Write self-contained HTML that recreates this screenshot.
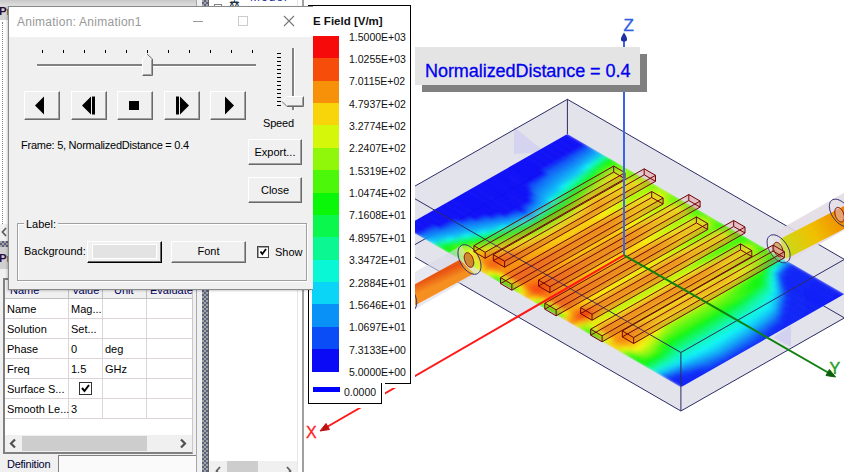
<!DOCTYPE html>
<html><head><meta charset="utf-8">
<style>
*{box-sizing:border-box;margin:0;padding:0}
html,body{width:844px;height:472px;overflow:hidden;background:#fff}
body{position:relative;font-family:"Liberation Sans",sans-serif;font-size:11px;color:#000}
.a{position:absolute}
.btn{position:absolute;background:#f0f0f0;border-top:1px solid #fff;border-left:1px solid #fff;border-right:1px solid #696969;border-bottom:1px solid #696969;box-shadow:inset -1px -1px 0 #a0a0a0}
.btn span{position:absolute;left:0;right:0;text-align:center}
.grid{position:absolute;border-bottom:1px solid #dcd4d8}
</style></head><body>

<!-- ===== background left panel ===== -->
<div class="a" style="left:0;top:0;width:202px;height:6px;background:linear-gradient(#c8c8c8,#e0e0e0)"></div>
<div class="a" style="left:0;top:6px;width:202px;height:14px;background:#d4d4d4"></div>
<div class="a" style="left:-1px;top:3px;font-size:11.5px;font-weight:bold;color:#280c30;line-height:13px;padding-top:2px">Project M</div>
<div class="a" style="left:0;top:20px;width:197px;height:204px;background:#fff"></div>
<div class="a" style="left:2px;top:22px;width:1px;height:202px;border-left:1px dotted #808080"></div>
<div class="a" style="left:0;top:224px;width:197px;height:17px;background:#f0f0f0"></div>


<div class="a" style="left:0;top:241px;width:202px;height:6px;background:repeating-conic-gradient(#5a6280 0 25%,#a4a4a4 0 50%) 0 0/4px 4px"></div>
<div class="a" style="left:0;top:247px;width:197px;height:22px;background:#d0d0d0"></div>
<div class="a" style="left:-1px;top:252px;font-size:11.5px;font-weight:bold;color:#280c40;line-height:13px">Properties</div>
<div class="a" style="left:0;top:269px;width:197px;height:203px;background:#f0f0f0"></div>
<!-- table -->
<div class="a" style="left:3px;top:278px;width:190px;height:176px;border:2px solid #808080;border-right:1px solid #c8c8c8;background:#fff"></div>
<div class="a" style="left:5px;top:280px;width:187px;height:19px;background:#f0f0f0;border-bottom:1px solid #c0c0c0"></div>
<div class="a" style="left:10px;top:284px;color:#000060">Name</div>
<div class="a" style="left:72px;top:284px;color:#000060">Value</div>
<div class="a" style="left:114px;top:284px;color:#000060">Unit</div>
<div class="a" style="left:150px;top:284px;color:#000060">Evaluate</div>
<div class="a" style="left:68px;top:280px;width:1px;height:19px;background:#c0c0c0"></div>
<div class="a" style="left:102px;top:280px;width:1px;height:19px;background:#c0c0c0"></div>
<div class="a" style="left:146px;top:280px;width:1px;height:19px;background:#c0c0c0"></div>
<div class="a" style="left:68px;top:299px;width:1px;height:120px;border-left:1px solid #dcd4d8"></div>
<div class="a" style="left:102px;top:299px;width:1px;height:120px;border-left:1px solid #dcd4d8"></div>
<div class="a" style="left:146px;top:299px;width:1px;height:120px;border-left:1px solid #dcd4d8"></div>
<div class="grid" style="left:5px;top:299px;width:187px;height:20px"></div>
<div class="grid" style="left:5px;top:319px;width:187px;height:20px"></div>
<div class="grid" style="left:5px;top:339px;width:187px;height:20px"></div>
<div class="grid" style="left:5px;top:359px;width:187px;height:20px"></div>
<div class="grid" style="left:5px;top:379px;width:187px;height:20px"></div>
<div class="grid" style="left:5px;top:399px;width:187px;height:20px"></div>
<div class="a" style="left:7px;top:303px">Name</div><div class="a" style="left:71px;top:303px">Mag...</div>
<div class="a" style="left:7px;top:323px">Solution</div><div class="a" style="left:71px;top:323px">Set...</div>
<div class="a" style="left:7px;top:343px">Phase</div><div class="a" style="left:71px;top:343px">0</div><div class="a" style="left:105px;top:343px">deg</div>
<div class="a" style="left:7px;top:363px">Freq</div><div class="a" style="left:71px;top:363px">1.5</div><div class="a" style="left:105px;top:363px">GHz</div>
<div class="a" style="left:7px;top:383px">Surface S...</div>
<div class="a" style="left:79px;top:382px;width:13px;height:13px;border:1px solid #333;background:#fff"><svg width="11" height="11" style="position:absolute;left:0;top:0"><path d="M2 5 L4.5 8 L9 2" stroke="#000" stroke-width="2" fill="none"/></svg></div>
<div class="a" style="left:7px;top:403px">Smooth Le...</div><div class="a" style="left:71px;top:403px">3</div>
<!-- table scrollbar -->
<div class="a" style="left:5px;top:435px;width:187px;height:17px;background:#f0f0f0"></div>
<div class="a" style="left:22px;top:436px;width:125px;height:15px;background:#cdcdcd"></div>
<svg class="a" style="left:0;top:0" width="200" height="472"><path d="M15 439.5 L11 443.5 L15 447.5" stroke="#505050" stroke-width="2.2" fill="none"/><path d="M181 439.5 L185 443.5 L181 447.5" stroke="#505050" stroke-width="2.2" fill="none"/><path d="M6 228 L2.5 232 L6 236" stroke="#606060" stroke-width="1.8" fill="none"/></svg>
<!-- definition tab -->
<div class="a" style="left:58px;top:455px;width:139px;height:17px;background:#fafafa;border-top:1px solid #808080;border-left:1px solid #808080"></div>
<div class="a" style="left:7px;top:458px;font-size:11px;color:#000030;letter-spacing:-0.25px">Definition</div>

<!-- vertical splitter -->
<div class="a" style="left:197px;top:0;width:5px;height:472px;background:#f0f0f0"></div>
<div class="a" style="left:196px;top:0;width:1px;height:472px;background:#a8a8a8"></div>
<div class="a" style="left:202px;top:0;width:7px;height:472px;background:repeating-conic-gradient(#5a6280 0 25%,#a4a4a4 0 50%) 0 0/4px 4px"></div>
<div class="a" style="left:208px;top:0;width:1px;height:472px;background:#606060"></div>
<!-- middle panel -->
<div class="a" style="left:209px;top:0;width:94px;height:472px;background:#fff"></div>
<div class="a" style="left:297px;top:0;width:1px;height:472px;background:#e8e8e8"></div>
<div class="a" style="left:302px;top:0;width:2px;height:472px;background:#a0a0a0"></div>
<div class="a" style="left:209px;top:461px;width:88px;height:11px;background:#f0f0f0"></div>
<div class="a" style="left:227px;top:461px;width:31px;height:11px;background:#cdcdcd"></div>
<svg class="a" style="left:200px;top:440px" width="100" height="32"><path d="M20 27 L16.5 31 L20 35" stroke="#606060" stroke-width="1.8" fill="none"/><path d="M87 27 L90.5 31 L87 35" stroke="#606060" stroke-width="1.8" fill="none"/></svg>

<div class="a" style="left:214px;top:4px;width:8px;height:8px;border:1px solid #808080"></div>
<div class="a" style="left:229px;top:-2px;font-size:12px;font-weight:bold;color:#203040">&#x2696;</div>
<div class="a" style="left:250px;top:-10px;font-size:12px;color:#2030a0;letter-spacing:1px">Model</div>
<!-- 3D view -->
<div class="a" style="left:304px;top:0;width:540px;height:472px;background:#fff"></div>


<svg class="a" style="left:0;top:0" width="844" height="472">
<defs><linearGradient id="g0" gradientUnits="userSpaceOnUse" x1="0" y1="0" x2="1000" y2="0"><stop offset="0.000" stop-color="#0a0af7"/><stop offset="0.020" stop-color="#0a0af7"/><stop offset="0.040" stop-color="#0a0af7"/><stop offset="0.060" stop-color="#0a0af7"/><stop offset="0.080" stop-color="#0a61f7"/><stop offset="0.100" stop-color="#0a90f7"/><stop offset="0.120" stop-color="#0abff7"/><stop offset="0.140" stop-color="#0af7a0"/><stop offset="0.160" stop-color="#10f70a"/><stop offset="0.180" stop-color="#39f70a"/><stop offset="0.200" stop-color="#71f70a"/><stop offset="0.220" stop-color="#87f70a"/><stop offset="0.240" stop-color="#6ef70a"/><stop offset="0.260" stop-color="#99f70a"/><stop offset="0.280" stop-color="#b7f70a"/><stop offset="0.300" stop-color="#a2f70a"/><stop offset="0.320" stop-color="#83f70a"/><stop offset="0.340" stop-color="#a2f70a"/><stop offset="0.360" stop-color="#adf70a"/><stop offset="0.380" stop-color="#83f70a"/><stop offset="0.400" stop-color="#65f70a"/><stop offset="0.420" stop-color="#85f70a"/><stop offset="0.440" stop-color="#88f70a"/><stop offset="0.460" stop-color="#5df70a"/><stop offset="0.480" stop-color="#43f70a"/><stop offset="0.500" stop-color="#65f70a"/><stop offset="0.520" stop-color="#7df70a"/><stop offset="0.540" stop-color="#5ff70a"/><stop offset="0.560" stop-color="#3af70a"/><stop offset="0.580" stop-color="#5ef70a"/><stop offset="0.600" stop-color="#72f70a"/><stop offset="0.620" stop-color="#50f70a"/><stop offset="0.640" stop-color="#2af70a"/><stop offset="0.660" stop-color="#46f70a"/><stop offset="0.680" stop-color="#67f70a"/><stop offset="0.700" stop-color="#52f70a"/><stop offset="0.720" stop-color="#3ef70a"/><stop offset="0.740" stop-color="#5cf70a"/><stop offset="0.760" stop-color="#0af73f"/><stop offset="0.780" stop-color="#0af7de"/><stop offset="0.800" stop-color="#0a76f7"/><stop offset="0.820" stop-color="#0a25f7"/><stop offset="0.840" stop-color="#0a24f7"/><stop offset="0.860" stop-color="#0a22f7"/><stop offset="0.880" stop-color="#0a21f7"/><stop offset="0.900" stop-color="#0a1ff7"/><stop offset="0.920" stop-color="#0a1ef7"/><stop offset="0.940" stop-color="#0a1df7"/><stop offset="0.960" stop-color="#0a1bf7"/><stop offset="0.980" stop-color="#0a1af7"/><stop offset="1.000" stop-color="#0a18f7"/></linearGradient><linearGradient id="g1" gradientUnits="userSpaceOnUse" x1="0" y1="0" x2="1000" y2="0"><stop offset="0.000" stop-color="#0a0af7"/><stop offset="0.020" stop-color="#0a0af7"/><stop offset="0.040" stop-color="#0a0af7"/><stop offset="0.060" stop-color="#0a0af7"/><stop offset="0.080" stop-color="#0a5ef7"/><stop offset="0.100" stop-color="#0a8df7"/><stop offset="0.120" stop-color="#0abcf7"/><stop offset="0.140" stop-color="#0af7aa"/><stop offset="0.160" stop-color="#0bf70a"/><stop offset="0.180" stop-color="#3ef70a"/><stop offset="0.200" stop-color="#7af70a"/><stop offset="0.220" stop-color="#95f70a"/><stop offset="0.240" stop-color="#75f70a"/><stop offset="0.260" stop-color="#a2f70a"/><stop offset="0.280" stop-color="#c1f70a"/><stop offset="0.300" stop-color="#a6f70a"/><stop offset="0.320" stop-color="#86f70a"/><stop offset="0.340" stop-color="#aaf70a"/><stop offset="0.360" stop-color="#b8f70a"/><stop offset="0.380" stop-color="#8cf70a"/><stop offset="0.400" stop-color="#6cf70a"/><stop offset="0.420" stop-color="#91f70a"/><stop offset="0.440" stop-color="#96f70a"/><stop offset="0.460" stop-color="#68f70a"/><stop offset="0.480" stop-color="#4bf70a"/><stop offset="0.500" stop-color="#71f70a"/><stop offset="0.520" stop-color="#8df70a"/><stop offset="0.540" stop-color="#6bf70a"/><stop offset="0.560" stop-color="#3ff70a"/><stop offset="0.580" stop-color="#6af70a"/><stop offset="0.600" stop-color="#83f70a"/><stop offset="0.620" stop-color="#59f70a"/><stop offset="0.640" stop-color="#2bf70a"/><stop offset="0.660" stop-color="#4ef70a"/><stop offset="0.680" stop-color="#78f70a"/><stop offset="0.700" stop-color="#5ff70a"/><stop offset="0.720" stop-color="#46f70a"/><stop offset="0.740" stop-color="#5ff70a"/><stop offset="0.760" stop-color="#0af72b"/><stop offset="0.780" stop-color="#0af7ca"/><stop offset="0.800" stop-color="#0a88f7"/><stop offset="0.820" stop-color="#0a25f7"/><stop offset="0.840" stop-color="#0a24f7"/><stop offset="0.860" stop-color="#0a23f7"/><stop offset="0.880" stop-color="#0a21f7"/><stop offset="0.900" stop-color="#0a20f7"/><stop offset="0.920" stop-color="#0a1ef7"/><stop offset="0.940" stop-color="#0a1df7"/><stop offset="0.960" stop-color="#0a1bf7"/><stop offset="0.980" stop-color="#0a1af7"/><stop offset="1.000" stop-color="#0a18f7"/></linearGradient><linearGradient id="g2" gradientUnits="userSpaceOnUse" x1="0" y1="0" x2="1000" y2="0"><stop offset="0.000" stop-color="#0a0af7"/><stop offset="0.020" stop-color="#0a0af7"/><stop offset="0.040" stop-color="#0a0af7"/><stop offset="0.060" stop-color="#0a0af7"/><stop offset="0.080" stop-color="#0a5af7"/><stop offset="0.100" stop-color="#0a89f7"/><stop offset="0.120" stop-color="#0ab9f7"/><stop offset="0.140" stop-color="#0af7b5"/><stop offset="0.160" stop-color="#0af711"/><stop offset="0.180" stop-color="#45f70a"/><stop offset="0.200" stop-color="#87f70a"/><stop offset="0.220" stop-color="#abf70a"/><stop offset="0.240" stop-color="#7ff70a"/><stop offset="0.260" stop-color="#b2f70a"/><stop offset="0.280" stop-color="#d1f70a"/><stop offset="0.300" stop-color="#acf70a"/><stop offset="0.320" stop-color="#8bf70a"/><stop offset="0.340" stop-color="#b7f70a"/><stop offset="0.360" stop-color="#cbf70a"/><stop offset="0.380" stop-color="#9af70a"/><stop offset="0.400" stop-color="#78f70a"/><stop offset="0.420" stop-color="#a5f70a"/><stop offset="0.440" stop-color="#aef70a"/><stop offset="0.460" stop-color="#7af70a"/><stop offset="0.480" stop-color="#5af70a"/><stop offset="0.500" stop-color="#86f70a"/><stop offset="0.520" stop-color="#a8f70a"/><stop offset="0.540" stop-color="#7ff70a"/><stop offset="0.560" stop-color="#48f70a"/><stop offset="0.580" stop-color="#7ef70a"/><stop offset="0.600" stop-color="#a0f70a"/><stop offset="0.620" stop-color="#69f70a"/><stop offset="0.640" stop-color="#2df70a"/><stop offset="0.660" stop-color="#5df70a"/><stop offset="0.680" stop-color="#96f70a"/><stop offset="0.700" stop-color="#75f70a"/><stop offset="0.720" stop-color="#54f70a"/><stop offset="0.740" stop-color="#67f70a"/><stop offset="0.760" stop-color="#0af717"/><stop offset="0.780" stop-color="#0af7b6"/><stop offset="0.800" stop-color="#0a99f7"/><stop offset="0.820" stop-color="#0a26f7"/><stop offset="0.840" stop-color="#0a24f7"/><stop offset="0.860" stop-color="#0a23f7"/><stop offset="0.880" stop-color="#0a21f7"/><stop offset="0.900" stop-color="#0a20f7"/><stop offset="0.920" stop-color="#0a1ef7"/><stop offset="0.940" stop-color="#0a1df7"/><stop offset="0.960" stop-color="#0a1bf7"/><stop offset="0.980" stop-color="#0a1af7"/><stop offset="1.000" stop-color="#0a18f7"/></linearGradient><linearGradient id="g3" gradientUnits="userSpaceOnUse" x1="0" y1="0" x2="1000" y2="0"><stop offset="0.000" stop-color="#0a0af7"/><stop offset="0.020" stop-color="#0a0af7"/><stop offset="0.040" stop-color="#0a0af7"/><stop offset="0.060" stop-color="#0a0af7"/><stop offset="0.080" stop-color="#0a57f7"/><stop offset="0.100" stop-color="#0a87f7"/><stop offset="0.120" stop-color="#0ab6f7"/><stop offset="0.140" stop-color="#0af7be"/><stop offset="0.160" stop-color="#0af71b"/><stop offset="0.180" stop-color="#4bf70a"/><stop offset="0.200" stop-color="#95f70a"/><stop offset="0.220" stop-color="#c7f70a"/><stop offset="0.240" stop-color="#8cf70a"/><stop offset="0.260" stop-color="#c4f70a"/><stop offset="0.280" stop-color="#e5f70a"/><stop offset="0.300" stop-color="#b4f70a"/><stop offset="0.320" stop-color="#90f70a"/><stop offset="0.340" stop-color="#c8f70a"/><stop offset="0.360" stop-color="#e1f70a"/><stop offset="0.380" stop-color="#abf70a"/><stop offset="0.400" stop-color="#87f70a"/><stop offset="0.420" stop-color="#bef70a"/><stop offset="0.440" stop-color="#cbf70a"/><stop offset="0.460" stop-color="#90f70a"/><stop offset="0.480" stop-color="#6bf70a"/><stop offset="0.500" stop-color="#a0f70a"/><stop offset="0.520" stop-color="#c8f70a"/><stop offset="0.540" stop-color="#97f70a"/><stop offset="0.560" stop-color="#53f70a"/><stop offset="0.580" stop-color="#96f70a"/><stop offset="0.600" stop-color="#c2f70a"/><stop offset="0.620" stop-color="#7df70a"/><stop offset="0.640" stop-color="#30f70a"/><stop offset="0.660" stop-color="#6ef70a"/><stop offset="0.680" stop-color="#baf70a"/><stop offset="0.700" stop-color="#90f70a"/><stop offset="0.720" stop-color="#66f70a"/><stop offset="0.740" stop-color="#73f70a"/><stop offset="0.760" stop-color="#0ff70a"/><stop offset="0.780" stop-color="#0af7a2"/><stop offset="0.800" stop-color="#0aabf7"/><stop offset="0.820" stop-color="#0a26f7"/><stop offset="0.840" stop-color="#0a24f7"/><stop offset="0.860" stop-color="#0a23f7"/><stop offset="0.880" stop-color="#0a21f7"/><stop offset="0.900" stop-color="#0a20f7"/><stop offset="0.920" stop-color="#0a1ef7"/><stop offset="0.940" stop-color="#0a1df7"/><stop offset="0.960" stop-color="#0a1bf7"/><stop offset="0.980" stop-color="#0a1af7"/><stop offset="1.000" stop-color="#0a18f7"/></linearGradient><linearGradient id="g4" gradientUnits="userSpaceOnUse" x1="0" y1="0" x2="1000" y2="0"><stop offset="0.000" stop-color="#0a0af7"/><stop offset="0.020" stop-color="#0a0af7"/><stop offset="0.040" stop-color="#0a0af7"/><stop offset="0.060" stop-color="#0a0af7"/><stop offset="0.080" stop-color="#0a56f7"/><stop offset="0.100" stop-color="#0a85f7"/><stop offset="0.120" stop-color="#0ab4f7"/><stop offset="0.140" stop-color="#0af7c7"/><stop offset="0.160" stop-color="#0af725"/><stop offset="0.180" stop-color="#4ef70a"/><stop offset="0.200" stop-color="#a1f70a"/><stop offset="0.220" stop-color="#e1f70a"/><stop offset="0.240" stop-color="#98f70a"/><stop offset="0.260" stop-color="#d7f70a"/><stop offset="0.280" stop-color="#f7f40a"/><stop offset="0.300" stop-color="#bcf70a"/><stop offset="0.320" stop-color="#96f70a"/><stop offset="0.340" stop-color="#d8f70a"/><stop offset="0.360" stop-color="#f7f50a"/><stop offset="0.380" stop-color="#bdf70a"/><stop offset="0.400" stop-color="#96f70a"/><stop offset="0.420" stop-color="#d7f70a"/><stop offset="0.440" stop-color="#e9f70a"/><stop offset="0.460" stop-color="#a6f70a"/><stop offset="0.480" stop-color="#7cf70a"/><stop offset="0.500" stop-color="#baf70a"/><stop offset="0.520" stop-color="#e9f70a"/><stop offset="0.540" stop-color="#aff70a"/><stop offset="0.560" stop-color="#5df70a"/><stop offset="0.580" stop-color="#aff70a"/><stop offset="0.600" stop-color="#e5f70a"/><stop offset="0.620" stop-color="#91f70a"/><stop offset="0.640" stop-color="#33f70a"/><stop offset="0.660" stop-color="#80f70a"/><stop offset="0.680" stop-color="#dff70a"/><stop offset="0.700" stop-color="#acf70a"/><stop offset="0.720" stop-color="#78f70a"/><stop offset="0.740" stop-color="#83f70a"/><stop offset="0.760" stop-color="#23f70a"/><stop offset="0.780" stop-color="#0af78e"/><stop offset="0.800" stop-color="#0abef7"/><stop offset="0.820" stop-color="#0a2ff7"/><stop offset="0.840" stop-color="#0a25f7"/><stop offset="0.860" stop-color="#0a23f7"/><stop offset="0.880" stop-color="#0a22f7"/><stop offset="0.900" stop-color="#0a20f7"/><stop offset="0.920" stop-color="#0a1ff7"/><stop offset="0.940" stop-color="#0a1df7"/><stop offset="0.960" stop-color="#0a1cf7"/><stop offset="0.980" stop-color="#0a1af7"/><stop offset="1.000" stop-color="#0a19f7"/></linearGradient><linearGradient id="g5" gradientUnits="userSpaceOnUse" x1="0" y1="0" x2="1000" y2="0"><stop offset="0.000" stop-color="#0a0af7"/><stop offset="0.020" stop-color="#0a0af7"/><stop offset="0.040" stop-color="#0a0af7"/><stop offset="0.060" stop-color="#0a0af7"/><stop offset="0.080" stop-color="#0a55f7"/><stop offset="0.100" stop-color="#0a83f7"/><stop offset="0.120" stop-color="#0ab2f7"/><stop offset="0.140" stop-color="#0af7cf"/><stop offset="0.160" stop-color="#0af72e"/><stop offset="0.180" stop-color="#4ff70a"/><stop offset="0.200" stop-color="#a8f70a"/><stop offset="0.220" stop-color="#f5f70a"/><stop offset="0.240" stop-color="#a3f70a"/><stop offset="0.260" stop-color="#e8f70a"/><stop offset="0.280" stop-color="#f7e30a"/><stop offset="0.300" stop-color="#c3f70a"/><stop offset="0.320" stop-color="#9bf70a"/><stop offset="0.340" stop-color="#e6f70a"/><stop offset="0.360" stop-color="#f7e20a"/><stop offset="0.380" stop-color="#ccf70a"/><stop offset="0.400" stop-color="#a2f70a"/><stop offset="0.420" stop-color="#edf70a"/><stop offset="0.440" stop-color="#f7eb0a"/><stop offset="0.460" stop-color="#b9f70a"/><stop offset="0.480" stop-color="#8bf70a"/><stop offset="0.500" stop-color="#d1f70a"/><stop offset="0.520" stop-color="#f7e70a"/><stop offset="0.540" stop-color="#c4f70a"/><stop offset="0.560" stop-color="#67f70a"/><stop offset="0.580" stop-color="#c4f70a"/><stop offset="0.600" stop-color="#f7ea0a"/><stop offset="0.620" stop-color="#a2f70a"/><stop offset="0.640" stop-color="#35f70a"/><stop offset="0.660" stop-color="#8ff70a"/><stop offset="0.680" stop-color="#f7ef0a"/><stop offset="0.700" stop-color="#c3f70a"/><stop offset="0.720" stop-color="#87f70a"/><stop offset="0.740" stop-color="#94f70a"/><stop offset="0.760" stop-color="#37f70a"/><stop offset="0.780" stop-color="#0af77a"/><stop offset="0.800" stop-color="#0ad2f7"/><stop offset="0.820" stop-color="#0a41f7"/><stop offset="0.840" stop-color="#0a25f7"/><stop offset="0.860" stop-color="#0a23f7"/><stop offset="0.880" stop-color="#0a22f7"/><stop offset="0.900" stop-color="#0a20f7"/><stop offset="0.920" stop-color="#0a1ff7"/><stop offset="0.940" stop-color="#0a1df7"/><stop offset="0.960" stop-color="#0a1cf7"/><stop offset="0.980" stop-color="#0a1af7"/><stop offset="1.000" stop-color="#0a19f7"/></linearGradient><linearGradient id="g6" gradientUnits="userSpaceOnUse" x1="0" y1="0" x2="1000" y2="0"><stop offset="0.000" stop-color="#0a0af7"/><stop offset="0.020" stop-color="#0a0af7"/><stop offset="0.040" stop-color="#0a0af7"/><stop offset="0.060" stop-color="#0a0af7"/><stop offset="0.080" stop-color="#0a53f7"/><stop offset="0.100" stop-color="#0a82f7"/><stop offset="0.120" stop-color="#0ab0f7"/><stop offset="0.140" stop-color="#0af7d7"/><stop offset="0.160" stop-color="#0af737"/><stop offset="0.180" stop-color="#4df70a"/><stop offset="0.200" stop-color="#abf70a"/><stop offset="0.220" stop-color="#f7ec0a"/><stop offset="0.240" stop-color="#abf70a"/><stop offset="0.260" stop-color="#f2f70a"/><stop offset="0.280" stop-color="#f7d80a"/><stop offset="0.300" stop-color="#c8f70a"/><stop offset="0.320" stop-color="#9ef70a"/><stop offset="0.340" stop-color="#f0f70a"/><stop offset="0.360" stop-color="#f7d50a"/><stop offset="0.380" stop-color="#d6f70a"/><stop offset="0.400" stop-color="#abf70a"/><stop offset="0.420" stop-color="#f7f20a"/><stop offset="0.440" stop-color="#f7db0a"/><stop offset="0.460" stop-color="#c6f70a"/><stop offset="0.480" stop-color="#95f70a"/><stop offset="0.500" stop-color="#dff70a"/><stop offset="0.520" stop-color="#f7d50a"/><stop offset="0.540" stop-color="#d2f70a"/><stop offset="0.560" stop-color="#6df70a"/><stop offset="0.580" stop-color="#d2f70a"/><stop offset="0.600" stop-color="#f7d60a"/><stop offset="0.620" stop-color="#adf70a"/><stop offset="0.640" stop-color="#36f70a"/><stop offset="0.660" stop-color="#99f70a"/><stop offset="0.680" stop-color="#f7da0a"/><stop offset="0.700" stop-color="#d2f70a"/><stop offset="0.720" stop-color="#91f70a"/><stop offset="0.740" stop-color="#a3f70a"/><stop offset="0.760" stop-color="#4bf70a"/><stop offset="0.780" stop-color="#0af766"/><stop offset="0.800" stop-color="#0ae7f7"/><stop offset="0.820" stop-color="#0a52f7"/><stop offset="0.840" stop-color="#0a25f7"/><stop offset="0.860" stop-color="#0a23f7"/><stop offset="0.880" stop-color="#0a22f7"/><stop offset="0.900" stop-color="#0a20f7"/><stop offset="0.920" stop-color="#0a1ff7"/><stop offset="0.940" stop-color="#0a1df7"/><stop offset="0.960" stop-color="#0a1cf7"/><stop offset="0.980" stop-color="#0a1af7"/><stop offset="1.000" stop-color="#0a19f7"/></linearGradient><linearGradient id="g7" gradientUnits="userSpaceOnUse" x1="0" y1="0" x2="1000" y2="0"><stop offset="0.000" stop-color="#0a0af7"/><stop offset="0.020" stop-color="#0a0af7"/><stop offset="0.040" stop-color="#0a0af7"/><stop offset="0.060" stop-color="#0a0af7"/><stop offset="0.080" stop-color="#0a52f7"/><stop offset="0.100" stop-color="#0a80f7"/><stop offset="0.120" stop-color="#0aaef7"/><stop offset="0.140" stop-color="#0af7df"/><stop offset="0.160" stop-color="#0af740"/><stop offset="0.180" stop-color="#48f70a"/><stop offset="0.200" stop-color="#a6f70a"/><stop offset="0.220" stop-color="#f7ed0a"/><stop offset="0.240" stop-color="#acf70a"/><stop offset="0.260" stop-color="#f5f70a"/><stop offset="0.280" stop-color="#f7d50a"/><stop offset="0.300" stop-color="#c9f70a"/><stop offset="0.320" stop-color="#9ff70a"/><stop offset="0.340" stop-color="#f2f70a"/><stop offset="0.360" stop-color="#f7d20a"/><stop offset="0.380" stop-color="#d8f70a"/><stop offset="0.400" stop-color="#adf70a"/><stop offset="0.420" stop-color="#f7ef0a"/><stop offset="0.440" stop-color="#f7d60a"/><stop offset="0.460" stop-color="#c9f70a"/><stop offset="0.480" stop-color="#98f70a"/><stop offset="0.500" stop-color="#e3f70a"/><stop offset="0.520" stop-color="#f7d00a"/><stop offset="0.540" stop-color="#d5f70a"/><stop offset="0.560" stop-color="#6ef70a"/><stop offset="0.580" stop-color="#d5f70a"/><stop offset="0.600" stop-color="#f7d10a"/><stop offset="0.620" stop-color="#b0f70a"/><stop offset="0.640" stop-color="#37f70a"/><stop offset="0.660" stop-color="#9cf70a"/><stop offset="0.680" stop-color="#f7d50a"/><stop offset="0.700" stop-color="#d6f70a"/><stop offset="0.720" stop-color="#94f70a"/><stop offset="0.740" stop-color="#acf70a"/><stop offset="0.760" stop-color="#5ef70a"/><stop offset="0.780" stop-color="#0af753"/><stop offset="0.800" stop-color="#0af7f2"/><stop offset="0.820" stop-color="#0a64f7"/><stop offset="0.840" stop-color="#0a25f7"/><stop offset="0.860" stop-color="#0a24f7"/><stop offset="0.880" stop-color="#0a22f7"/><stop offset="0.900" stop-color="#0a20f7"/><stop offset="0.920" stop-color="#0a1ff7"/><stop offset="0.940" stop-color="#0a1df7"/><stop offset="0.960" stop-color="#0a1cf7"/><stop offset="0.980" stop-color="#0a1af7"/><stop offset="1.000" stop-color="#0a19f7"/></linearGradient><linearGradient id="g8" gradientUnits="userSpaceOnUse" x1="0" y1="0" x2="1000" y2="0"><stop offset="0.000" stop-color="#0a0af7"/><stop offset="0.020" stop-color="#0a0af7"/><stop offset="0.040" stop-color="#0a0af7"/><stop offset="0.060" stop-color="#0a0af7"/><stop offset="0.080" stop-color="#0a51f7"/><stop offset="0.100" stop-color="#0a7ef7"/><stop offset="0.120" stop-color="#0aabf7"/><stop offset="0.140" stop-color="#0af7eb"/><stop offset="0.160" stop-color="#0af74e"/><stop offset="0.180" stop-color="#3ef70a"/><stop offset="0.200" stop-color="#9df70a"/><stop offset="0.220" stop-color="#f7f30a"/><stop offset="0.240" stop-color="#adf70a"/><stop offset="0.260" stop-color="#f6f70a"/><stop offset="0.280" stop-color="#f7d40a"/><stop offset="0.300" stop-color="#c9f70a"/><stop offset="0.320" stop-color="#9ff70a"/><stop offset="0.340" stop-color="#f3f70a"/><stop offset="0.360" stop-color="#f7d10a"/><stop offset="0.380" stop-color="#d9f70a"/><stop offset="0.400" stop-color="#adf70a"/><stop offset="0.420" stop-color="#f7ee0a"/><stop offset="0.440" stop-color="#f7d50a"/><stop offset="0.460" stop-color="#c9f70a"/><stop offset="0.480" stop-color="#98f70a"/><stop offset="0.500" stop-color="#e4f70a"/><stop offset="0.520" stop-color="#f7cf0a"/><stop offset="0.540" stop-color="#d6f70a"/><stop offset="0.560" stop-color="#6ff70a"/><stop offset="0.580" stop-color="#d6f70a"/><stop offset="0.600" stop-color="#f7d00a"/><stop offset="0.620" stop-color="#b0f70a"/><stop offset="0.640" stop-color="#37f70a"/><stop offset="0.660" stop-color="#9cf70a"/><stop offset="0.680" stop-color="#f7d40a"/><stop offset="0.700" stop-color="#d7f70a"/><stop offset="0.720" stop-color="#94f70a"/><stop offset="0.740" stop-color="#b6f70a"/><stop offset="0.760" stop-color="#71f70a"/><stop offset="0.780" stop-color="#0af732"/><stop offset="0.800" stop-color="#0af7cc"/><stop offset="0.820" stop-color="#0a8df7"/><stop offset="0.840" stop-color="#0a26f7"/><stop offset="0.860" stop-color="#0a24f7"/><stop offset="0.880" stop-color="#0a22f7"/><stop offset="0.900" stop-color="#0a21f7"/><stop offset="0.920" stop-color="#0a1ff7"/><stop offset="0.940" stop-color="#0a1ef7"/><stop offset="0.960" stop-color="#0a1cf7"/><stop offset="0.980" stop-color="#0a1bf7"/><stop offset="1.000" stop-color="#0a19f7"/></linearGradient><linearGradient id="g9" gradientUnits="userSpaceOnUse" x1="0" y1="0" x2="1000" y2="0"><stop offset="0.000" stop-color="#0a0af7"/><stop offset="0.020" stop-color="#0a0af7"/><stop offset="0.040" stop-color="#0a0af7"/><stop offset="0.060" stop-color="#0a0af7"/><stop offset="0.080" stop-color="#0a50f7"/><stop offset="0.100" stop-color="#0a7cf7"/><stop offset="0.120" stop-color="#0aa8f7"/><stop offset="0.140" stop-color="#0af7f7"/><stop offset="0.160" stop-color="#0af75d"/><stop offset="0.180" stop-color="#35f70a"/><stop offset="0.200" stop-color="#94f70a"/><stop offset="0.220" stop-color="#f2f70a"/><stop offset="0.240" stop-color="#aef70a"/><stop offset="0.260" stop-color="#f7f60a"/><stop offset="0.280" stop-color="#f7d20a"/><stop offset="0.300" stop-color="#cbf70a"/><stop offset="0.320" stop-color="#a0f70a"/><stop offset="0.340" stop-color="#f4f70a"/><stop offset="0.360" stop-color="#f7cf0a"/><stop offset="0.380" stop-color="#daf70a"/><stop offset="0.400" stop-color="#aef70a"/><stop offset="0.420" stop-color="#f7ec0a"/><stop offset="0.440" stop-color="#f7d40a"/><stop offset="0.460" stop-color="#cbf70a"/><stop offset="0.480" stop-color="#99f70a"/><stop offset="0.500" stop-color="#e5f70a"/><stop offset="0.520" stop-color="#f7ce0a"/><stop offset="0.540" stop-color="#d7f70a"/><stop offset="0.560" stop-color="#70f70a"/><stop offset="0.580" stop-color="#d7f70a"/><stop offset="0.600" stop-color="#f7cf0a"/><stop offset="0.620" stop-color="#b2f70a"/><stop offset="0.640" stop-color="#38f70a"/><stop offset="0.660" stop-color="#9df70a"/><stop offset="0.680" stop-color="#f7d20a"/><stop offset="0.700" stop-color="#d9f70a"/><stop offset="0.720" stop-color="#95f70a"/><stop offset="0.740" stop-color="#c3f70a"/><stop offset="0.760" stop-color="#81f70a"/><stop offset="0.780" stop-color="#0bf70a"/><stop offset="0.800" stop-color="#0af79c"/><stop offset="0.820" stop-color="#0ac9f7"/><stop offset="0.840" stop-color="#0a46f7"/><stop offset="0.860" stop-color="#0a25f7"/><stop offset="0.880" stop-color="#0a23f7"/><stop offset="0.900" stop-color="#0a22f7"/><stop offset="0.920" stop-color="#0a20f7"/><stop offset="0.940" stop-color="#0a1ef7"/><stop offset="0.960" stop-color="#0a1df7"/><stop offset="0.980" stop-color="#0a1bf7"/><stop offset="1.000" stop-color="#0a1af7"/></linearGradient><linearGradient id="g10" gradientUnits="userSpaceOnUse" x1="0" y1="0" x2="1000" y2="0"><stop offset="0.000" stop-color="#0a0af7"/><stop offset="0.020" stop-color="#0a0af7"/><stop offset="0.040" stop-color="#0a0af7"/><stop offset="0.060" stop-color="#0a0af7"/><stop offset="0.080" stop-color="#0a4ef7"/><stop offset="0.100" stop-color="#0a7af7"/><stop offset="0.120" stop-color="#0aa6f7"/><stop offset="0.140" stop-color="#0aebf7"/><stop offset="0.160" stop-color="#0af76b"/><stop offset="0.180" stop-color="#2bf70a"/><stop offset="0.200" stop-color="#8af70a"/><stop offset="0.220" stop-color="#e9f70a"/><stop offset="0.240" stop-color="#b0f70a"/><stop offset="0.260" stop-color="#f7f40a"/><stop offset="0.280" stop-color="#f7d00a"/><stop offset="0.300" stop-color="#cdf70a"/><stop offset="0.320" stop-color="#a2f70a"/><stop offset="0.340" stop-color="#f6f70a"/><stop offset="0.360" stop-color="#f7cd0a"/><stop offset="0.380" stop-color="#dcf70a"/><stop offset="0.400" stop-color="#b0f70a"/><stop offset="0.420" stop-color="#f7ea0a"/><stop offset="0.440" stop-color="#f7d20a"/><stop offset="0.460" stop-color="#cdf70a"/><stop offset="0.480" stop-color="#9bf70a"/><stop offset="0.500" stop-color="#e7f70a"/><stop offset="0.520" stop-color="#f7cb0a"/><stop offset="0.540" stop-color="#d9f70a"/><stop offset="0.560" stop-color="#72f70a"/><stop offset="0.580" stop-color="#d9f70a"/><stop offset="0.600" stop-color="#f7cd0a"/><stop offset="0.620" stop-color="#b4f70a"/><stop offset="0.640" stop-color="#3af70a"/><stop offset="0.660" stop-color="#a0f70a"/><stop offset="0.680" stop-color="#f7d00a"/><stop offset="0.700" stop-color="#dbf70a"/><stop offset="0.720" stop-color="#97f70a"/><stop offset="0.740" stop-color="#cef70a"/><stop offset="0.760" stop-color="#8ff70a"/><stop offset="0.780" stop-color="#33f70a"/><stop offset="0.800" stop-color="#0af76f"/><stop offset="0.820" stop-color="#0af7f0"/><stop offset="0.840" stop-color="#0a82f7"/><stop offset="0.860" stop-color="#0a26f7"/><stop offset="0.880" stop-color="#0a24f7"/><stop offset="0.900" stop-color="#0a22f7"/><stop offset="0.920" stop-color="#0a21f7"/><stop offset="0.940" stop-color="#0a1ff7"/><stop offset="0.960" stop-color="#0a1df7"/><stop offset="0.980" stop-color="#0a1cf7"/><stop offset="1.000" stop-color="#0a1af7"/></linearGradient><linearGradient id="g11" gradientUnits="userSpaceOnUse" x1="0" y1="0" x2="1000" y2="0"><stop offset="0.000" stop-color="#0a0af7"/><stop offset="0.020" stop-color="#0a0af7"/><stop offset="0.040" stop-color="#0a0af7"/><stop offset="0.060" stop-color="#0a0af7"/><stop offset="0.080" stop-color="#0a4df7"/><stop offset="0.100" stop-color="#0a78f7"/><stop offset="0.120" stop-color="#0aa3f7"/><stop offset="0.140" stop-color="#0ae0f7"/><stop offset="0.160" stop-color="#0af778"/><stop offset="0.180" stop-color="#22f70a"/><stop offset="0.200" stop-color="#80f70a"/><stop offset="0.220" stop-color="#dff70a"/><stop offset="0.240" stop-color="#b3f70a"/><stop offset="0.260" stop-color="#f7f10a"/><stop offset="0.280" stop-color="#f7ce0a"/><stop offset="0.300" stop-color="#cff70a"/><stop offset="0.320" stop-color="#a5f70a"/><stop offset="0.340" stop-color="#f7f40a"/><stop offset="0.360" stop-color="#f7ca0a"/><stop offset="0.380" stop-color="#dff70a"/><stop offset="0.400" stop-color="#b3f70a"/><stop offset="0.420" stop-color="#f7e80a"/><stop offset="0.440" stop-color="#f7cf0a"/><stop offset="0.460" stop-color="#cff70a"/><stop offset="0.480" stop-color="#9ef70a"/><stop offset="0.500" stop-color="#eaf70a"/><stop offset="0.520" stop-color="#f7c90a"/><stop offset="0.540" stop-color="#dcf70a"/><stop offset="0.560" stop-color="#74f70a"/><stop offset="0.580" stop-color="#dcf70a"/><stop offset="0.600" stop-color="#f7ca0a"/><stop offset="0.620" stop-color="#b7f70a"/><stop offset="0.640" stop-color="#3df70a"/><stop offset="0.660" stop-color="#a2f70a"/><stop offset="0.680" stop-color="#f7ce0a"/><stop offset="0.700" stop-color="#ddf70a"/><stop offset="0.720" stop-color="#9af70a"/><stop offset="0.740" stop-color="#d8f70a"/><stop offset="0.760" stop-color="#9df70a"/><stop offset="0.780" stop-color="#38f70a"/><stop offset="0.800" stop-color="#0af746"/><stop offset="0.820" stop-color="#0af7c5"/><stop offset="0.840" stop-color="#0ab8f7"/><stop offset="0.860" stop-color="#0a43f7"/><stop offset="0.880" stop-color="#0a25f7"/><stop offset="0.900" stop-color="#0a23f7"/><stop offset="0.920" stop-color="#0a21f7"/><stop offset="0.940" stop-color="#0a20f7"/><stop offset="0.960" stop-color="#0a1ef7"/><stop offset="0.980" stop-color="#0a1cf7"/><stop offset="1.000" stop-color="#0a1af7"/></linearGradient><linearGradient id="g12" gradientUnits="userSpaceOnUse" x1="0" y1="0" x2="1000" y2="0"><stop offset="0.000" stop-color="#0a0af7"/><stop offset="0.020" stop-color="#0a0af7"/><stop offset="0.040" stop-color="#0a0af7"/><stop offset="0.060" stop-color="#0a0af7"/><stop offset="0.080" stop-color="#0a4cf7"/><stop offset="0.100" stop-color="#0a76f7"/><stop offset="0.120" stop-color="#0aa1f7"/><stop offset="0.140" stop-color="#0ad5f7"/><stop offset="0.160" stop-color="#0af786"/><stop offset="0.180" stop-color="#18f70a"/><stop offset="0.200" stop-color="#77f70a"/><stop offset="0.220" stop-color="#d6f70a"/><stop offset="0.240" stop-color="#b6f70a"/><stop offset="0.260" stop-color="#f7ee0a"/><stop offset="0.280" stop-color="#f7cb0a"/><stop offset="0.300" stop-color="#d3f70a"/><stop offset="0.320" stop-color="#a8f70a"/><stop offset="0.340" stop-color="#f7f10a"/><stop offset="0.360" stop-color="#f7c70a"/><stop offset="0.380" stop-color="#e2f70a"/><stop offset="0.400" stop-color="#b6f70a"/><stop offset="0.420" stop-color="#f7e50a"/><stop offset="0.440" stop-color="#f7cc0a"/><stop offset="0.460" stop-color="#d3f70a"/><stop offset="0.480" stop-color="#a1f70a"/><stop offset="0.500" stop-color="#edf70a"/><stop offset="0.520" stop-color="#f7c60a"/><stop offset="0.540" stop-color="#dff70a"/><stop offset="0.560" stop-color="#78f70a"/><stop offset="0.580" stop-color="#dff70a"/><stop offset="0.600" stop-color="#f7c70a"/><stop offset="0.620" stop-color="#baf70a"/><stop offset="0.640" stop-color="#40f70a"/><stop offset="0.660" stop-color="#a5f70a"/><stop offset="0.680" stop-color="#f7cb0a"/><stop offset="0.700" stop-color="#e0f70a"/><stop offset="0.720" stop-color="#9df70a"/><stop offset="0.740" stop-color="#e2f70a"/><stop offset="0.760" stop-color="#a8f70a"/><stop offset="0.780" stop-color="#3cf70a"/><stop offset="0.800" stop-color="#0af71f"/><stop offset="0.820" stop-color="#0af7a1"/><stop offset="0.840" stop-color="#0ae4f7"/><stop offset="0.860" stop-color="#0a79f7"/><stop offset="0.880" stop-color="#0a26f7"/><stop offset="0.900" stop-color="#0a24f7"/><stop offset="0.920" stop-color="#0a22f7"/><stop offset="0.940" stop-color="#0a20f7"/><stop offset="0.960" stop-color="#0a1ff7"/><stop offset="0.980" stop-color="#0a1df7"/><stop offset="1.000" stop-color="#0a1bf7"/></linearGradient><linearGradient id="g13" gradientUnits="userSpaceOnUse" x1="0" y1="0" x2="1000" y2="0"><stop offset="0.000" stop-color="#0a0af7"/><stop offset="0.020" stop-color="#0a0af7"/><stop offset="0.040" stop-color="#0a0af7"/><stop offset="0.060" stop-color="#0a0af7"/><stop offset="0.080" stop-color="#0a4cf7"/><stop offset="0.100" stop-color="#0a75f7"/><stop offset="0.120" stop-color="#0a9ff7"/><stop offset="0.140" stop-color="#0acbf7"/><stop offset="0.160" stop-color="#0af792"/><stop offset="0.180" stop-color="#0ef70a"/><stop offset="0.200" stop-color="#6df70a"/><stop offset="0.220" stop-color="#ccf70a"/><stop offset="0.240" stop-color="#baf70a"/><stop offset="0.260" stop-color="#f7ea0a"/><stop offset="0.280" stop-color="#f7c70a"/><stop offset="0.300" stop-color="#d6f70a"/><stop offset="0.320" stop-color="#acf70a"/><stop offset="0.340" stop-color="#f7ed0a"/><stop offset="0.360" stop-color="#f7c40a"/><stop offset="0.380" stop-color="#e6f70a"/><stop offset="0.400" stop-color="#baf70a"/><stop offset="0.420" stop-color="#f7e10a"/><stop offset="0.440" stop-color="#f7c90a"/><stop offset="0.460" stop-color="#d6f70a"/><stop offset="0.480" stop-color="#a5f70a"/><stop offset="0.500" stop-color="#f1f70a"/><stop offset="0.520" stop-color="#f7c20a"/><stop offset="0.540" stop-color="#e3f70a"/><stop offset="0.560" stop-color="#7cf70a"/><stop offset="0.580" stop-color="#e3f70a"/><stop offset="0.600" stop-color="#f7c30a"/><stop offset="0.620" stop-color="#bdf70a"/><stop offset="0.640" stop-color="#44f70a"/><stop offset="0.660" stop-color="#a9f70a"/><stop offset="0.680" stop-color="#f7c70a"/><stop offset="0.700" stop-color="#e4f70a"/><stop offset="0.720" stop-color="#a1f70a"/><stop offset="0.740" stop-color="#eaf70a"/><stop offset="0.760" stop-color="#b3f70a"/><stop offset="0.780" stop-color="#40f70a"/><stop offset="0.800" stop-color="#0af718"/><stop offset="0.820" stop-color="#0af77c"/><stop offset="0.840" stop-color="#0af7e2"/><stop offset="0.860" stop-color="#0aaaf7"/><stop offset="0.880" stop-color="#0a40f7"/><stop offset="0.900" stop-color="#0a25f7"/><stop offset="0.920" stop-color="#0a23f7"/><stop offset="0.940" stop-color="#0a21f7"/><stop offset="0.960" stop-color="#0a1ff7"/><stop offset="0.980" stop-color="#0a1df7"/><stop offset="1.000" stop-color="#0a1cf7"/></linearGradient><linearGradient id="g14" gradientUnits="userSpaceOnUse" x1="0" y1="0" x2="1000" y2="0"><stop offset="0.000" stop-color="#0a0af7"/><stop offset="0.020" stop-color="#0a0af7"/><stop offset="0.040" stop-color="#0a0af7"/><stop offset="0.060" stop-color="#0a0af7"/><stop offset="0.080" stop-color="#0a4cf7"/><stop offset="0.100" stop-color="#0a75f7"/><stop offset="0.120" stop-color="#0a9df7"/><stop offset="0.140" stop-color="#0ac6f7"/><stop offset="0.160" stop-color="#0af79d"/><stop offset="0.180" stop-color="#0af711"/><stop offset="0.200" stop-color="#63f70a"/><stop offset="0.220" stop-color="#c2f70a"/><stop offset="0.240" stop-color="#bef70a"/><stop offset="0.260" stop-color="#f7e60a"/><stop offset="0.280" stop-color="#f7c30a"/><stop offset="0.300" stop-color="#dbf70a"/><stop offset="0.320" stop-color="#b1f70a"/><stop offset="0.340" stop-color="#f7e90a"/><stop offset="0.360" stop-color="#f7c00a"/><stop offset="0.380" stop-color="#eaf70a"/><stop offset="0.400" stop-color="#bff70a"/><stop offset="0.420" stop-color="#f7dd0a"/><stop offset="0.440" stop-color="#f7c50a"/><stop offset="0.460" stop-color="#dbf70a"/><stop offset="0.480" stop-color="#aaf70a"/><stop offset="0.500" stop-color="#f5f70a"/><stop offset="0.520" stop-color="#f7bf0a"/><stop offset="0.540" stop-color="#e7f70a"/><stop offset="0.560" stop-color="#80f70a"/><stop offset="0.580" stop-color="#e7f70a"/><stop offset="0.600" stop-color="#f7c00a"/><stop offset="0.620" stop-color="#c2f70a"/><stop offset="0.640" stop-color="#49f70a"/><stop offset="0.660" stop-color="#adf70a"/><stop offset="0.680" stop-color="#f7c40a"/><stop offset="0.700" stop-color="#e8f70a"/><stop offset="0.720" stop-color="#a5f70a"/><stop offset="0.740" stop-color="#f2f70a"/><stop offset="0.760" stop-color="#bef70a"/><stop offset="0.780" stop-color="#44f70a"/><stop offset="0.800" stop-color="#0af714"/><stop offset="0.820" stop-color="#0af756"/><stop offset="0.840" stop-color="#0af7c1"/><stop offset="0.860" stop-color="#0ad3f7"/><stop offset="0.880" stop-color="#0a72f7"/><stop offset="0.900" stop-color="#0a25f7"/><stop offset="0.920" stop-color="#0a24f7"/><stop offset="0.940" stop-color="#0a22f7"/><stop offset="0.960" stop-color="#0a20f7"/><stop offset="0.980" stop-color="#0a1ef7"/><stop offset="1.000" stop-color="#0a1cf7"/></linearGradient><linearGradient id="g15" gradientUnits="userSpaceOnUse" x1="0" y1="0" x2="1000" y2="0"><stop offset="0.000" stop-color="#0a0af7"/><stop offset="0.020" stop-color="#0a0af7"/><stop offset="0.040" stop-color="#0a0af7"/><stop offset="0.060" stop-color="#0a0af7"/><stop offset="0.080" stop-color="#0a4cf7"/><stop offset="0.100" stop-color="#0a74f7"/><stop offset="0.120" stop-color="#0a9cf7"/><stop offset="0.140" stop-color="#0ac3f7"/><stop offset="0.160" stop-color="#0af7a9"/><stop offset="0.180" stop-color="#0af71f"/><stop offset="0.200" stop-color="#5af70a"/><stop offset="0.220" stop-color="#b9f70a"/><stop offset="0.240" stop-color="#c3f70a"/><stop offset="0.260" stop-color="#f7e20a"/><stop offset="0.280" stop-color="#f7bf0a"/><stop offset="0.300" stop-color="#dff70a"/><stop offset="0.320" stop-color="#b6f70a"/><stop offset="0.340" stop-color="#f7e50a"/><stop offset="0.360" stop-color="#f7bc0a"/><stop offset="0.380" stop-color="#eff70a"/><stop offset="0.400" stop-color="#c3f70a"/><stop offset="0.420" stop-color="#f7d90a"/><stop offset="0.440" stop-color="#f7c10a"/><stop offset="0.460" stop-color="#dff70a"/><stop offset="0.480" stop-color="#aff70a"/><stop offset="0.500" stop-color="#f7f40a"/><stop offset="0.520" stop-color="#f7bb0a"/><stop offset="0.540" stop-color="#ebf70a"/><stop offset="0.560" stop-color="#85f70a"/><stop offset="0.580" stop-color="#ebf70a"/><stop offset="0.600" stop-color="#f7bc0a"/><stop offset="0.620" stop-color="#c6f70a"/><stop offset="0.640" stop-color="#4ef70a"/><stop offset="0.660" stop-color="#b2f70a"/><stop offset="0.680" stop-color="#f7c00a"/><stop offset="0.700" stop-color="#ecf70a"/><stop offset="0.720" stop-color="#aaf70a"/><stop offset="0.740" stop-color="#f7f40a"/><stop offset="0.760" stop-color="#c7f70a"/><stop offset="0.780" stop-color="#49f70a"/><stop offset="0.800" stop-color="#0af70e"/><stop offset="0.820" stop-color="#0af732"/><stop offset="0.840" stop-color="#0af7a5"/><stop offset="0.860" stop-color="#0af5f7"/><stop offset="0.880" stop-color="#0a9ff7"/><stop offset="0.900" stop-color="#0a3ef7"/><stop offset="0.920" stop-color="#0a24f7"/><stop offset="0.940" stop-color="#0a23f7"/><stop offset="0.960" stop-color="#0a21f7"/><stop offset="0.980" stop-color="#0a1ff7"/><stop offset="1.000" stop-color="#0a1df7"/></linearGradient><linearGradient id="g16" gradientUnits="userSpaceOnUse" x1="0" y1="0" x2="1000" y2="0"><stop offset="0.000" stop-color="#0a0af7"/><stop offset="0.020" stop-color="#0a0af7"/><stop offset="0.040" stop-color="#0a0af7"/><stop offset="0.060" stop-color="#0a0af7"/><stop offset="0.080" stop-color="#0a4cf7"/><stop offset="0.100" stop-color="#0a73f7"/><stop offset="0.120" stop-color="#0a9af7"/><stop offset="0.140" stop-color="#0ac1f7"/><stop offset="0.160" stop-color="#0af7b3"/><stop offset="0.180" stop-color="#0af72c"/><stop offset="0.200" stop-color="#50f70a"/><stop offset="0.220" stop-color="#aff70a"/><stop offset="0.240" stop-color="#c8f70a"/><stop offset="0.260" stop-color="#f7de0a"/><stop offset="0.280" stop-color="#f7bb0a"/><stop offset="0.300" stop-color="#e4f70a"/><stop offset="0.320" stop-color="#bbf70a"/><stop offset="0.340" stop-color="#f7e00a"/><stop offset="0.360" stop-color="#f7b80a"/><stop offset="0.380" stop-color="#f4f70a"/><stop offset="0.400" stop-color="#c9f70a"/><stop offset="0.420" stop-color="#f7d40a"/><stop offset="0.440" stop-color="#f7bd0a"/><stop offset="0.460" stop-color="#e4f70a"/><stop offset="0.480" stop-color="#b4f70a"/><stop offset="0.500" stop-color="#f7ef0a"/><stop offset="0.520" stop-color="#f7b60a"/><stop offset="0.540" stop-color="#f0f70a"/><stop offset="0.560" stop-color="#8bf70a"/><stop offset="0.580" stop-color="#f0f70a"/><stop offset="0.600" stop-color="#f7b80a"/><stop offset="0.620" stop-color="#cbf70a"/><stop offset="0.640" stop-color="#54f70a"/><stop offset="0.660" stop-color="#b7f70a"/><stop offset="0.680" stop-color="#f7bb0a"/><stop offset="0.700" stop-color="#f1f70a"/><stop offset="0.720" stop-color="#aff70a"/><stop offset="0.740" stop-color="#f7ed0a"/><stop offset="0.760" stop-color="#cef70a"/><stop offset="0.780" stop-color="#4ff70a"/><stop offset="0.800" stop-color="#0af70a"/><stop offset="0.820" stop-color="#0af717"/><stop offset="0.840" stop-color="#0af786"/><stop offset="0.860" stop-color="#0af7dc"/><stop offset="0.880" stop-color="#0ac0f7"/><stop offset="0.900" stop-color="#0a62f7"/><stop offset="0.920" stop-color="#0a25f7"/><stop offset="0.940" stop-color="#0a23f7"/><stop offset="0.960" stop-color="#0a21f7"/><stop offset="0.980" stop-color="#0a1ff7"/><stop offset="1.000" stop-color="#0a1df7"/></linearGradient><linearGradient id="g17" gradientUnits="userSpaceOnUse" x1="0" y1="0" x2="1000" y2="0"><stop offset="0.000" stop-color="#0a0af7"/><stop offset="0.020" stop-color="#0a0af7"/><stop offset="0.040" stop-color="#0a0af7"/><stop offset="0.060" stop-color="#0a0af7"/><stop offset="0.080" stop-color="#0a4cf7"/><stop offset="0.100" stop-color="#0a72f7"/><stop offset="0.120" stop-color="#0a99f7"/><stop offset="0.140" stop-color="#0abff7"/><stop offset="0.160" stop-color="#0af7bd"/><stop offset="0.180" stop-color="#0af739"/><stop offset="0.200" stop-color="#47f70a"/><stop offset="0.220" stop-color="#a5f70a"/><stop offset="0.240" stop-color="#cef70a"/><stop offset="0.260" stop-color="#f7d90a"/><stop offset="0.280" stop-color="#f7b70a"/><stop offset="0.300" stop-color="#eaf70a"/><stop offset="0.320" stop-color="#c1f70a"/><stop offset="0.340" stop-color="#f7db0a"/><stop offset="0.360" stop-color="#f7b40a"/><stop offset="0.380" stop-color="#f7f40a"/><stop offset="0.400" stop-color="#cff70a"/><stop offset="0.420" stop-color="#f7d00a"/><stop offset="0.440" stop-color="#f7b80a"/><stop offset="0.460" stop-color="#eaf70a"/><stop offset="0.480" stop-color="#baf70a"/><stop offset="0.500" stop-color="#f7ea0a"/><stop offset="0.520" stop-color="#f7b20a"/><stop offset="0.540" stop-color="#f5f70a"/><stop offset="0.560" stop-color="#91f70a"/><stop offset="0.580" stop-color="#f5f70a"/><stop offset="0.600" stop-color="#f7b30a"/><stop offset="0.620" stop-color="#d0f70a"/><stop offset="0.640" stop-color="#59f70a"/><stop offset="0.660" stop-color="#bcf70a"/><stop offset="0.680" stop-color="#f7b70a"/><stop offset="0.700" stop-color="#f6f70a"/><stop offset="0.720" stop-color="#b4f70a"/><stop offset="0.740" stop-color="#f7e70a"/><stop offset="0.760" stop-color="#d4f70a"/><stop offset="0.780" stop-color="#54f70a"/><stop offset="0.800" stop-color="#10f70a"/><stop offset="0.820" stop-color="#0af70d"/><stop offset="0.840" stop-color="#0af777"/><stop offset="0.860" stop-color="#0af7cc"/><stop offset="0.880" stop-color="#0ad5f7"/><stop offset="0.900" stop-color="#0a7df7"/><stop offset="0.920" stop-color="#0a26f7"/><stop offset="0.940" stop-color="#0a24f7"/><stop offset="0.960" stop-color="#0a22f7"/><stop offset="0.980" stop-color="#0a20f7"/><stop offset="1.000" stop-color="#0a1ef7"/></linearGradient><linearGradient id="g18" gradientUnits="userSpaceOnUse" x1="0" y1="0" x2="1000" y2="0"><stop offset="0.000" stop-color="#0a0af7"/><stop offset="0.020" stop-color="#0a0af7"/><stop offset="0.040" stop-color="#0a0af7"/><stop offset="0.060" stop-color="#0a0af7"/><stop offset="0.080" stop-color="#0a4cf7"/><stop offset="0.100" stop-color="#0a71f7"/><stop offset="0.120" stop-color="#0a97f7"/><stop offset="0.140" stop-color="#0abdf7"/><stop offset="0.160" stop-color="#0af7c7"/><stop offset="0.180" stop-color="#0af745"/><stop offset="0.200" stop-color="#3df70a"/><stop offset="0.220" stop-color="#9cf70a"/><stop offset="0.240" stop-color="#d3f70a"/><stop offset="0.260" stop-color="#f7d40a"/><stop offset="0.280" stop-color="#f7b20a"/><stop offset="0.300" stop-color="#eff70a"/><stop offset="0.320" stop-color="#c7f70a"/><stop offset="0.340" stop-color="#f7d60a"/><stop offset="0.360" stop-color="#f7af0a"/><stop offset="0.380" stop-color="#f7ef0a"/><stop offset="0.400" stop-color="#d4f70a"/><stop offset="0.420" stop-color="#f7cb0a"/><stop offset="0.440" stop-color="#f7b40a"/><stop offset="0.460" stop-color="#eff70a"/><stop offset="0.480" stop-color="#c0f70a"/><stop offset="0.500" stop-color="#f7e50a"/><stop offset="0.520" stop-color="#f7ae0a"/><stop offset="0.540" stop-color="#f7f30a"/><stop offset="0.560" stop-color="#97f70a"/><stop offset="0.580" stop-color="#f7f30a"/><stop offset="0.600" stop-color="#f7af0a"/><stop offset="0.620" stop-color="#d5f70a"/><stop offset="0.640" stop-color="#60f70a"/><stop offset="0.660" stop-color="#c2f70a"/><stop offset="0.680" stop-color="#f7b30a"/><stop offset="0.700" stop-color="#f7f20a"/><stop offset="0.720" stop-color="#baf70a"/><stop offset="0.740" stop-color="#f7e00a"/><stop offset="0.760" stop-color="#daf70a"/><stop offset="0.780" stop-color="#5af70a"/><stop offset="0.800" stop-color="#17f70a"/><stop offset="0.820" stop-color="#0cf70a"/><stop offset="0.840" stop-color="#0af76f"/><stop offset="0.860" stop-color="#0af7c2"/><stop offset="0.880" stop-color="#0ae5f7"/><stop offset="0.900" stop-color="#0a98f7"/><stop offset="0.920" stop-color="#0a37f7"/><stop offset="0.940" stop-color="#0a24f7"/><stop offset="0.960" stop-color="#0a22f7"/><stop offset="0.980" stop-color="#0a20f7"/><stop offset="1.000" stop-color="#0a1ef7"/></linearGradient><linearGradient id="g19" gradientUnits="userSpaceOnUse" x1="0" y1="0" x2="1000" y2="0"><stop offset="0.000" stop-color="#0a0af7"/><stop offset="0.020" stop-color="#0a0af7"/><stop offset="0.040" stop-color="#0a0af7"/><stop offset="0.060" stop-color="#0a0af7"/><stop offset="0.080" stop-color="#0a4cf7"/><stop offset="0.100" stop-color="#0a71f7"/><stop offset="0.120" stop-color="#0a96f7"/><stop offset="0.140" stop-color="#0abbf7"/><stop offset="0.160" stop-color="#0af7d1"/><stop offset="0.180" stop-color="#0af751"/><stop offset="0.200" stop-color="#33f70a"/><stop offset="0.220" stop-color="#92f70a"/><stop offset="0.240" stop-color="#d9f70a"/><stop offset="0.260" stop-color="#f7cf0a"/><stop offset="0.280" stop-color="#f7ae0a"/><stop offset="0.300" stop-color="#f5f70a"/><stop offset="0.320" stop-color="#cdf70a"/><stop offset="0.340" stop-color="#f7d10a"/><stop offset="0.360" stop-color="#f7ab0a"/><stop offset="0.380" stop-color="#f7e90a"/><stop offset="0.400" stop-color="#dbf70a"/><stop offset="0.420" stop-color="#f7c60a"/><stop offset="0.440" stop-color="#f7af0a"/><stop offset="0.460" stop-color="#f5f70a"/><stop offset="0.480" stop-color="#c7f70a"/><stop offset="0.500" stop-color="#f7e00a"/><stop offset="0.520" stop-color="#f7a90a"/><stop offset="0.540" stop-color="#f7ed0a"/><stop offset="0.560" stop-color="#9df70a"/><stop offset="0.580" stop-color="#f7ee0a"/><stop offset="0.600" stop-color="#f7aa0a"/><stop offset="0.620" stop-color="#dbf70a"/><stop offset="0.640" stop-color="#66f70a"/><stop offset="0.660" stop-color="#c7f70a"/><stop offset="0.680" stop-color="#f7ae0a"/><stop offset="0.700" stop-color="#f7ed0a"/><stop offset="0.720" stop-color="#bff70a"/><stop offset="0.740" stop-color="#f7d90a"/><stop offset="0.760" stop-color="#e1f70a"/><stop offset="0.780" stop-color="#61f70a"/><stop offset="0.800" stop-color="#1ef70a"/><stop offset="0.820" stop-color="#12f70a"/><stop offset="0.840" stop-color="#0af768"/><stop offset="0.860" stop-color="#0af7ba"/><stop offset="0.880" stop-color="#0af4f7"/><stop offset="0.900" stop-color="#0ab4f7"/><stop offset="0.920" stop-color="#0a52f7"/><stop offset="0.940" stop-color="#0a25f7"/><stop offset="0.960" stop-color="#0a23f7"/><stop offset="0.980" stop-color="#0a21f7"/><stop offset="1.000" stop-color="#0a1ef7"/></linearGradient><linearGradient id="g20" gradientUnits="userSpaceOnUse" x1="0" y1="0" x2="1000" y2="0"><stop offset="0.000" stop-color="#0a0af7"/><stop offset="0.020" stop-color="#0a0af7"/><stop offset="0.040" stop-color="#0a0af7"/><stop offset="0.060" stop-color="#0a0af7"/><stop offset="0.080" stop-color="#0a4cf7"/><stop offset="0.100" stop-color="#0a70f7"/><stop offset="0.120" stop-color="#0a94f7"/><stop offset="0.140" stop-color="#0ab9f7"/><stop offset="0.160" stop-color="#0af7da"/><stop offset="0.180" stop-color="#0af75c"/><stop offset="0.200" stop-color="#2af70a"/><stop offset="0.220" stop-color="#89f70a"/><stop offset="0.240" stop-color="#dff70a"/><stop offset="0.260" stop-color="#f7ca0a"/><stop offset="0.280" stop-color="#f7a90a"/><stop offset="0.300" stop-color="#f7f30a"/><stop offset="0.320" stop-color="#d4f70a"/><stop offset="0.340" stop-color="#f7cc0a"/><stop offset="0.360" stop-color="#f7a60a"/><stop offset="0.380" stop-color="#f7e40a"/><stop offset="0.400" stop-color="#e1f70a"/><stop offset="0.420" stop-color="#f7c10a"/><stop offset="0.440" stop-color="#f7ab0a"/><stop offset="0.460" stop-color="#f7f20a"/><stop offset="0.480" stop-color="#cdf70a"/><stop offset="0.500" stop-color="#f7da0a"/><stop offset="0.520" stop-color="#f7a50a"/><stop offset="0.540" stop-color="#f7e80a"/><stop offset="0.560" stop-color="#a4f70a"/><stop offset="0.580" stop-color="#f7e90a"/><stop offset="0.600" stop-color="#f7a60a"/><stop offset="0.620" stop-color="#e0f70a"/><stop offset="0.640" stop-color="#6df70a"/><stop offset="0.660" stop-color="#cdf70a"/><stop offset="0.680" stop-color="#f7aa0a"/><stop offset="0.700" stop-color="#f7e80a"/><stop offset="0.720" stop-color="#c5f70a"/><stop offset="0.740" stop-color="#f7d30a"/><stop offset="0.760" stop-color="#e8f70a"/><stop offset="0.780" stop-color="#67f70a"/><stop offset="0.800" stop-color="#25f70a"/><stop offset="0.820" stop-color="#18f70a"/><stop offset="0.840" stop-color="#0af760"/><stop offset="0.860" stop-color="#0af7b2"/><stop offset="0.880" stop-color="#0af7ed"/><stop offset="0.900" stop-color="#0ac5f7"/><stop offset="0.920" stop-color="#0a6df7"/><stop offset="0.940" stop-color="#0a25f7"/><stop offset="0.960" stop-color="#0a23f7"/><stop offset="0.980" stop-color="#0a21f7"/><stop offset="1.000" stop-color="#0a1ff7"/></linearGradient><linearGradient id="g21" gradientUnits="userSpaceOnUse" x1="0" y1="0" x2="1000" y2="0"><stop offset="0.000" stop-color="#0a0af7"/><stop offset="0.020" stop-color="#0a0af7"/><stop offset="0.040" stop-color="#0a0af7"/><stop offset="0.060" stop-color="#0a0af7"/><stop offset="0.080" stop-color="#0a4cf7"/><stop offset="0.100" stop-color="#0a70f7"/><stop offset="0.120" stop-color="#0a93f7"/><stop offset="0.140" stop-color="#0ab7f7"/><stop offset="0.160" stop-color="#0af7e3"/><stop offset="0.180" stop-color="#0af767"/><stop offset="0.200" stop-color="#20f70a"/><stop offset="0.220" stop-color="#7ff70a"/><stop offset="0.240" stop-color="#def70a"/><stop offset="0.260" stop-color="#f7c80a"/><stop offset="0.280" stop-color="#f7a50a"/><stop offset="0.300" stop-color="#f7ed0a"/><stop offset="0.320" stop-color="#daf70a"/><stop offset="0.340" stop-color="#f7c70a"/><stop offset="0.360" stop-color="#f7a20a"/><stop offset="0.380" stop-color="#f7de0a"/><stop offset="0.400" stop-color="#e7f70a"/><stop offset="0.420" stop-color="#f7bc0a"/><stop offset="0.440" stop-color="#f7a60a"/><stop offset="0.460" stop-color="#f7ed0a"/><stop offset="0.480" stop-color="#d4f70a"/><stop offset="0.500" stop-color="#f7d50a"/><stop offset="0.520" stop-color="#f7a10a"/><stop offset="0.540" stop-color="#f7e30a"/><stop offset="0.560" stop-color="#aaf70a"/><stop offset="0.580" stop-color="#f7e40a"/><stop offset="0.600" stop-color="#f7a20a"/><stop offset="0.620" stop-color="#e6f70a"/><stop offset="0.640" stop-color="#73f70a"/><stop offset="0.660" stop-color="#d2f70a"/><stop offset="0.680" stop-color="#f7a50a"/><stop offset="0.700" stop-color="#f7e30a"/><stop offset="0.720" stop-color="#caf70a"/><stop offset="0.740" stop-color="#f7cc0a"/><stop offset="0.760" stop-color="#f0f70a"/><stop offset="0.780" stop-color="#6df70a"/><stop offset="0.800" stop-color="#2cf70a"/><stop offset="0.820" stop-color="#1df70a"/><stop offset="0.840" stop-color="#0af759"/><stop offset="0.860" stop-color="#0af7ac"/><stop offset="0.880" stop-color="#0af7e3"/><stop offset="0.900" stop-color="#0ad3f7"/><stop offset="0.920" stop-color="#0a88f7"/><stop offset="0.940" stop-color="#0a26f7"/><stop offset="0.960" stop-color="#0a24f7"/><stop offset="0.980" stop-color="#0a22f7"/><stop offset="1.000" stop-color="#0a1ff7"/></linearGradient><linearGradient id="g22" gradientUnits="userSpaceOnUse" x1="0" y1="0" x2="1000" y2="0"><stop offset="0.000" stop-color="#0a0af7"/><stop offset="0.020" stop-color="#0a0af7"/><stop offset="0.040" stop-color="#0a0af7"/><stop offset="0.060" stop-color="#0a0af7"/><stop offset="0.080" stop-color="#0a0af7"/><stop offset="0.100" stop-color="#0a6ff7"/><stop offset="0.120" stop-color="#0a92f7"/><stop offset="0.140" stop-color="#0ab5f7"/><stop offset="0.160" stop-color="#0af7ec"/><stop offset="0.180" stop-color="#0af772"/><stop offset="0.200" stop-color="#17f70a"/><stop offset="0.220" stop-color="#75f70a"/><stop offset="0.240" stop-color="#d4f70a"/><stop offset="0.260" stop-color="#f7ce0a"/><stop offset="0.280" stop-color="#f7a10a"/><stop offset="0.300" stop-color="#f7e70a"/><stop offset="0.320" stop-color="#e1f70a"/><stop offset="0.340" stop-color="#f7c20a"/><stop offset="0.360" stop-color="#f79e0a"/><stop offset="0.380" stop-color="#f7d90a"/><stop offset="0.400" stop-color="#edf70a"/><stop offset="0.420" stop-color="#f7b70a"/><stop offset="0.440" stop-color="#f7a20a"/><stop offset="0.460" stop-color="#f7e70a"/><stop offset="0.480" stop-color="#daf70a"/><stop offset="0.500" stop-color="#f7d00a"/><stop offset="0.520" stop-color="#f79c0a"/><stop offset="0.540" stop-color="#f7dd0a"/><stop offset="0.560" stop-color="#b1f70a"/><stop offset="0.580" stop-color="#f7df0a"/><stop offset="0.600" stop-color="#f79d0a"/><stop offset="0.620" stop-color="#ebf70a"/><stop offset="0.640" stop-color="#7af70a"/><stop offset="0.660" stop-color="#d8f70a"/><stop offset="0.680" stop-color="#f7a10a"/><stop offset="0.700" stop-color="#f7de0a"/><stop offset="0.720" stop-color="#d0f70a"/><stop offset="0.740" stop-color="#f7c50a"/><stop offset="0.760" stop-color="#f7f50a"/><stop offset="0.780" stop-color="#74f70a"/><stop offset="0.800" stop-color="#33f70a"/><stop offset="0.820" stop-color="#23f70a"/><stop offset="0.840" stop-color="#0af752"/><stop offset="0.860" stop-color="#0af7a7"/><stop offset="0.880" stop-color="#0af7da"/><stop offset="0.900" stop-color="#0ae0f7"/><stop offset="0.920" stop-color="#0aa5f7"/><stop offset="0.940" stop-color="#0a40f7"/><stop offset="0.960" stop-color="#0a24f7"/><stop offset="0.980" stop-color="#0a22f7"/><stop offset="1.000" stop-color="#0a20f7"/></linearGradient><linearGradient id="g23" gradientUnits="userSpaceOnUse" x1="0" y1="0" x2="1000" y2="0"><stop offset="0.000" stop-color="#0a0af7"/><stop offset="0.020" stop-color="#0a0af7"/><stop offset="0.040" stop-color="#0a0af7"/><stop offset="0.060" stop-color="#0a0af7"/><stop offset="0.080" stop-color="#0a0af7"/><stop offset="0.100" stop-color="#0a6bf7"/><stop offset="0.120" stop-color="#0a8ef7"/><stop offset="0.140" stop-color="#0ab1f7"/><stop offset="0.160" stop-color="#0af5f7"/><stop offset="0.180" stop-color="#0af77f"/><stop offset="0.200" stop-color="#0df70a"/><stop offset="0.220" stop-color="#6cf70a"/><stop offset="0.240" stop-color="#cbf70a"/><stop offset="0.260" stop-color="#f7d50a"/><stop offset="0.280" stop-color="#f79c0a"/><stop offset="0.300" stop-color="#f7e20a"/><stop offset="0.320" stop-color="#e7f70a"/><stop offset="0.340" stop-color="#f7bd0a"/><stop offset="0.360" stop-color="#f79a0a"/><stop offset="0.380" stop-color="#f7d30a"/><stop offset="0.400" stop-color="#f4f70a"/><stop offset="0.420" stop-color="#f7b30a"/><stop offset="0.440" stop-color="#f79e0a"/><stop offset="0.460" stop-color="#f7e10a"/><stop offset="0.480" stop-color="#e1f70a"/><stop offset="0.500" stop-color="#f7cb0a"/><stop offset="0.520" stop-color="#f7980a"/><stop offset="0.540" stop-color="#f7d80a"/><stop offset="0.560" stop-color="#b7f70a"/><stop offset="0.580" stop-color="#f7da0a"/><stop offset="0.600" stop-color="#f7990a"/><stop offset="0.620" stop-color="#f0f70a"/><stop offset="0.640" stop-color="#81f70a"/><stop offset="0.660" stop-color="#ddf70a"/><stop offset="0.680" stop-color="#f79d0a"/><stop offset="0.700" stop-color="#f7da0a"/><stop offset="0.720" stop-color="#d5f70a"/><stop offset="0.740" stop-color="#f7bf0a"/><stop offset="0.760" stop-color="#f7ee0a"/><stop offset="0.780" stop-color="#7af70a"/><stop offset="0.800" stop-color="#3af70a"/><stop offset="0.820" stop-color="#28f70a"/><stop offset="0.840" stop-color="#0af74b"/><stop offset="0.860" stop-color="#0af7a2"/><stop offset="0.880" stop-color="#0af7d2"/><stop offset="0.900" stop-color="#0aebf7"/><stop offset="0.920" stop-color="#0abaf7"/><stop offset="0.940" stop-color="#0a5cf7"/><stop offset="0.960" stop-color="#0a25f7"/><stop offset="0.980" stop-color="#0a23f7"/><stop offset="1.000" stop-color="#0a20f7"/></linearGradient><linearGradient id="g24" gradientUnits="userSpaceOnUse" x1="0" y1="0" x2="1000" y2="0"><stop offset="0.000" stop-color="#0a0af7"/><stop offset="0.020" stop-color="#0a0af7"/><stop offset="0.040" stop-color="#0a0af7"/><stop offset="0.060" stop-color="#0a0af7"/><stop offset="0.080" stop-color="#0a0af7"/><stop offset="0.100" stop-color="#0a67f7"/><stop offset="0.120" stop-color="#0a8af7"/><stop offset="0.140" stop-color="#0aaef7"/><stop offset="0.160" stop-color="#0ae8f7"/><stop offset="0.180" stop-color="#0af78b"/><stop offset="0.200" stop-color="#0af711"/><stop offset="0.220" stop-color="#62f70a"/><stop offset="0.240" stop-color="#c1f70a"/><stop offset="0.260" stop-color="#f7db0a"/><stop offset="0.280" stop-color="#f79c0a"/><stop offset="0.300" stop-color="#f7dc0a"/><stop offset="0.320" stop-color="#edf70a"/><stop offset="0.340" stop-color="#f7b80a"/><stop offset="0.360" stop-color="#f7960a"/><stop offset="0.380" stop-color="#f7ce0a"/><stop offset="0.400" stop-color="#f7f30a"/><stop offset="0.420" stop-color="#f7ae0a"/><stop offset="0.440" stop-color="#f79a0a"/><stop offset="0.460" stop-color="#f7dc0a"/><stop offset="0.480" stop-color="#e7f70a"/><stop offset="0.500" stop-color="#f7c60a"/><stop offset="0.520" stop-color="#f7940a"/><stop offset="0.540" stop-color="#f7d30a"/><stop offset="0.560" stop-color="#bdf70a"/><stop offset="0.580" stop-color="#f7d50a"/><stop offset="0.600" stop-color="#f7950a"/><stop offset="0.620" stop-color="#f6f70a"/><stop offset="0.640" stop-color="#87f70a"/><stop offset="0.660" stop-color="#e3f70a"/><stop offset="0.680" stop-color="#f7990a"/><stop offset="0.700" stop-color="#f7d50a"/><stop offset="0.720" stop-color="#dbf70a"/><stop offset="0.740" stop-color="#f7bb0a"/><stop offset="0.760" stop-color="#f7eb0a"/><stop offset="0.780" stop-color="#80f70a"/><stop offset="0.800" stop-color="#40f70a"/><stop offset="0.820" stop-color="#2df70a"/><stop offset="0.840" stop-color="#0af745"/><stop offset="0.860" stop-color="#0af79d"/><stop offset="0.880" stop-color="#0af7cb"/><stop offset="0.900" stop-color="#0af5f7"/><stop offset="0.920" stop-color="#0ac7f7"/><stop offset="0.940" stop-color="#0a78f7"/><stop offset="0.960" stop-color="#0a25f7"/><stop offset="0.980" stop-color="#0a23f7"/><stop offset="1.000" stop-color="#0a21f7"/></linearGradient><linearGradient id="g25" gradientUnits="userSpaceOnUse" x1="0" y1="0" x2="1000" y2="0"><stop offset="0.000" stop-color="#0a0af7"/><stop offset="0.020" stop-color="#0a0af7"/><stop offset="0.040" stop-color="#0a0af7"/><stop offset="0.060" stop-color="#0a0af7"/><stop offset="0.080" stop-color="#0a0af7"/><stop offset="0.100" stop-color="#0a64f7"/><stop offset="0.120" stop-color="#0a87f7"/><stop offset="0.140" stop-color="#0aaaf7"/><stop offset="0.160" stop-color="#0adcf7"/><stop offset="0.180" stop-color="#0af797"/><stop offset="0.200" stop-color="#0af71e"/><stop offset="0.220" stop-color="#59f70a"/><stop offset="0.240" stop-color="#b7f70a"/><stop offset="0.260" stop-color="#f7e10a"/><stop offset="0.280" stop-color="#f7a20a"/><stop offset="0.300" stop-color="#f7d70a"/><stop offset="0.320" stop-color="#f3f70a"/><stop offset="0.340" stop-color="#f7b40a"/><stop offset="0.360" stop-color="#f7920a"/><stop offset="0.380" stop-color="#f7c90a"/><stop offset="0.400" stop-color="#f7ed0a"/><stop offset="0.420" stop-color="#f7aa0a"/><stop offset="0.440" stop-color="#f7960a"/><stop offset="0.460" stop-color="#f7d60a"/><stop offset="0.480" stop-color="#eef70a"/><stop offset="0.500" stop-color="#f7c10a"/><stop offset="0.520" stop-color="#f7910a"/><stop offset="0.540" stop-color="#f7cf0a"/><stop offset="0.560" stop-color="#c3f70a"/><stop offset="0.580" stop-color="#f7d00a"/><stop offset="0.600" stop-color="#f7920a"/><stop offset="0.620" stop-color="#f7f20a"/><stop offset="0.640" stop-color="#8ef70a"/><stop offset="0.660" stop-color="#e8f70a"/><stop offset="0.680" stop-color="#f7950a"/><stop offset="0.700" stop-color="#f7d10a"/><stop offset="0.720" stop-color="#e0f70a"/><stop offset="0.740" stop-color="#f7bb0a"/><stop offset="0.760" stop-color="#f7eb0a"/><stop offset="0.780" stop-color="#86f70a"/><stop offset="0.800" stop-color="#47f70a"/><stop offset="0.820" stop-color="#32f70a"/><stop offset="0.840" stop-color="#0af73e"/><stop offset="0.860" stop-color="#0af79a"/><stop offset="0.880" stop-color="#0af7c7"/><stop offset="0.900" stop-color="#0af7f4"/><stop offset="0.920" stop-color="#0accf7"/><stop offset="0.940" stop-color="#0a89f7"/><stop offset="0.960" stop-color="#0a2cf7"/><stop offset="0.980" stop-color="#0a24f7"/><stop offset="1.000" stop-color="#0a21f7"/></linearGradient><linearGradient id="g26" gradientUnits="userSpaceOnUse" x1="0" y1="0" x2="1000" y2="0"><stop offset="0.000" stop-color="#0a0af7"/><stop offset="0.020" stop-color="#0a0af7"/><stop offset="0.040" stop-color="#0a0af7"/><stop offset="0.060" stop-color="#0a0af7"/><stop offset="0.080" stop-color="#0a0af7"/><stop offset="0.100" stop-color="#0a60f7"/><stop offset="0.120" stop-color="#0a83f7"/><stop offset="0.140" stop-color="#0aa6f7"/><stop offset="0.160" stop-color="#0ad0f7"/><stop offset="0.180" stop-color="#0af7a4"/><stop offset="0.200" stop-color="#0af72a"/><stop offset="0.220" stop-color="#4ff70a"/><stop offset="0.240" stop-color="#aef70a"/><stop offset="0.260" stop-color="#f7e80a"/><stop offset="0.280" stop-color="#f7a80a"/><stop offset="0.300" stop-color="#f7d20a"/><stop offset="0.320" stop-color="#f7f40a"/><stop offset="0.340" stop-color="#f7b00a"/><stop offset="0.360" stop-color="#f78f0a"/><stop offset="0.380" stop-color="#f7c40a"/><stop offset="0.400" stop-color="#f7e80a"/><stop offset="0.420" stop-color="#f7a60a"/><stop offset="0.440" stop-color="#f7930a"/><stop offset="0.460" stop-color="#f7d10a"/><stop offset="0.480" stop-color="#f4f70a"/><stop offset="0.500" stop-color="#f7bd0a"/><stop offset="0.520" stop-color="#f78e0a"/><stop offset="0.540" stop-color="#f7ca0a"/><stop offset="0.560" stop-color="#c9f70a"/><stop offset="0.580" stop-color="#f7cc0a"/><stop offset="0.600" stop-color="#f78f0a"/><stop offset="0.620" stop-color="#f7ee0a"/><stop offset="0.640" stop-color="#94f70a"/><stop offset="0.660" stop-color="#edf70a"/><stop offset="0.680" stop-color="#f7920a"/><stop offset="0.700" stop-color="#f7cd0a"/><stop offset="0.720" stop-color="#e5f70a"/><stop offset="0.740" stop-color="#f7bb0a"/><stop offset="0.760" stop-color="#f7eb0a"/><stop offset="0.780" stop-color="#8cf70a"/><stop offset="0.800" stop-color="#4df70a"/><stop offset="0.820" stop-color="#37f70a"/><stop offset="0.840" stop-color="#0af738"/><stop offset="0.860" stop-color="#0af795"/><stop offset="0.880" stop-color="#0af7c4"/><stop offset="0.900" stop-color="#0af7f1"/><stop offset="0.920" stop-color="#0acff7"/><stop offset="0.940" stop-color="#0a92f7"/><stop offset="0.960" stop-color="#0a41f7"/><stop offset="0.980" stop-color="#0a24f7"/><stop offset="1.000" stop-color="#0a22f7"/></linearGradient><linearGradient id="g27" gradientUnits="userSpaceOnUse" x1="0" y1="0" x2="1000" y2="0"><stop offset="0.000" stop-color="#0a0af7"/><stop offset="0.020" stop-color="#0a0af7"/><stop offset="0.040" stop-color="#0a0af7"/><stop offset="0.060" stop-color="#0a0af7"/><stop offset="0.080" stop-color="#0a0af7"/><stop offset="0.100" stop-color="#0a5cf7"/><stop offset="0.120" stop-color="#0a80f7"/><stop offset="0.140" stop-color="#0aa3f7"/><stop offset="0.160" stop-color="#0ac6f7"/><stop offset="0.180" stop-color="#0af7b0"/><stop offset="0.200" stop-color="#0af736"/><stop offset="0.220" stop-color="#46f70a"/><stop offset="0.240" stop-color="#a4f70a"/><stop offset="0.260" stop-color="#f7ee0a"/><stop offset="0.280" stop-color="#f7af0a"/><stop offset="0.300" stop-color="#f7ce0a"/><stop offset="0.320" stop-color="#f7ee0a"/><stop offset="0.340" stop-color="#f7ac0a"/><stop offset="0.360" stop-color="#f78c0a"/><stop offset="0.380" stop-color="#f7c00a"/><stop offset="0.400" stop-color="#f7e20a"/><stop offset="0.420" stop-color="#f7a30a"/><stop offset="0.440" stop-color="#f7900a"/><stop offset="0.460" stop-color="#f7cd0a"/><stop offset="0.480" stop-color="#f7f40a"/><stop offset="0.500" stop-color="#f7b90a"/><stop offset="0.520" stop-color="#f78b0a"/><stop offset="0.540" stop-color="#f7c60a"/><stop offset="0.560" stop-color="#cff70a"/><stop offset="0.580" stop-color="#f7c80a"/><stop offset="0.600" stop-color="#f78c0a"/><stop offset="0.620" stop-color="#f7ea0a"/><stop offset="0.640" stop-color="#99f70a"/><stop offset="0.660" stop-color="#f1f70a"/><stop offset="0.680" stop-color="#f78f0a"/><stop offset="0.700" stop-color="#f7c90a"/><stop offset="0.720" stop-color="#e9f70a"/><stop offset="0.740" stop-color="#f7bb0a"/><stop offset="0.760" stop-color="#f7eb0a"/><stop offset="0.780" stop-color="#91f70a"/><stop offset="0.800" stop-color="#54f70a"/><stop offset="0.820" stop-color="#3bf70a"/><stop offset="0.840" stop-color="#0af733"/><stop offset="0.860" stop-color="#0af78d"/><stop offset="0.880" stop-color="#0af7c0"/><stop offset="0.900" stop-color="#0af7ee"/><stop offset="0.920" stop-color="#0ad1f7"/><stop offset="0.940" stop-color="#0a9af7"/><stop offset="0.960" stop-color="#0a52f7"/><stop offset="0.980" stop-color="#0a25f7"/><stop offset="1.000" stop-color="#0a22f7"/></linearGradient><linearGradient id="g28" gradientUnits="userSpaceOnUse" x1="0" y1="0" x2="1000" y2="0"><stop offset="0.000" stop-color="#0a0af7"/><stop offset="0.020" stop-color="#0a0af7"/><stop offset="0.040" stop-color="#0a0af7"/><stop offset="0.060" stop-color="#0a0af7"/><stop offset="0.080" stop-color="#0a0af7"/><stop offset="0.100" stop-color="#0a59f7"/><stop offset="0.120" stop-color="#0a7cf7"/><stop offset="0.140" stop-color="#0a9ff7"/><stop offset="0.160" stop-color="#0ac2f7"/><stop offset="0.180" stop-color="#0af7bc"/><stop offset="0.200" stop-color="#0af742"/><stop offset="0.220" stop-color="#3cf70a"/><stop offset="0.240" stop-color="#9bf70a"/><stop offset="0.260" stop-color="#f7f40a"/><stop offset="0.280" stop-color="#f7b50a"/><stop offset="0.300" stop-color="#f7ca0a"/><stop offset="0.320" stop-color="#f7e90a"/><stop offset="0.340" stop-color="#f7a90a"/><stop offset="0.360" stop-color="#f78a0a"/><stop offset="0.380" stop-color="#f7bc0a"/><stop offset="0.400" stop-color="#f7de0a"/><stop offset="0.420" stop-color="#f7a00a"/><stop offset="0.440" stop-color="#f78d0a"/><stop offset="0.460" stop-color="#f7c90a"/><stop offset="0.480" stop-color="#f7ee0a"/><stop offset="0.500" stop-color="#f7b50a"/><stop offset="0.520" stop-color="#f7890a"/><stop offset="0.540" stop-color="#f7c30a"/><stop offset="0.560" stop-color="#d4f70a"/><stop offset="0.580" stop-color="#f7c50a"/><stop offset="0.600" stop-color="#f78a0a"/><stop offset="0.620" stop-color="#f7e60a"/><stop offset="0.640" stop-color="#9ff70a"/><stop offset="0.660" stop-color="#f5f70a"/><stop offset="0.680" stop-color="#f78d0a"/><stop offset="0.700" stop-color="#f7c60a"/><stop offset="0.720" stop-color="#edf70a"/><stop offset="0.740" stop-color="#f7bb0a"/><stop offset="0.760" stop-color="#f7eb0a"/><stop offset="0.780" stop-color="#96f70a"/><stop offset="0.800" stop-color="#59f70a"/><stop offset="0.820" stop-color="#3cf70a"/><stop offset="0.840" stop-color="#0af72f"/><stop offset="0.860" stop-color="#0af786"/><stop offset="0.880" stop-color="#0af7bd"/><stop offset="0.900" stop-color="#0af7eb"/><stop offset="0.920" stop-color="#0ad4f7"/><stop offset="0.940" stop-color="#0aa0f7"/><stop offset="0.960" stop-color="#0a5ef7"/><stop offset="0.980" stop-color="#0a26f7"/><stop offset="1.000" stop-color="#0a23f7"/></linearGradient><linearGradient id="g29" gradientUnits="userSpaceOnUse" x1="0" y1="0" x2="1000" y2="0"><stop offset="0.000" stop-color="#0a0af7"/><stop offset="0.020" stop-color="#0a0af7"/><stop offset="0.040" stop-color="#0a0af7"/><stop offset="0.060" stop-color="#0a0af7"/><stop offset="0.080" stop-color="#0a0af7"/><stop offset="0.100" stop-color="#0a55f7"/><stop offset="0.120" stop-color="#0a78f7"/><stop offset="0.140" stop-color="#0a9cf7"/><stop offset="0.160" stop-color="#0abff7"/><stop offset="0.180" stop-color="#0af7c9"/><stop offset="0.200" stop-color="#0af74f"/><stop offset="0.220" stop-color="#32f70a"/><stop offset="0.240" stop-color="#91f70a"/><stop offset="0.260" stop-color="#f0f70a"/><stop offset="0.280" stop-color="#f7bc0a"/><stop offset="0.300" stop-color="#f7c60a"/><stop offset="0.320" stop-color="#f7e50a"/><stop offset="0.340" stop-color="#f7a60a"/><stop offset="0.360" stop-color="#f7880a"/><stop offset="0.380" stop-color="#f7b90a"/><stop offset="0.400" stop-color="#f7d90a"/><stop offset="0.420" stop-color="#f79d0a"/><stop offset="0.440" stop-color="#f78b0a"/><stop offset="0.460" stop-color="#f7c50a"/><stop offset="0.480" stop-color="#f7ea0a"/><stop offset="0.500" stop-color="#f7b20a"/><stop offset="0.520" stop-color="#f7870a"/><stop offset="0.540" stop-color="#f7c00a"/><stop offset="0.560" stop-color="#d9f70a"/><stop offset="0.580" stop-color="#f7c20a"/><stop offset="0.600" stop-color="#f7880a"/><stop offset="0.620" stop-color="#f7e30a"/><stop offset="0.640" stop-color="#a4f70a"/><stop offset="0.660" stop-color="#f7f50a"/><stop offset="0.680" stop-color="#f78b0a"/><stop offset="0.700" stop-color="#f7c30a"/><stop offset="0.720" stop-color="#f0f70a"/><stop offset="0.740" stop-color="#f7bb0a"/><stop offset="0.760" stop-color="#f7eb0a"/><stop offset="0.780" stop-color="#9bf70a"/><stop offset="0.800" stop-color="#5ff70a"/><stop offset="0.820" stop-color="#3ef70a"/><stop offset="0.840" stop-color="#0af72b"/><stop offset="0.860" stop-color="#0af780"/><stop offset="0.880" stop-color="#0af7b9"/><stop offset="0.900" stop-color="#0af7e8"/><stop offset="0.920" stop-color="#0ad6f7"/><stop offset="0.940" stop-color="#0aa3f7"/><stop offset="0.960" stop-color="#0a62f7"/><stop offset="0.980" stop-color="#0a26f7"/><stop offset="1.000" stop-color="#0a23f7"/></linearGradient><linearGradient id="g30" gradientUnits="userSpaceOnUse" x1="0" y1="0" x2="1000" y2="0"><stop offset="0.000" stop-color="#0a0af7"/><stop offset="0.020" stop-color="#0a0af7"/><stop offset="0.040" stop-color="#0a0af7"/><stop offset="0.060" stop-color="#0a0af7"/><stop offset="0.080" stop-color="#0a0af7"/><stop offset="0.100" stop-color="#0a51f7"/><stop offset="0.120" stop-color="#0a75f7"/><stop offset="0.140" stop-color="#0a98f7"/><stop offset="0.160" stop-color="#0abbf7"/><stop offset="0.180" stop-color="#0af7d5"/><stop offset="0.200" stop-color="#0af75b"/><stop offset="0.220" stop-color="#29f70a"/><stop offset="0.240" stop-color="#88f70a"/><stop offset="0.260" stop-color="#e6f70a"/><stop offset="0.280" stop-color="#f7c20a"/><stop offset="0.300" stop-color="#f7c30a"/><stop offset="0.320" stop-color="#f7e10a"/><stop offset="0.340" stop-color="#f7a40a"/><stop offset="0.360" stop-color="#f7870a"/><stop offset="0.380" stop-color="#f7b60a"/><stop offset="0.400" stop-color="#f7d50a"/><stop offset="0.420" stop-color="#f79b0a"/><stop offset="0.440" stop-color="#f78a0a"/><stop offset="0.460" stop-color="#f7c20a"/><stop offset="0.480" stop-color="#f7e60a"/><stop offset="0.500" stop-color="#f7af0a"/><stop offset="0.520" stop-color="#f7850a"/><stop offset="0.540" stop-color="#f7bd0a"/><stop offset="0.560" stop-color="#ddf70a"/><stop offset="0.580" stop-color="#f7c00a"/><stop offset="0.600" stop-color="#f7860a"/><stop offset="0.620" stop-color="#f7e00a"/><stop offset="0.640" stop-color="#a8f70a"/><stop offset="0.660" stop-color="#f7f20a"/><stop offset="0.680" stop-color="#f78a0a"/><stop offset="0.700" stop-color="#f7c10a"/><stop offset="0.720" stop-color="#f3f70a"/><stop offset="0.740" stop-color="#f7bb0a"/><stop offset="0.760" stop-color="#f7eb0a"/><stop offset="0.780" stop-color="#9ff70a"/><stop offset="0.800" stop-color="#63f70a"/><stop offset="0.820" stop-color="#3ff70a"/><stop offset="0.840" stop-color="#0af727"/><stop offset="0.860" stop-color="#0af77a"/><stop offset="0.880" stop-color="#0af7b6"/><stop offset="0.900" stop-color="#0af7e5"/><stop offset="0.920" stop-color="#0ad9f7"/><stop offset="0.940" stop-color="#0aa6f7"/><stop offset="0.960" stop-color="#0a66f7"/><stop offset="0.980" stop-color="#0a26f7"/><stop offset="1.000" stop-color="#0a23f7"/></linearGradient><linearGradient id="g31" gradientUnits="userSpaceOnUse" x1="0" y1="0" x2="1000" y2="0"><stop offset="0.000" stop-color="#0a0af7"/><stop offset="0.020" stop-color="#0a0af7"/><stop offset="0.040" stop-color="#0a0af7"/><stop offset="0.060" stop-color="#0a0af7"/><stop offset="0.080" stop-color="#0a0af7"/><stop offset="0.100" stop-color="#0a4ef7"/><stop offset="0.120" stop-color="#0a71f7"/><stop offset="0.140" stop-color="#0a94f7"/><stop offset="0.160" stop-color="#0ab8f7"/><stop offset="0.180" stop-color="#0af7e2"/><stop offset="0.200" stop-color="#0af768"/><stop offset="0.220" stop-color="#1ff70a"/><stop offset="0.240" stop-color="#7ef70a"/><stop offset="0.260" stop-color="#ddf70a"/><stop offset="0.280" stop-color="#f7c80a"/><stop offset="0.300" stop-color="#f7c10a"/><stop offset="0.320" stop-color="#f7dd0a"/><stop offset="0.340" stop-color="#f7a20a"/><stop offset="0.360" stop-color="#f7860a"/><stop offset="0.380" stop-color="#f7b40a"/><stop offset="0.400" stop-color="#f7d20a"/><stop offset="0.420" stop-color="#f79a0a"/><stop offset="0.440" stop-color="#f7890a"/><stop offset="0.460" stop-color="#f7bf0a"/><stop offset="0.480" stop-color="#f7e20a"/><stop offset="0.500" stop-color="#f7ae0a"/><stop offset="0.520" stop-color="#f7850a"/><stop offset="0.540" stop-color="#f7bb0a"/><stop offset="0.560" stop-color="#e0f70a"/><stop offset="0.580" stop-color="#f7be0a"/><stop offset="0.600" stop-color="#f7860a"/><stop offset="0.620" stop-color="#f7de0a"/><stop offset="0.640" stop-color="#acf70a"/><stop offset="0.660" stop-color="#f7ef0a"/><stop offset="0.680" stop-color="#f7890a"/><stop offset="0.700" stop-color="#f7bf0a"/><stop offset="0.720" stop-color="#f6f70a"/><stop offset="0.740" stop-color="#f7bb0a"/><stop offset="0.760" stop-color="#f7eb0a"/><stop offset="0.780" stop-color="#a2f70a"/><stop offset="0.800" stop-color="#67f70a"/><stop offset="0.820" stop-color="#3ff70a"/><stop offset="0.840" stop-color="#0af726"/><stop offset="0.860" stop-color="#0af779"/><stop offset="0.880" stop-color="#0af7b5"/><stop offset="0.900" stop-color="#0af7e3"/><stop offset="0.920" stop-color="#0adbf7"/><stop offset="0.940" stop-color="#0aaaf7"/><stop offset="0.960" stop-color="#0a6af7"/><stop offset="0.980" stop-color="#0a2bf7"/><stop offset="1.000" stop-color="#0a24f7"/></linearGradient><linearGradient id="g32" gradientUnits="userSpaceOnUse" x1="0" y1="0" x2="1000" y2="0"><stop offset="0.000" stop-color="#0a0af7"/><stop offset="0.020" stop-color="#0a0af7"/><stop offset="0.040" stop-color="#0a0af7"/><stop offset="0.060" stop-color="#0a0af7"/><stop offset="0.080" stop-color="#0a0af7"/><stop offset="0.100" stop-color="#0a0af7"/><stop offset="0.120" stop-color="#0a69f7"/><stop offset="0.140" stop-color="#0a8df7"/><stop offset="0.160" stop-color="#0ab1f7"/><stop offset="0.180" stop-color="#0af7f4"/><stop offset="0.200" stop-color="#0af777"/><stop offset="0.220" stop-color="#16f70a"/><stop offset="0.240" stop-color="#75f70a"/><stop offset="0.260" stop-color="#d3f70a"/><stop offset="0.280" stop-color="#f7cf0a"/><stop offset="0.300" stop-color="#f7bf0a"/><stop offset="0.320" stop-color="#f7db0a"/><stop offset="0.340" stop-color="#f7a10a"/><stop offset="0.360" stop-color="#f7860a"/><stop offset="0.380" stop-color="#f7b20a"/><stop offset="0.400" stop-color="#f7d00a"/><stop offset="0.420" stop-color="#f7990a"/><stop offset="0.440" stop-color="#f7890a"/><stop offset="0.460" stop-color="#f7bd0a"/><stop offset="0.480" stop-color="#f7df0a"/><stop offset="0.500" stop-color="#f7ac0a"/><stop offset="0.520" stop-color="#f7850a"/><stop offset="0.540" stop-color="#f7ba0a"/><stop offset="0.560" stop-color="#e3f70a"/><stop offset="0.580" stop-color="#f7bd0a"/><stop offset="0.600" stop-color="#f7860a"/><stop offset="0.620" stop-color="#f7dc0a"/><stop offset="0.640" stop-color="#aff70a"/><stop offset="0.660" stop-color="#f7ee0a"/><stop offset="0.680" stop-color="#f7890a"/><stop offset="0.700" stop-color="#f7be0a"/><stop offset="0.720" stop-color="#f7f60a"/><stop offset="0.740" stop-color="#f7bb0a"/><stop offset="0.760" stop-color="#f7eb0a"/><stop offset="0.780" stop-color="#a5f70a"/><stop offset="0.800" stop-color="#6bf70a"/><stop offset="0.820" stop-color="#40f70a"/><stop offset="0.840" stop-color="#0af725"/><stop offset="0.860" stop-color="#0af777"/><stop offset="0.880" stop-color="#0af7b3"/><stop offset="0.900" stop-color="#0af7e2"/><stop offset="0.920" stop-color="#0addf7"/><stop offset="0.940" stop-color="#0aadf7"/><stop offset="0.960" stop-color="#0a6ef7"/><stop offset="0.980" stop-color="#0a2ff7"/><stop offset="1.000" stop-color="#0a24f7"/></linearGradient><linearGradient id="g33" gradientUnits="userSpaceOnUse" x1="0" y1="0" x2="1000" y2="0"><stop offset="0.000" stop-color="#0a0af7"/><stop offset="0.020" stop-color="#0a0af7"/><stop offset="0.040" stop-color="#0a0af7"/><stop offset="0.060" stop-color="#0a0af7"/><stop offset="0.080" stop-color="#0a0af7"/><stop offset="0.100" stop-color="#0a0af7"/><stop offset="0.120" stop-color="#0a5af7"/><stop offset="0.140" stop-color="#0a81f7"/><stop offset="0.160" stop-color="#0aa7f7"/><stop offset="0.180" stop-color="#0adff7"/><stop offset="0.200" stop-color="#0af789"/><stop offset="0.220" stop-color="#0ef70a"/><stop offset="0.240" stop-color="#6df70a"/><stop offset="0.260" stop-color="#cbf70a"/><stop offset="0.280" stop-color="#f7d40a"/><stop offset="0.300" stop-color="#f7be0a"/><stop offset="0.320" stop-color="#f7d90a"/><stop offset="0.340" stop-color="#f7a00a"/><stop offset="0.360" stop-color="#f7860a"/><stop offset="0.380" stop-color="#f7b10a"/><stop offset="0.400" stop-color="#f7ce0a"/><stop offset="0.420" stop-color="#f7990a"/><stop offset="0.440" stop-color="#f7890a"/><stop offset="0.460" stop-color="#f7bc0a"/><stop offset="0.480" stop-color="#f7dd0a"/><stop offset="0.500" stop-color="#f7ab0a"/><stop offset="0.520" stop-color="#f7850a"/><stop offset="0.540" stop-color="#f7b90a"/><stop offset="0.560" stop-color="#e5f70a"/><stop offset="0.580" stop-color="#f7bc0a"/><stop offset="0.600" stop-color="#f7860a"/><stop offset="0.620" stop-color="#f7db0a"/><stop offset="0.640" stop-color="#b1f70a"/><stop offset="0.660" stop-color="#f7ec0a"/><stop offset="0.680" stop-color="#f7890a"/><stop offset="0.700" stop-color="#f7be0a"/><stop offset="0.720" stop-color="#f7f40a"/><stop offset="0.740" stop-color="#f7bb0a"/><stop offset="0.760" stop-color="#f7eb0a"/><stop offset="0.780" stop-color="#a7f70a"/><stop offset="0.800" stop-color="#6df70a"/><stop offset="0.820" stop-color="#40f70a"/><stop offset="0.840" stop-color="#0af724"/><stop offset="0.860" stop-color="#0af775"/><stop offset="0.880" stop-color="#0af7b2"/><stop offset="0.900" stop-color="#0af7e0"/><stop offset="0.920" stop-color="#0adff7"/><stop offset="0.940" stop-color="#0ab0f7"/><stop offset="0.960" stop-color="#0a72f7"/><stop offset="0.980" stop-color="#0a34f7"/><stop offset="1.000" stop-color="#0a24f7"/></linearGradient><linearGradient id="g34" gradientUnits="userSpaceOnUse" x1="0" y1="0" x2="1000" y2="0"><stop offset="0.000" stop-color="#0a0af7"/><stop offset="0.020" stop-color="#0a0af7"/><stop offset="0.040" stop-color="#0a0af7"/><stop offset="0.060" stop-color="#0a0af7"/><stop offset="0.080" stop-color="#0a0af7"/><stop offset="0.100" stop-color="#0a0af7"/><stop offset="0.120" stop-color="#0a0af7"/><stop offset="0.140" stop-color="#0a74f7"/><stop offset="0.160" stop-color="#0a9df7"/><stop offset="0.180" stop-color="#0ac7f7"/><stop offset="0.200" stop-color="#0af796"/><stop offset="0.220" stop-color="#0cf70a"/><stop offset="0.240" stop-color="#6bf70a"/><stop offset="0.260" stop-color="#c9f70a"/><stop offset="0.280" stop-color="#f7d50a"/><stop offset="0.300" stop-color="#f7bd0a"/><stop offset="0.320" stop-color="#f7d70a"/><stop offset="0.340" stop-color="#f7a00a"/><stop offset="0.360" stop-color="#f7860a"/><stop offset="0.380" stop-color="#f7b00a"/><stop offset="0.400" stop-color="#f7cc0a"/><stop offset="0.420" stop-color="#f7980a"/><stop offset="0.440" stop-color="#f7890a"/><stop offset="0.460" stop-color="#f7bb0a"/><stop offset="0.480" stop-color="#f7db0a"/><stop offset="0.500" stop-color="#f7ab0a"/><stop offset="0.520" stop-color="#f7850a"/><stop offset="0.540" stop-color="#f7b80a"/><stop offset="0.560" stop-color="#e7f70a"/><stop offset="0.580" stop-color="#f7bc0a"/><stop offset="0.600" stop-color="#f7860a"/><stop offset="0.620" stop-color="#f7da0a"/><stop offset="0.640" stop-color="#b3f70a"/><stop offset="0.660" stop-color="#f7eb0a"/><stop offset="0.680" stop-color="#f7890a"/><stop offset="0.700" stop-color="#f7bd0a"/><stop offset="0.720" stop-color="#f7f40a"/><stop offset="0.740" stop-color="#f7bb0a"/><stop offset="0.760" stop-color="#f7eb0a"/><stop offset="0.780" stop-color="#a8f70a"/><stop offset="0.800" stop-color="#6ff70a"/><stop offset="0.820" stop-color="#40f70a"/><stop offset="0.840" stop-color="#0af723"/><stop offset="0.860" stop-color="#0af773"/><stop offset="0.880" stop-color="#0af7b0"/><stop offset="0.900" stop-color="#0af7de"/><stop offset="0.920" stop-color="#0ae1f7"/><stop offset="0.940" stop-color="#0ab3f7"/><stop offset="0.960" stop-color="#0a76f7"/><stop offset="0.980" stop-color="#0a38f7"/><stop offset="1.000" stop-color="#0a24f7"/></linearGradient><linearGradient id="g35" gradientUnits="userSpaceOnUse" x1="0" y1="0" x2="1000" y2="0"><stop offset="0.000" stop-color="#0a0af7"/><stop offset="0.020" stop-color="#0a0af7"/><stop offset="0.040" stop-color="#0a0af7"/><stop offset="0.060" stop-color="#0a0af7"/><stop offset="0.080" stop-color="#0a0af7"/><stop offset="0.100" stop-color="#0a0af7"/><stop offset="0.120" stop-color="#0a0af7"/><stop offset="0.140" stop-color="#0a64f7"/><stop offset="0.160" stop-color="#0a92f7"/><stop offset="0.180" stop-color="#0abff7"/><stop offset="0.200" stop-color="#0af7a5"/><stop offset="0.220" stop-color="#0af70a"/><stop offset="0.240" stop-color="#69f70a"/><stop offset="0.260" stop-color="#c8f70a"/><stop offset="0.280" stop-color="#f7d70a"/><stop offset="0.300" stop-color="#f7bc0a"/><stop offset="0.320" stop-color="#f7d60a"/><stop offset="0.340" stop-color="#f7a00a"/><stop offset="0.360" stop-color="#f7860a"/><stop offset="0.380" stop-color="#f7b00a"/><stop offset="0.400" stop-color="#f7cc0a"/><stop offset="0.420" stop-color="#f7980a"/><stop offset="0.440" stop-color="#f7890a"/><stop offset="0.460" stop-color="#f7bb0a"/><stop offset="0.480" stop-color="#f7da0a"/><stop offset="0.500" stop-color="#f7aa0a"/><stop offset="0.520" stop-color="#f7850a"/><stop offset="0.540" stop-color="#f7b80a"/><stop offset="0.560" stop-color="#e7f70a"/><stop offset="0.580" stop-color="#f7bb0a"/><stop offset="0.600" stop-color="#f7860a"/><stop offset="0.620" stop-color="#f7da0a"/><stop offset="0.640" stop-color="#b3f70a"/><stop offset="0.660" stop-color="#f7eb0a"/><stop offset="0.680" stop-color="#f7890a"/><stop offset="0.700" stop-color="#f7bd0a"/><stop offset="0.720" stop-color="#f7f30a"/><stop offset="0.740" stop-color="#f7bb0a"/><stop offset="0.760" stop-color="#f7eb0a"/><stop offset="0.780" stop-color="#a9f70a"/><stop offset="0.800" stop-color="#70f70a"/><stop offset="0.820" stop-color="#41f70a"/><stop offset="0.840" stop-color="#0af722"/><stop offset="0.860" stop-color="#0af771"/><stop offset="0.880" stop-color="#0af7af"/><stop offset="0.900" stop-color="#0af7dc"/><stop offset="0.920" stop-color="#0ae3f7"/><stop offset="0.940" stop-color="#0ab6f7"/><stop offset="0.960" stop-color="#0a79f7"/><stop offset="0.980" stop-color="#0a3df7"/><stop offset="1.000" stop-color="#0a24f7"/></linearGradient><linearGradient id="g36" gradientUnits="userSpaceOnUse" x1="0" y1="0" x2="1000" y2="0"><stop offset="0.000" stop-color="#0a0af7"/><stop offset="0.020" stop-color="#0a0af7"/><stop offset="0.040" stop-color="#0a0af7"/><stop offset="0.060" stop-color="#0a0af7"/><stop offset="0.080" stop-color="#0a0af7"/><stop offset="0.100" stop-color="#0a0af7"/><stop offset="0.120" stop-color="#0a0af7"/><stop offset="0.140" stop-color="#0a52f7"/><stop offset="0.160" stop-color="#0a84f7"/><stop offset="0.180" stop-color="#0ab5f7"/><stop offset="0.200" stop-color="#0af7b8"/><stop offset="0.220" stop-color="#0af70c"/><stop offset="0.240" stop-color="#67f70a"/><stop offset="0.260" stop-color="#c6f70a"/><stop offset="0.280" stop-color="#f7d80a"/><stop offset="0.300" stop-color="#f7bc0a"/><stop offset="0.320" stop-color="#f7d60a"/><stop offset="0.340" stop-color="#f7a00a"/><stop offset="0.360" stop-color="#f7860a"/><stop offset="0.380" stop-color="#f7b00a"/><stop offset="0.400" stop-color="#f7cc0a"/><stop offset="0.420" stop-color="#f7980a"/><stop offset="0.440" stop-color="#f7890a"/><stop offset="0.460" stop-color="#f7ba0a"/><stop offset="0.480" stop-color="#f7da0a"/><stop offset="0.500" stop-color="#f7aa0a"/><stop offset="0.520" stop-color="#f7850a"/><stop offset="0.540" stop-color="#f7b80a"/><stop offset="0.560" stop-color="#e7f70a"/><stop offset="0.580" stop-color="#f7bb0a"/><stop offset="0.600" stop-color="#f7860a"/><stop offset="0.620" stop-color="#f7da0a"/><stop offset="0.640" stop-color="#b3f70a"/><stop offset="0.660" stop-color="#f7eb0a"/><stop offset="0.680" stop-color="#f7890a"/><stop offset="0.700" stop-color="#f7bd0a"/><stop offset="0.720" stop-color="#f7f30a"/><stop offset="0.740" stop-color="#f7bb0a"/><stop offset="0.760" stop-color="#f7eb0a"/><stop offset="0.780" stop-color="#a9f70a"/><stop offset="0.800" stop-color="#70f70a"/><stop offset="0.820" stop-color="#41f70a"/><stop offset="0.840" stop-color="#0af721"/><stop offset="0.860" stop-color="#0af770"/><stop offset="0.880" stop-color="#0af7ae"/><stop offset="0.900" stop-color="#0af7db"/><stop offset="0.920" stop-color="#0ae5f7"/><stop offset="0.940" stop-color="#0ab8f7"/><stop offset="0.960" stop-color="#0a7df7"/><stop offset="0.980" stop-color="#0a41f7"/><stop offset="1.000" stop-color="#0a24f7"/></linearGradient><linearGradient id="g37" gradientUnits="userSpaceOnUse" x1="0" y1="0" x2="1000" y2="0"><stop offset="0.000" stop-color="#0a0af7"/><stop offset="0.020" stop-color="#0a0af7"/><stop offset="0.040" stop-color="#0a0af7"/><stop offset="0.060" stop-color="#0a0af7"/><stop offset="0.080" stop-color="#0a0af7"/><stop offset="0.100" stop-color="#0a0af7"/><stop offset="0.120" stop-color="#0a0af7"/><stop offset="0.140" stop-color="#0a0af7"/><stop offset="0.160" stop-color="#0a7af7"/><stop offset="0.180" stop-color="#0aaef7"/><stop offset="0.200" stop-color="#0af7c6"/><stop offset="0.220" stop-color="#0af710"/><stop offset="0.240" stop-color="#65f70a"/><stop offset="0.260" stop-color="#c4f70a"/><stop offset="0.280" stop-color="#f7d90a"/><stop offset="0.300" stop-color="#f7bc0a"/><stop offset="0.320" stop-color="#f7d60a"/><stop offset="0.340" stop-color="#f7a00a"/><stop offset="0.360" stop-color="#f7860a"/><stop offset="0.380" stop-color="#f7b00a"/><stop offset="0.400" stop-color="#f7cc0a"/><stop offset="0.420" stop-color="#f7980a"/><stop offset="0.440" stop-color="#f7890a"/><stop offset="0.460" stop-color="#f7ba0a"/><stop offset="0.480" stop-color="#f7da0a"/><stop offset="0.500" stop-color="#f7aa0a"/><stop offset="0.520" stop-color="#f7850a"/><stop offset="0.540" stop-color="#f7b80a"/><stop offset="0.560" stop-color="#e7f70a"/><stop offset="0.580" stop-color="#f7bb0a"/><stop offset="0.600" stop-color="#f7860a"/><stop offset="0.620" stop-color="#f7da0a"/><stop offset="0.640" stop-color="#b3f70a"/><stop offset="0.660" stop-color="#f7eb0a"/><stop offset="0.680" stop-color="#f7890a"/><stop offset="0.700" stop-color="#f7bd0a"/><stop offset="0.720" stop-color="#f7f30a"/><stop offset="0.740" stop-color="#f7bb0a"/><stop offset="0.760" stop-color="#f7eb0a"/><stop offset="0.780" stop-color="#a9f70a"/><stop offset="0.800" stop-color="#70f70a"/><stop offset="0.820" stop-color="#41f70a"/><stop offset="0.840" stop-color="#0af720"/><stop offset="0.860" stop-color="#0af76e"/><stop offset="0.880" stop-color="#0af7ac"/><stop offset="0.900" stop-color="#0af7d9"/><stop offset="0.920" stop-color="#0ae7f7"/><stop offset="0.940" stop-color="#0abaf7"/><stop offset="0.960" stop-color="#0a81f7"/><stop offset="0.980" stop-color="#0a45f7"/><stop offset="1.000" stop-color="#0a25f7"/></linearGradient><linearGradient id="g38" gradientUnits="userSpaceOnUse" x1="0" y1="0" x2="1000" y2="0"><stop offset="0.000" stop-color="#0a0af7"/><stop offset="0.020" stop-color="#0a0af7"/><stop offset="0.040" stop-color="#0a0af7"/><stop offset="0.060" stop-color="#0a0af7"/><stop offset="0.080" stop-color="#0a0af7"/><stop offset="0.100" stop-color="#0a0af7"/><stop offset="0.120" stop-color="#0a0af7"/><stop offset="0.140" stop-color="#0a0af7"/><stop offset="0.160" stop-color="#0a72f7"/><stop offset="0.180" stop-color="#0aa9f7"/><stop offset="0.200" stop-color="#0af7d1"/><stop offset="0.220" stop-color="#0af714"/><stop offset="0.240" stop-color="#63f70a"/><stop offset="0.260" stop-color="#c2f70a"/><stop offset="0.280" stop-color="#f7da0a"/><stop offset="0.300" stop-color="#f7bc0a"/><stop offset="0.320" stop-color="#f7d60a"/><stop offset="0.340" stop-color="#f7a00a"/><stop offset="0.360" stop-color="#f7860a"/><stop offset="0.380" stop-color="#f7b00a"/><stop offset="0.400" stop-color="#f7cc0a"/><stop offset="0.420" stop-color="#f7980a"/><stop offset="0.440" stop-color="#f7890a"/><stop offset="0.460" stop-color="#f7ba0a"/><stop offset="0.480" stop-color="#f7da0a"/><stop offset="0.500" stop-color="#f7aa0a"/><stop offset="0.520" stop-color="#f7850a"/><stop offset="0.540" stop-color="#f7b80a"/><stop offset="0.560" stop-color="#e7f70a"/><stop offset="0.580" stop-color="#f7bb0a"/><stop offset="0.600" stop-color="#f7860a"/><stop offset="0.620" stop-color="#f7da0a"/><stop offset="0.640" stop-color="#b3f70a"/><stop offset="0.660" stop-color="#f7eb0a"/><stop offset="0.680" stop-color="#f7890a"/><stop offset="0.700" stop-color="#f7bd0a"/><stop offset="0.720" stop-color="#f7f30a"/><stop offset="0.740" stop-color="#f7bb0a"/><stop offset="0.760" stop-color="#f7eb0a"/><stop offset="0.780" stop-color="#a9f70a"/><stop offset="0.800" stop-color="#70f70a"/><stop offset="0.820" stop-color="#42f70a"/><stop offset="0.840" stop-color="#0af71f"/><stop offset="0.860" stop-color="#0af76c"/><stop offset="0.880" stop-color="#0af7ab"/><stop offset="0.900" stop-color="#0af7d8"/><stop offset="0.920" stop-color="#0ae9f7"/><stop offset="0.940" stop-color="#0abcf7"/><stop offset="0.960" stop-color="#0a84f7"/><stop offset="0.980" stop-color="#0a49f7"/><stop offset="1.000" stop-color="#0a25f7"/></linearGradient><linearGradient id="g39" gradientUnits="userSpaceOnUse" x1="0" y1="0" x2="1000" y2="0"><stop offset="0.000" stop-color="#0a0af7"/><stop offset="0.020" stop-color="#0a0af7"/><stop offset="0.040" stop-color="#0a0af7"/><stop offset="0.060" stop-color="#0a0af7"/><stop offset="0.080" stop-color="#0a0af7"/><stop offset="0.100" stop-color="#0a0af7"/><stop offset="0.120" stop-color="#0a0af7"/><stop offset="0.140" stop-color="#0a0af7"/><stop offset="0.160" stop-color="#0a6af7"/><stop offset="0.180" stop-color="#0aa3f7"/><stop offset="0.200" stop-color="#0af7de"/><stop offset="0.220" stop-color="#0af719"/><stop offset="0.240" stop-color="#61f70a"/><stop offset="0.260" stop-color="#c0f70a"/><stop offset="0.280" stop-color="#f7dc0a"/><stop offset="0.300" stop-color="#f7bc0a"/><stop offset="0.320" stop-color="#f7d60a"/><stop offset="0.340" stop-color="#f7a00a"/><stop offset="0.360" stop-color="#f7860a"/><stop offset="0.380" stop-color="#f7b00a"/><stop offset="0.400" stop-color="#f7cc0a"/><stop offset="0.420" stop-color="#f7980a"/><stop offset="0.440" stop-color="#f7890a"/><stop offset="0.460" stop-color="#f7ba0a"/><stop offset="0.480" stop-color="#f7da0a"/><stop offset="0.500" stop-color="#f7aa0a"/><stop offset="0.520" stop-color="#f7850a"/><stop offset="0.540" stop-color="#f7b80a"/><stop offset="0.560" stop-color="#e7f70a"/><stop offset="0.580" stop-color="#f7bb0a"/><stop offset="0.600" stop-color="#f7860a"/><stop offset="0.620" stop-color="#f7da0a"/><stop offset="0.640" stop-color="#b3f70a"/><stop offset="0.660" stop-color="#f7eb0a"/><stop offset="0.680" stop-color="#f7890a"/><stop offset="0.700" stop-color="#f7bd0a"/><stop offset="0.720" stop-color="#f7f30a"/><stop offset="0.740" stop-color="#f7bb0a"/><stop offset="0.760" stop-color="#f7eb0a"/><stop offset="0.780" stop-color="#a9f70a"/><stop offset="0.800" stop-color="#70f70a"/><stop offset="0.820" stop-color="#42f70a"/><stop offset="0.840" stop-color="#0af71e"/><stop offset="0.860" stop-color="#0af76a"/><stop offset="0.880" stop-color="#0af7aa"/><stop offset="0.900" stop-color="#0af7d6"/><stop offset="0.920" stop-color="#0aebf7"/><stop offset="0.940" stop-color="#0abff7"/><stop offset="0.960" stop-color="#0a87f7"/><stop offset="0.980" stop-color="#0a4df7"/><stop offset="1.000" stop-color="#0a25f7"/></linearGradient><linearGradient id="g40" gradientUnits="userSpaceOnUse" x1="0" y1="0" x2="1000" y2="0"><stop offset="0.000" stop-color="#0a0af7"/><stop offset="0.020" stop-color="#0a0af7"/><stop offset="0.040" stop-color="#0a0af7"/><stop offset="0.060" stop-color="#0a0af7"/><stop offset="0.080" stop-color="#0a0af7"/><stop offset="0.100" stop-color="#0a0af7"/><stop offset="0.120" stop-color="#0a0af7"/><stop offset="0.140" stop-color="#0a0af7"/><stop offset="0.160" stop-color="#0a61f7"/><stop offset="0.180" stop-color="#0a9df7"/><stop offset="0.200" stop-color="#0af7eb"/><stop offset="0.220" stop-color="#0af71d"/><stop offset="0.240" stop-color="#5ff70a"/><stop offset="0.260" stop-color="#bef70a"/><stop offset="0.280" stop-color="#f7dd0a"/><stop offset="0.300" stop-color="#f7bc0a"/><stop offset="0.320" stop-color="#f7d60a"/><stop offset="0.340" stop-color="#f7a00a"/><stop offset="0.360" stop-color="#f7860a"/><stop offset="0.380" stop-color="#f7b00a"/><stop offset="0.400" stop-color="#f7cc0a"/><stop offset="0.420" stop-color="#f7980a"/><stop offset="0.440" stop-color="#f7890a"/><stop offset="0.460" stop-color="#f7ba0a"/><stop offset="0.480" stop-color="#f7da0a"/><stop offset="0.500" stop-color="#f7aa0a"/><stop offset="0.520" stop-color="#f7850a"/><stop offset="0.540" stop-color="#f7b80a"/><stop offset="0.560" stop-color="#e7f70a"/><stop offset="0.580" stop-color="#f7bb0a"/><stop offset="0.600" stop-color="#f7860a"/><stop offset="0.620" stop-color="#f7da0a"/><stop offset="0.640" stop-color="#b3f70a"/><stop offset="0.660" stop-color="#f7eb0a"/><stop offset="0.680" stop-color="#f7890a"/><stop offset="0.700" stop-color="#f7bd0a"/><stop offset="0.720" stop-color="#f7f30a"/><stop offset="0.740" stop-color="#f7bb0a"/><stop offset="0.760" stop-color="#f7eb0a"/><stop offset="0.780" stop-color="#a9f70a"/><stop offset="0.800" stop-color="#70f70a"/><stop offset="0.820" stop-color="#42f70a"/><stop offset="0.840" stop-color="#0af71d"/><stop offset="0.860" stop-color="#0af769"/><stop offset="0.880" stop-color="#0af7a9"/><stop offset="0.900" stop-color="#0af7d4"/><stop offset="0.920" stop-color="#0aedf7"/><stop offset="0.940" stop-color="#0ac1f7"/><stop offset="0.960" stop-color="#0a8bf7"/><stop offset="0.980" stop-color="#0a51f7"/><stop offset="1.000" stop-color="#0a25f7"/></linearGradient><linearGradient id="g41" gradientUnits="userSpaceOnUse" x1="0" y1="0" x2="1000" y2="0"><stop offset="0.000" stop-color="#0a0af7"/><stop offset="0.020" stop-color="#0a0af7"/><stop offset="0.040" stop-color="#0a0af7"/><stop offset="0.060" stop-color="#0a0af7"/><stop offset="0.080" stop-color="#0a0af7"/><stop offset="0.100" stop-color="#0a0af7"/><stop offset="0.120" stop-color="#0a0af7"/><stop offset="0.140" stop-color="#0a0af7"/><stop offset="0.160" stop-color="#0a57f7"/><stop offset="0.180" stop-color="#0a96f7"/><stop offset="0.200" stop-color="#0af3f7"/><stop offset="0.220" stop-color="#0af723"/><stop offset="0.240" stop-color="#5df70a"/><stop offset="0.260" stop-color="#bcf70a"/><stop offset="0.280" stop-color="#f7de0a"/><stop offset="0.300" stop-color="#f7bc0a"/><stop offset="0.320" stop-color="#f7d60a"/><stop offset="0.340" stop-color="#f79f0a"/><stop offset="0.360" stop-color="#f7850a"/><stop offset="0.380" stop-color="#f7b00a"/><stop offset="0.400" stop-color="#f7cb0a"/><stop offset="0.420" stop-color="#f7980a"/><stop offset="0.440" stop-color="#f7880a"/><stop offset="0.460" stop-color="#f7ba0a"/><stop offset="0.480" stop-color="#f7da0a"/><stop offset="0.500" stop-color="#f7aa0a"/><stop offset="0.520" stop-color="#f7850a"/><stop offset="0.540" stop-color="#f7b80a"/><stop offset="0.560" stop-color="#e8f70a"/><stop offset="0.580" stop-color="#f7bb0a"/><stop offset="0.600" stop-color="#f7860a"/><stop offset="0.620" stop-color="#f7da0a"/><stop offset="0.640" stop-color="#b3f70a"/><stop offset="0.660" stop-color="#f7eb0a"/><stop offset="0.680" stop-color="#f7890a"/><stop offset="0.700" stop-color="#f7bd0a"/><stop offset="0.720" stop-color="#f7f30a"/><stop offset="0.740" stop-color="#f7bb0a"/><stop offset="0.760" stop-color="#f7eb0a"/><stop offset="0.780" stop-color="#a9f70a"/><stop offset="0.800" stop-color="#70f70a"/><stop offset="0.820" stop-color="#43f70a"/><stop offset="0.840" stop-color="#0af71c"/><stop offset="0.860" stop-color="#0af767"/><stop offset="0.880" stop-color="#0af7a7"/><stop offset="0.900" stop-color="#0af7d3"/><stop offset="0.920" stop-color="#0aeef7"/><stop offset="0.940" stop-color="#0ac2f7"/><stop offset="0.960" stop-color="#0a8df7"/><stop offset="0.980" stop-color="#0a54f7"/><stop offset="1.000" stop-color="#0a25f7"/></linearGradient><linearGradient id="g42" gradientUnits="userSpaceOnUse" x1="0" y1="0" x2="1000" y2="0"><stop offset="0.000" stop-color="#0a0af7"/><stop offset="0.020" stop-color="#0a0af7"/><stop offset="0.040" stop-color="#0a0af7"/><stop offset="0.060" stop-color="#0a0af7"/><stop offset="0.080" stop-color="#0a0af7"/><stop offset="0.100" stop-color="#0a0af7"/><stop offset="0.120" stop-color="#0a0af7"/><stop offset="0.140" stop-color="#0a0af7"/><stop offset="0.160" stop-color="#0a4df7"/><stop offset="0.180" stop-color="#0a8ef7"/><stop offset="0.200" stop-color="#0ae3f7"/><stop offset="0.220" stop-color="#0af729"/><stop offset="0.240" stop-color="#5bf70a"/><stop offset="0.260" stop-color="#baf70a"/><stop offset="0.280" stop-color="#f7e00a"/><stop offset="0.300" stop-color="#f7bc0a"/><stop offset="0.320" stop-color="#f7d60a"/><stop offset="0.340" stop-color="#f79f0a"/><stop offset="0.360" stop-color="#f7850a"/><stop offset="0.380" stop-color="#f7af0a"/><stop offset="0.400" stop-color="#f7cb0a"/><stop offset="0.420" stop-color="#f7970a"/><stop offset="0.440" stop-color="#f7880a"/><stop offset="0.460" stop-color="#f7ba0a"/><stop offset="0.480" stop-color="#f7da0a"/><stop offset="0.500" stop-color="#f7aa0a"/><stop offset="0.520" stop-color="#f7840a"/><stop offset="0.540" stop-color="#f7b80a"/><stop offset="0.560" stop-color="#e8f70a"/><stop offset="0.580" stop-color="#f7bb0a"/><stop offset="0.600" stop-color="#f7860a"/><stop offset="0.620" stop-color="#f7da0a"/><stop offset="0.640" stop-color="#b3f70a"/><stop offset="0.660" stop-color="#f7eb0a"/><stop offset="0.680" stop-color="#f7890a"/><stop offset="0.700" stop-color="#f7bd0a"/><stop offset="0.720" stop-color="#f7f30a"/><stop offset="0.740" stop-color="#f7bb0a"/><stop offset="0.760" stop-color="#f7eb0a"/><stop offset="0.780" stop-color="#a9f70a"/><stop offset="0.800" stop-color="#70f70a"/><stop offset="0.820" stop-color="#43f70a"/><stop offset="0.840" stop-color="#0af71b"/><stop offset="0.860" stop-color="#0af766"/><stop offset="0.880" stop-color="#0af7a6"/><stop offset="0.900" stop-color="#0af7d2"/><stop offset="0.920" stop-color="#0aeff7"/><stop offset="0.940" stop-color="#0ac3f7"/><stop offset="0.960" stop-color="#0a90f7"/><stop offset="0.980" stop-color="#0a58f7"/><stop offset="1.000" stop-color="#0a26f7"/></linearGradient><linearGradient id="g43" gradientUnits="userSpaceOnUse" x1="0" y1="0" x2="1000" y2="0"><stop offset="0.000" stop-color="#0a0af7"/><stop offset="0.020" stop-color="#0a0af7"/><stop offset="0.040" stop-color="#0a0af7"/><stop offset="0.060" stop-color="#0a0af7"/><stop offset="0.080" stop-color="#0a0af7"/><stop offset="0.100" stop-color="#0a0af7"/><stop offset="0.120" stop-color="#0a0af7"/><stop offset="0.140" stop-color="#0a0af7"/><stop offset="0.160" stop-color="#0a0af7"/><stop offset="0.180" stop-color="#0a85f7"/><stop offset="0.200" stop-color="#0ad1f7"/><stop offset="0.220" stop-color="#0af72f"/><stop offset="0.240" stop-color="#59f70a"/><stop offset="0.260" stop-color="#b8f70a"/><stop offset="0.280" stop-color="#f7e10a"/><stop offset="0.300" stop-color="#f7bb0a"/><stop offset="0.320" stop-color="#f7d60a"/><stop offset="0.340" stop-color="#f79e0a"/><stop offset="0.360" stop-color="#f7840a"/><stop offset="0.380" stop-color="#f7af0a"/><stop offset="0.400" stop-color="#f7cb0a"/><stop offset="0.420" stop-color="#f7970a"/><stop offset="0.440" stop-color="#f7870a"/><stop offset="0.460" stop-color="#f7ba0a"/><stop offset="0.480" stop-color="#f7da0a"/><stop offset="0.500" stop-color="#f7a90a"/><stop offset="0.520" stop-color="#f7840a"/><stop offset="0.540" stop-color="#f7b70a"/><stop offset="0.560" stop-color="#e8f70a"/><stop offset="0.580" stop-color="#f7bb0a"/><stop offset="0.600" stop-color="#f7860a"/><stop offset="0.620" stop-color="#f7da0a"/><stop offset="0.640" stop-color="#b3f70a"/><stop offset="0.660" stop-color="#f7eb0a"/><stop offset="0.680" stop-color="#f7890a"/><stop offset="0.700" stop-color="#f7bd0a"/><stop offset="0.720" stop-color="#f7f30a"/><stop offset="0.740" stop-color="#f7bb0a"/><stop offset="0.760" stop-color="#f7eb0a"/><stop offset="0.780" stop-color="#a9f70a"/><stop offset="0.800" stop-color="#70f70a"/><stop offset="0.820" stop-color="#43f70a"/><stop offset="0.840" stop-color="#0af71a"/><stop offset="0.860" stop-color="#0af764"/><stop offset="0.880" stop-color="#0af7a5"/><stop offset="0.900" stop-color="#0af7d1"/><stop offset="0.920" stop-color="#0af0f7"/><stop offset="0.940" stop-color="#0ac4f7"/><stop offset="0.960" stop-color="#0a92f7"/><stop offset="0.980" stop-color="#0a5bf7"/><stop offset="1.000" stop-color="#0a26f7"/></linearGradient><linearGradient id="g44" gradientUnits="userSpaceOnUse" x1="0" y1="0" x2="1000" y2="0"><stop offset="0.000" stop-color="#0a0af7"/><stop offset="0.020" stop-color="#0a0af7"/><stop offset="0.040" stop-color="#0a0af7"/><stop offset="0.060" stop-color="#0a0af7"/><stop offset="0.080" stop-color="#0a0af7"/><stop offset="0.100" stop-color="#0a0af7"/><stop offset="0.120" stop-color="#0a0af7"/><stop offset="0.140" stop-color="#0a0af7"/><stop offset="0.160" stop-color="#0a0af7"/><stop offset="0.180" stop-color="#0a85f7"/><stop offset="0.200" stop-color="#0acef7"/><stop offset="0.220" stop-color="#0af734"/><stop offset="0.240" stop-color="#57f70a"/><stop offset="0.260" stop-color="#b6f70a"/><stop offset="0.280" stop-color="#f7e20a"/><stop offset="0.300" stop-color="#f7bb0a"/><stop offset="0.320" stop-color="#f7d60a"/><stop offset="0.340" stop-color="#f79e0a"/><stop offset="0.360" stop-color="#f7830a"/><stop offset="0.380" stop-color="#f7ae0a"/><stop offset="0.400" stop-color="#f7cb0a"/><stop offset="0.420" stop-color="#f7960a"/><stop offset="0.440" stop-color="#f7860a"/><stop offset="0.460" stop-color="#f7b90a"/><stop offset="0.480" stop-color="#f7da0a"/><stop offset="0.500" stop-color="#f7a90a"/><stop offset="0.520" stop-color="#f7830a"/><stop offset="0.540" stop-color="#f7b70a"/><stop offset="0.560" stop-color="#e8f70a"/><stop offset="0.580" stop-color="#f7bb0a"/><stop offset="0.600" stop-color="#f7860a"/><stop offset="0.620" stop-color="#f7da0a"/><stop offset="0.640" stop-color="#b3f70a"/><stop offset="0.660" stop-color="#f7eb0a"/><stop offset="0.680" stop-color="#f7890a"/><stop offset="0.700" stop-color="#f7bd0a"/><stop offset="0.720" stop-color="#f7f30a"/><stop offset="0.740" stop-color="#f7bb0a"/><stop offset="0.760" stop-color="#f7eb0a"/><stop offset="0.780" stop-color="#a9f70a"/><stop offset="0.800" stop-color="#70f70a"/><stop offset="0.820" stop-color="#44f70a"/><stop offset="0.840" stop-color="#0af719"/><stop offset="0.860" stop-color="#0af763"/><stop offset="0.880" stop-color="#0af7a4"/><stop offset="0.900" stop-color="#0af7d0"/><stop offset="0.920" stop-color="#0af1f7"/><stop offset="0.940" stop-color="#0ac6f7"/><stop offset="0.960" stop-color="#0a93f7"/><stop offset="0.980" stop-color="#0a5df7"/><stop offset="1.000" stop-color="#0a26f7"/></linearGradient><linearGradient id="g45" gradientUnits="userSpaceOnUse" x1="0" y1="0" x2="1000" y2="0"><stop offset="0.000" stop-color="#0a0af7"/><stop offset="0.020" stop-color="#0a0af7"/><stop offset="0.040" stop-color="#0a0af7"/><stop offset="0.060" stop-color="#0a0af7"/><stop offset="0.080" stop-color="#0a0af7"/><stop offset="0.100" stop-color="#0a0af7"/><stop offset="0.120" stop-color="#0a0af7"/><stop offset="0.140" stop-color="#0a0af7"/><stop offset="0.160" stop-color="#0a4df7"/><stop offset="0.180" stop-color="#0a8df7"/><stop offset="0.200" stop-color="#0adaf7"/><stop offset="0.220" stop-color="#0af736"/><stop offset="0.240" stop-color="#55f70a"/><stop offset="0.260" stop-color="#b4f70a"/><stop offset="0.280" stop-color="#f7e30a"/><stop offset="0.300" stop-color="#f7ba0a"/><stop offset="0.320" stop-color="#f7d50a"/><stop offset="0.340" stop-color="#f79d0a"/><stop offset="0.360" stop-color="#f7820a"/><stop offset="0.380" stop-color="#f7ad0a"/><stop offset="0.400" stop-color="#f7ca0a"/><stop offset="0.420" stop-color="#f7950a"/><stop offset="0.440" stop-color="#f7850a"/><stop offset="0.460" stop-color="#f7b80a"/><stop offset="0.480" stop-color="#f7d90a"/><stop offset="0.500" stop-color="#f7a80a"/><stop offset="0.520" stop-color="#f7820a"/><stop offset="0.540" stop-color="#f7b60a"/><stop offset="0.560" stop-color="#e8f70a"/><stop offset="0.580" stop-color="#f7bb0a"/><stop offset="0.600" stop-color="#f7850a"/><stop offset="0.620" stop-color="#f7da0a"/><stop offset="0.640" stop-color="#b3f70a"/><stop offset="0.660" stop-color="#f7eb0a"/><stop offset="0.680" stop-color="#f7890a"/><stop offset="0.700" stop-color="#f7bd0a"/><stop offset="0.720" stop-color="#f7f30a"/><stop offset="0.740" stop-color="#f7bb0a"/><stop offset="0.760" stop-color="#f7eb0a"/><stop offset="0.780" stop-color="#a9f70a"/><stop offset="0.800" stop-color="#70f70a"/><stop offset="0.820" stop-color="#44f70a"/><stop offset="0.840" stop-color="#0af718"/><stop offset="0.860" stop-color="#0af761"/><stop offset="0.880" stop-color="#0af7a3"/><stop offset="0.900" stop-color="#0af7cf"/><stop offset="0.920" stop-color="#0af3f7"/><stop offset="0.940" stop-color="#0ac7f7"/><stop offset="0.960" stop-color="#0a94f7"/><stop offset="0.980" stop-color="#0a5df7"/><stop offset="1.000" stop-color="#0a26f7"/></linearGradient><linearGradient id="g46" gradientUnits="userSpaceOnUse" x1="0" y1="0" x2="1000" y2="0"><stop offset="0.000" stop-color="#0a0af7"/><stop offset="0.020" stop-color="#0a0af7"/><stop offset="0.040" stop-color="#0a0af7"/><stop offset="0.060" stop-color="#0a0af7"/><stop offset="0.080" stop-color="#0a0af7"/><stop offset="0.100" stop-color="#0a0af7"/><stop offset="0.120" stop-color="#0a0af7"/><stop offset="0.140" stop-color="#0a0af7"/><stop offset="0.160" stop-color="#0a57f7"/><stop offset="0.180" stop-color="#0a93f7"/><stop offset="0.200" stop-color="#0ae5f7"/><stop offset="0.220" stop-color="#0af737"/><stop offset="0.240" stop-color="#53f70a"/><stop offset="0.260" stop-color="#b2f70a"/><stop offset="0.280" stop-color="#f7e50a"/><stop offset="0.300" stop-color="#f7b90a"/><stop offset="0.320" stop-color="#f7d40a"/><stop offset="0.340" stop-color="#f79b0a"/><stop offset="0.360" stop-color="#f7810a"/><stop offset="0.380" stop-color="#f7ac0a"/><stop offset="0.400" stop-color="#f7c90a"/><stop offset="0.420" stop-color="#f7940a"/><stop offset="0.440" stop-color="#f7840a"/><stop offset="0.460" stop-color="#f7b70a"/><stop offset="0.480" stop-color="#f7d80a"/><stop offset="0.500" stop-color="#f7a70a"/><stop offset="0.520" stop-color="#f7810a"/><stop offset="0.540" stop-color="#f7b60a"/><stop offset="0.560" stop-color="#e8f70a"/><stop offset="0.580" stop-color="#f7bb0a"/><stop offset="0.600" stop-color="#f7850a"/><stop offset="0.620" stop-color="#f7da0a"/><stop offset="0.640" stop-color="#b3f70a"/><stop offset="0.660" stop-color="#f7eb0a"/><stop offset="0.680" stop-color="#f7890a"/><stop offset="0.700" stop-color="#f7bd0a"/><stop offset="0.720" stop-color="#f7f30a"/><stop offset="0.740" stop-color="#f7bb0a"/><stop offset="0.760" stop-color="#f7eb0a"/><stop offset="0.780" stop-color="#a9f70a"/><stop offset="0.800" stop-color="#70f70a"/><stop offset="0.820" stop-color="#44f70a"/><stop offset="0.840" stop-color="#0af718"/><stop offset="0.860" stop-color="#0af760"/><stop offset="0.880" stop-color="#0af7a2"/><stop offset="0.900" stop-color="#0af7ce"/><stop offset="0.920" stop-color="#0af3f7"/><stop offset="0.940" stop-color="#0ac8f7"/><stop offset="0.960" stop-color="#0a95f7"/><stop offset="0.980" stop-color="#0a5ef7"/><stop offset="1.000" stop-color="#0a26f7"/></linearGradient><linearGradient id="g47" gradientUnits="userSpaceOnUse" x1="0" y1="0" x2="1000" y2="0"><stop offset="0.000" stop-color="#0a0af7"/><stop offset="0.020" stop-color="#0a0af7"/><stop offset="0.040" stop-color="#0a0af7"/><stop offset="0.060" stop-color="#0a0af7"/><stop offset="0.080" stop-color="#0a0af7"/><stop offset="0.100" stop-color="#0a0af7"/><stop offset="0.120" stop-color="#0a0af7"/><stop offset="0.140" stop-color="#0a0af7"/><stop offset="0.160" stop-color="#0a60f7"/><stop offset="0.180" stop-color="#0a99f7"/><stop offset="0.200" stop-color="#0aeef7"/><stop offset="0.220" stop-color="#0af739"/><stop offset="0.240" stop-color="#52f70a"/><stop offset="0.260" stop-color="#b0f70a"/><stop offset="0.280" stop-color="#f7e60a"/><stop offset="0.300" stop-color="#f7b70a"/><stop offset="0.320" stop-color="#f7d20a"/><stop offset="0.340" stop-color="#f79a0a"/><stop offset="0.360" stop-color="#f77f0a"/><stop offset="0.380" stop-color="#f7ab0a"/><stop offset="0.400" stop-color="#f7c70a"/><stop offset="0.420" stop-color="#f7920a"/><stop offset="0.440" stop-color="#f7820a"/><stop offset="0.460" stop-color="#f7b60a"/><stop offset="0.480" stop-color="#f7d70a"/><stop offset="0.500" stop-color="#f7a60a"/><stop offset="0.520" stop-color="#f7810a"/><stop offset="0.540" stop-color="#f7b50a"/><stop offset="0.560" stop-color="#e9f70a"/><stop offset="0.580" stop-color="#f7ba0a"/><stop offset="0.600" stop-color="#f7850a"/><stop offset="0.620" stop-color="#f7da0a"/><stop offset="0.640" stop-color="#b3f70a"/><stop offset="0.660" stop-color="#f7eb0a"/><stop offset="0.680" stop-color="#f7890a"/><stop offset="0.700" stop-color="#f7bd0a"/><stop offset="0.720" stop-color="#f7f30a"/><stop offset="0.740" stop-color="#f7bb0a"/><stop offset="0.760" stop-color="#f7eb0a"/><stop offset="0.780" stop-color="#a9f70a"/><stop offset="0.800" stop-color="#70f70a"/><stop offset="0.820" stop-color="#44f70a"/><stop offset="0.840" stop-color="#0af717"/><stop offset="0.860" stop-color="#0af760"/><stop offset="0.880" stop-color="#0af7a2"/><stop offset="0.900" stop-color="#0af7cd"/><stop offset="0.920" stop-color="#0af4f7"/><stop offset="0.940" stop-color="#0ac9f7"/><stop offset="0.960" stop-color="#0a97f7"/><stop offset="0.980" stop-color="#0a5ef7"/><stop offset="1.000" stop-color="#0a26f7"/></linearGradient><linearGradient id="g48" gradientUnits="userSpaceOnUse" x1="0" y1="0" x2="1000" y2="0"><stop offset="0.000" stop-color="#0a0af7"/><stop offset="0.020" stop-color="#0a0af7"/><stop offset="0.040" stop-color="#0a0af7"/><stop offset="0.060" stop-color="#0a0af7"/><stop offset="0.080" stop-color="#0a0af7"/><stop offset="0.100" stop-color="#0a0af7"/><stop offset="0.120" stop-color="#0a0af7"/><stop offset="0.140" stop-color="#0a0af7"/><stop offset="0.160" stop-color="#0a69f7"/><stop offset="0.180" stop-color="#0aa0f7"/><stop offset="0.200" stop-color="#0af7ee"/><stop offset="0.220" stop-color="#0af730"/><stop offset="0.240" stop-color="#55f70a"/><stop offset="0.260" stop-color="#b4f70a"/><stop offset="0.280" stop-color="#f7e40a"/><stop offset="0.300" stop-color="#f7b50a"/><stop offset="0.320" stop-color="#f7d00a"/><stop offset="0.340" stop-color="#f7980a"/><stop offset="0.360" stop-color="#f77d0a"/><stop offset="0.380" stop-color="#f7a90a"/><stop offset="0.400" stop-color="#f7c50a"/><stop offset="0.420" stop-color="#f7900a"/><stop offset="0.440" stop-color="#f7800a"/><stop offset="0.460" stop-color="#f7b40a"/><stop offset="0.480" stop-color="#f7d50a"/><stop offset="0.500" stop-color="#f7a40a"/><stop offset="0.520" stop-color="#f77f0a"/><stop offset="0.540" stop-color="#f7b40a"/><stop offset="0.560" stop-color="#eaf70a"/><stop offset="0.580" stop-color="#f7ba0a"/><stop offset="0.600" stop-color="#f7850a"/><stop offset="0.620" stop-color="#f7da0a"/><stop offset="0.640" stop-color="#b3f70a"/><stop offset="0.660" stop-color="#f7eb0a"/><stop offset="0.680" stop-color="#f7890a"/><stop offset="0.700" stop-color="#f7bd0a"/><stop offset="0.720" stop-color="#f7f30a"/><stop offset="0.740" stop-color="#f7bb0a"/><stop offset="0.760" stop-color="#f7eb0a"/><stop offset="0.780" stop-color="#a9f70a"/><stop offset="0.800" stop-color="#70f70a"/><stop offset="0.820" stop-color="#44f70a"/><stop offset="0.840" stop-color="#0af717"/><stop offset="0.860" stop-color="#0af75f"/><stop offset="0.880" stop-color="#0af7a1"/><stop offset="0.900" stop-color="#0af7cc"/><stop offset="0.920" stop-color="#0af5f7"/><stop offset="0.940" stop-color="#0acaf7"/><stop offset="0.960" stop-color="#0a98f7"/><stop offset="0.980" stop-color="#0a5ff7"/><stop offset="1.000" stop-color="#0a26f7"/></linearGradient><linearGradient id="g49" gradientUnits="userSpaceOnUse" x1="0" y1="0" x2="1000" y2="0"><stop offset="0.000" stop-color="#0a0af7"/><stop offset="0.020" stop-color="#0a0af7"/><stop offset="0.040" stop-color="#0a0af7"/><stop offset="0.060" stop-color="#0a0af7"/><stop offset="0.080" stop-color="#0a0af7"/><stop offset="0.100" stop-color="#0a0af7"/><stop offset="0.120" stop-color="#0a0af7"/><stop offset="0.140" stop-color="#0a0af7"/><stop offset="0.160" stop-color="#0a72f7"/><stop offset="0.180" stop-color="#0aa8f7"/><stop offset="0.200" stop-color="#0af7d8"/><stop offset="0.220" stop-color="#0af71d"/><stop offset="0.240" stop-color="#5ef70a"/><stop offset="0.260" stop-color="#bdf70a"/><stop offset="0.280" stop-color="#f7de0a"/><stop offset="0.300" stop-color="#f7b30a"/><stop offset="0.320" stop-color="#f7ce0a"/><stop offset="0.340" stop-color="#f7960a"/><stop offset="0.360" stop-color="#f77c0a"/><stop offset="0.380" stop-color="#f7a70a"/><stop offset="0.400" stop-color="#f7c30a"/><stop offset="0.420" stop-color="#f78f0a"/><stop offset="0.440" stop-color="#f77f0a"/><stop offset="0.460" stop-color="#f7b20a"/><stop offset="0.480" stop-color="#f7d20a"/><stop offset="0.500" stop-color="#f7a20a"/><stop offset="0.520" stop-color="#f77e0a"/><stop offset="0.540" stop-color="#f7b30a"/><stop offset="0.560" stop-color="#ebf70a"/><stop offset="0.580" stop-color="#f7ba0a"/><stop offset="0.600" stop-color="#f7850a"/><stop offset="0.620" stop-color="#f7da0a"/><stop offset="0.640" stop-color="#b3f70a"/><stop offset="0.660" stop-color="#f7eb0a"/><stop offset="0.680" stop-color="#f7890a"/><stop offset="0.700" stop-color="#f7bd0a"/><stop offset="0.720" stop-color="#f7f30a"/><stop offset="0.740" stop-color="#f7bb0a"/><stop offset="0.760" stop-color="#f7eb0a"/><stop offset="0.780" stop-color="#a9f70a"/><stop offset="0.800" stop-color="#70f70a"/><stop offset="0.820" stop-color="#44f70a"/><stop offset="0.840" stop-color="#0af716"/><stop offset="0.860" stop-color="#0af75e"/><stop offset="0.880" stop-color="#0af7a0"/><stop offset="0.900" stop-color="#0af7cc"/><stop offset="0.920" stop-color="#0af6f7"/><stop offset="0.940" stop-color="#0acbf7"/><stop offset="0.960" stop-color="#0a99f7"/><stop offset="0.980" stop-color="#0a5ff7"/><stop offset="1.000" stop-color="#0a26f7"/></linearGradient><linearGradient id="g50" gradientUnits="userSpaceOnUse" x1="0" y1="0" x2="1000" y2="0"><stop offset="0.000" stop-color="#0a0af7"/><stop offset="0.020" stop-color="#0a0af7"/><stop offset="0.040" stop-color="#0a0af7"/><stop offset="0.060" stop-color="#0a0af7"/><stop offset="0.080" stop-color="#0a0af7"/><stop offset="0.100" stop-color="#0a0af7"/><stop offset="0.120" stop-color="#0a0af7"/><stop offset="0.140" stop-color="#0a0af7"/><stop offset="0.160" stop-color="#0a7af7"/><stop offset="0.180" stop-color="#0aaff7"/><stop offset="0.200" stop-color="#0af7c2"/><stop offset="0.220" stop-color="#0af70c"/><stop offset="0.240" stop-color="#67f70a"/><stop offset="0.260" stop-color="#c6f70a"/><stop offset="0.280" stop-color="#f7d80a"/><stop offset="0.300" stop-color="#f7b10a"/><stop offset="0.320" stop-color="#f7cc0a"/><stop offset="0.340" stop-color="#f7940a"/><stop offset="0.360" stop-color="#f77a0a"/><stop offset="0.380" stop-color="#f7a40a"/><stop offset="0.400" stop-color="#f7c10a"/><stop offset="0.420" stop-color="#f78c0a"/><stop offset="0.440" stop-color="#f77d0a"/><stop offset="0.460" stop-color="#f7af0a"/><stop offset="0.480" stop-color="#f7d00a"/><stop offset="0.500" stop-color="#f7a00a"/><stop offset="0.520" stop-color="#f77d0a"/><stop offset="0.540" stop-color="#f7b20a"/><stop offset="0.560" stop-color="#ecf70a"/><stop offset="0.580" stop-color="#f7b90a"/><stop offset="0.600" stop-color="#f7850a"/><stop offset="0.620" stop-color="#f7da0a"/><stop offset="0.640" stop-color="#b3f70a"/><stop offset="0.660" stop-color="#f7eb0a"/><stop offset="0.680" stop-color="#f7890a"/><stop offset="0.700" stop-color="#f7bd0a"/><stop offset="0.720" stop-color="#f7f30a"/><stop offset="0.740" stop-color="#f7bb0a"/><stop offset="0.760" stop-color="#f7eb0a"/><stop offset="0.780" stop-color="#a9f70a"/><stop offset="0.800" stop-color="#70f70a"/><stop offset="0.820" stop-color="#45f70a"/><stop offset="0.840" stop-color="#0af716"/><stop offset="0.860" stop-color="#0af75d"/><stop offset="0.880" stop-color="#0af7a0"/><stop offset="0.900" stop-color="#0af7cb"/><stop offset="0.920" stop-color="#0af7f6"/><stop offset="0.940" stop-color="#0accf7"/><stop offset="0.960" stop-color="#0a9af7"/><stop offset="0.980" stop-color="#0a60f7"/><stop offset="1.000" stop-color="#0a26f7"/></linearGradient><linearGradient id="g51" gradientUnits="userSpaceOnUse" x1="0" y1="0" x2="1000" y2="0"><stop offset="0.000" stop-color="#0a0af7"/><stop offset="0.020" stop-color="#0a0af7"/><stop offset="0.040" stop-color="#0a0af7"/><stop offset="0.060" stop-color="#0a0af7"/><stop offset="0.080" stop-color="#0a0af7"/><stop offset="0.100" stop-color="#0a0af7"/><stop offset="0.120" stop-color="#0a0af7"/><stop offset="0.140" stop-color="#0a4ff7"/><stop offset="0.160" stop-color="#0a83f7"/><stop offset="0.180" stop-color="#0ab7f7"/><stop offset="0.200" stop-color="#0af7ad"/><stop offset="0.220" stop-color="#11f70a"/><stop offset="0.240" stop-color="#70f70a"/><stop offset="0.260" stop-color="#cff70a"/><stop offset="0.280" stop-color="#f7d20a"/><stop offset="0.300" stop-color="#f7ae0a"/><stop offset="0.320" stop-color="#f7c90a"/><stop offset="0.340" stop-color="#f7920a"/><stop offset="0.360" stop-color="#f7780a"/><stop offset="0.380" stop-color="#f7a20a"/><stop offset="0.400" stop-color="#f7be0a"/><stop offset="0.420" stop-color="#f78a0a"/><stop offset="0.440" stop-color="#f77b0a"/><stop offset="0.460" stop-color="#f7ad0a"/><stop offset="0.480" stop-color="#f7cd0a"/><stop offset="0.500" stop-color="#f79e0a"/><stop offset="0.520" stop-color="#f77c0a"/><stop offset="0.540" stop-color="#f7b00a"/><stop offset="0.560" stop-color="#eef70a"/><stop offset="0.580" stop-color="#f7b90a"/><stop offset="0.600" stop-color="#f7850a"/><stop offset="0.620" stop-color="#f7da0a"/><stop offset="0.640" stop-color="#b3f70a"/><stop offset="0.660" stop-color="#f7eb0a"/><stop offset="0.680" stop-color="#f7890a"/><stop offset="0.700" stop-color="#f7bd0a"/><stop offset="0.720" stop-color="#f7f30a"/><stop offset="0.740" stop-color="#f7bb0a"/><stop offset="0.760" stop-color="#f7eb0a"/><stop offset="0.780" stop-color="#a9f70a"/><stop offset="0.800" stop-color="#70f70a"/><stop offset="0.820" stop-color="#45f70a"/><stop offset="0.840" stop-color="#0af716"/><stop offset="0.860" stop-color="#0af75d"/><stop offset="0.880" stop-color="#0af79f"/><stop offset="0.900" stop-color="#0af7ca"/><stop offset="0.920" stop-color="#0af7f5"/><stop offset="0.940" stop-color="#0acdf7"/><stop offset="0.960" stop-color="#0a9cf7"/><stop offset="0.980" stop-color="#0a61f7"/><stop offset="1.000" stop-color="#0a26f7"/></linearGradient><linearGradient id="g52" gradientUnits="userSpaceOnUse" x1="0" y1="0" x2="1000" y2="0"><stop offset="0.000" stop-color="#0a0af7"/><stop offset="0.020" stop-color="#0a0af7"/><stop offset="0.040" stop-color="#0a0af7"/><stop offset="0.060" stop-color="#0a0af7"/><stop offset="0.080" stop-color="#0a0af7"/><stop offset="0.100" stop-color="#0a0af7"/><stop offset="0.120" stop-color="#0a0af7"/><stop offset="0.140" stop-color="#0a5bf7"/><stop offset="0.160" stop-color="#0a8df7"/><stop offset="0.180" stop-color="#0abff7"/><stop offset="0.200" stop-color="#0af797"/><stop offset="0.220" stop-color="#1af70a"/><stop offset="0.240" stop-color="#79f70a"/><stop offset="0.260" stop-color="#d8f70a"/><stop offset="0.280" stop-color="#f7cc0a"/><stop offset="0.300" stop-color="#f7ac0a"/><stop offset="0.320" stop-color="#f7c60a"/><stop offset="0.340" stop-color="#f7900a"/><stop offset="0.360" stop-color="#f7760a"/><stop offset="0.380" stop-color="#f79f0a"/><stop offset="0.400" stop-color="#f7bb0a"/><stop offset="0.420" stop-color="#f7880a"/><stop offset="0.440" stop-color="#f7790a"/><stop offset="0.460" stop-color="#f7aa0a"/><stop offset="0.480" stop-color="#f7ca0a"/><stop offset="0.500" stop-color="#f79c0a"/><stop offset="0.520" stop-color="#f77b0a"/><stop offset="0.540" stop-color="#f7af0a"/><stop offset="0.560" stop-color="#eff70a"/><stop offset="0.580" stop-color="#f7b80a"/><stop offset="0.600" stop-color="#f7850a"/><stop offset="0.620" stop-color="#f7da0a"/><stop offset="0.640" stop-color="#b3f70a"/><stop offset="0.660" stop-color="#f7eb0a"/><stop offset="0.680" stop-color="#f7890a"/><stop offset="0.700" stop-color="#f7bd0a"/><stop offset="0.720" stop-color="#f7f30a"/><stop offset="0.740" stop-color="#f7bb0a"/><stop offset="0.760" stop-color="#f7eb0a"/><stop offset="0.780" stop-color="#a9f70a"/><stop offset="0.800" stop-color="#70f70a"/><stop offset="0.820" stop-color="#45f70a"/><stop offset="0.840" stop-color="#0af715"/><stop offset="0.860" stop-color="#0af75c"/><stop offset="0.880" stop-color="#0af79f"/><stop offset="0.900" stop-color="#0af7c9"/><stop offset="0.920" stop-color="#0af7f4"/><stop offset="0.940" stop-color="#0acef7"/><stop offset="0.960" stop-color="#0a9df7"/><stop offset="0.980" stop-color="#0a61f7"/><stop offset="1.000" stop-color="#0a26f7"/></linearGradient><linearGradient id="g53" gradientUnits="userSpaceOnUse" x1="0" y1="0" x2="1000" y2="0"><stop offset="0.000" stop-color="#0a0af7"/><stop offset="0.020" stop-color="#0a0af7"/><stop offset="0.040" stop-color="#0a0af7"/><stop offset="0.060" stop-color="#0a0af7"/><stop offset="0.080" stop-color="#0a0af7"/><stop offset="0.100" stop-color="#0a0af7"/><stop offset="0.120" stop-color="#0a0af7"/><stop offset="0.140" stop-color="#0a66f7"/><stop offset="0.160" stop-color="#0a96f7"/><stop offset="0.180" stop-color="#0ac6f7"/><stop offset="0.200" stop-color="#0af782"/><stop offset="0.220" stop-color="#24f70a"/><stop offset="0.240" stop-color="#82f70a"/><stop offset="0.260" stop-color="#e1f70a"/><stop offset="0.280" stop-color="#f7c60a"/><stop offset="0.300" stop-color="#f7a90a"/><stop offset="0.320" stop-color="#f7c20a"/><stop offset="0.340" stop-color="#f78d0a"/><stop offset="0.360" stop-color="#f7740a"/><stop offset="0.380" stop-color="#f79d0a"/><stop offset="0.400" stop-color="#f7b80a"/><stop offset="0.420" stop-color="#f7860a"/><stop offset="0.440" stop-color="#f7770a"/><stop offset="0.460" stop-color="#f7a70a"/><stop offset="0.480" stop-color="#f7c70a"/><stop offset="0.500" stop-color="#f79a0a"/><stop offset="0.520" stop-color="#f7790a"/><stop offset="0.540" stop-color="#f7ad0a"/><stop offset="0.560" stop-color="#f1f70a"/><stop offset="0.580" stop-color="#f7b80a"/><stop offset="0.600" stop-color="#f7850a"/><stop offset="0.620" stop-color="#f7da0a"/><stop offset="0.640" stop-color="#b3f70a"/><stop offset="0.660" stop-color="#f7eb0a"/><stop offset="0.680" stop-color="#f7890a"/><stop offset="0.700" stop-color="#f7bd0a"/><stop offset="0.720" stop-color="#f7f30a"/><stop offset="0.740" stop-color="#f7bb0a"/><stop offset="0.760" stop-color="#f7eb0a"/><stop offset="0.780" stop-color="#a9f70a"/><stop offset="0.800" stop-color="#70f70a"/><stop offset="0.820" stop-color="#45f70a"/><stop offset="0.840" stop-color="#0af715"/><stop offset="0.860" stop-color="#0af75b"/><stop offset="0.880" stop-color="#0af79e"/><stop offset="0.900" stop-color="#0af7c9"/><stop offset="0.920" stop-color="#0af7f3"/><stop offset="0.940" stop-color="#0acff7"/><stop offset="0.960" stop-color="#0a9ef7"/><stop offset="0.980" stop-color="#0a62f7"/><stop offset="1.000" stop-color="#0a26f7"/></linearGradient><linearGradient id="g54" gradientUnits="userSpaceOnUse" x1="0" y1="0" x2="1000" y2="0"><stop offset="0.000" stop-color="#0a0af7"/><stop offset="0.020" stop-color="#0a0af7"/><stop offset="0.040" stop-color="#0a0af7"/><stop offset="0.060" stop-color="#0a0af7"/><stop offset="0.080" stop-color="#0a0af7"/><stop offset="0.100" stop-color="#0a0af7"/><stop offset="0.120" stop-color="#0a0af7"/><stop offset="0.140" stop-color="#0a70f7"/><stop offset="0.160" stop-color="#0a9ff7"/><stop offset="0.180" stop-color="#0adcf7"/><stop offset="0.200" stop-color="#0af76f"/><stop offset="0.220" stop-color="#2df70a"/><stop offset="0.240" stop-color="#8bf70a"/><stop offset="0.260" stop-color="#eaf70a"/><stop offset="0.280" stop-color="#f7c00a"/><stop offset="0.300" stop-color="#f7a60a"/><stop offset="0.320" stop-color="#f7bf0a"/><stop offset="0.340" stop-color="#f78b0a"/><stop offset="0.360" stop-color="#f7720a"/><stop offset="0.380" stop-color="#f79a0a"/><stop offset="0.400" stop-color="#f7b50a"/><stop offset="0.420" stop-color="#f7830a"/><stop offset="0.440" stop-color="#f7750a"/><stop offset="0.460" stop-color="#f7a40a"/><stop offset="0.480" stop-color="#f7c30a"/><stop offset="0.500" stop-color="#f7970a"/><stop offset="0.520" stop-color="#f7780a"/><stop offset="0.540" stop-color="#f7ac0a"/><stop offset="0.560" stop-color="#f2f70a"/><stop offset="0.580" stop-color="#f7b70a"/><stop offset="0.600" stop-color="#f7850a"/><stop offset="0.620" stop-color="#f7da0a"/><stop offset="0.640" stop-color="#b3f70a"/><stop offset="0.660" stop-color="#f7eb0a"/><stop offset="0.680" stop-color="#f7890a"/><stop offset="0.700" stop-color="#f7bd0a"/><stop offset="0.720" stop-color="#f7f30a"/><stop offset="0.740" stop-color="#f7bb0a"/><stop offset="0.760" stop-color="#f7eb0a"/><stop offset="0.780" stop-color="#a9f70a"/><stop offset="0.800" stop-color="#70f70a"/><stop offset="0.820" stop-color="#45f70a"/><stop offset="0.840" stop-color="#0af714"/><stop offset="0.860" stop-color="#0af75b"/><stop offset="0.880" stop-color="#0af79d"/><stop offset="0.900" stop-color="#0af7c8"/><stop offset="0.920" stop-color="#0af7f2"/><stop offset="0.940" stop-color="#0ad0f7"/><stop offset="0.960" stop-color="#0aa0f7"/><stop offset="0.980" stop-color="#0a63f7"/><stop offset="1.000" stop-color="#0a26f7"/></linearGradient><linearGradient id="g55" gradientUnits="userSpaceOnUse" x1="0" y1="0" x2="1000" y2="0"><stop offset="0.000" stop-color="#0a0af7"/><stop offset="0.020" stop-color="#0a0af7"/><stop offset="0.040" stop-color="#0a0af7"/><stop offset="0.060" stop-color="#0a0af7"/><stop offset="0.080" stop-color="#0a0af7"/><stop offset="0.100" stop-color="#0a0af7"/><stop offset="0.120" stop-color="#0a4cf7"/><stop offset="0.140" stop-color="#0a79f7"/><stop offset="0.160" stop-color="#0aa7f7"/><stop offset="0.180" stop-color="#0af3f7"/><stop offset="0.200" stop-color="#0af75d"/><stop offset="0.220" stop-color="#36f70a"/><stop offset="0.240" stop-color="#94f70a"/><stop offset="0.260" stop-color="#f3f70a"/><stop offset="0.280" stop-color="#f7ba0a"/><stop offset="0.300" stop-color="#f7a30a"/><stop offset="0.320" stop-color="#f7bc0a"/><stop offset="0.340" stop-color="#f7880a"/><stop offset="0.360" stop-color="#f7700a"/><stop offset="0.380" stop-color="#f7970a"/><stop offset="0.400" stop-color="#f7b10a"/><stop offset="0.420" stop-color="#f7810a"/><stop offset="0.440" stop-color="#f7720a"/><stop offset="0.460" stop-color="#f7a10a"/><stop offset="0.480" stop-color="#f7c00a"/><stop offset="0.500" stop-color="#f7950a"/><stop offset="0.520" stop-color="#f7770a"/><stop offset="0.540" stop-color="#f7aa0a"/><stop offset="0.560" stop-color="#f4f70a"/><stop offset="0.580" stop-color="#f7b70a"/><stop offset="0.600" stop-color="#f7850a"/><stop offset="0.620" stop-color="#f7da0a"/><stop offset="0.640" stop-color="#b3f70a"/><stop offset="0.660" stop-color="#f7eb0a"/><stop offset="0.680" stop-color="#f7890a"/><stop offset="0.700" stop-color="#f7bd0a"/><stop offset="0.720" stop-color="#f7f30a"/><stop offset="0.740" stop-color="#f7bb0a"/><stop offset="0.760" stop-color="#f7eb0a"/><stop offset="0.780" stop-color="#a9f70a"/><stop offset="0.800" stop-color="#70f70a"/><stop offset="0.820" stop-color="#45f70a"/><stop offset="0.840" stop-color="#0af714"/><stop offset="0.860" stop-color="#0af75a"/><stop offset="0.880" stop-color="#0af79d"/><stop offset="0.900" stop-color="#0af7c7"/><stop offset="0.920" stop-color="#0af7f1"/><stop offset="0.940" stop-color="#0ad1f7"/><stop offset="0.960" stop-color="#0aa1f7"/><stop offset="0.980" stop-color="#0a63f7"/><stop offset="1.000" stop-color="#0a26f7"/></linearGradient><linearGradient id="g56" gradientUnits="userSpaceOnUse" x1="0" y1="0" x2="1000" y2="0"><stop offset="0.000" stop-color="#0a0af7"/><stop offset="0.020" stop-color="#0a0af7"/><stop offset="0.040" stop-color="#0a0af7"/><stop offset="0.060" stop-color="#0a0af7"/><stop offset="0.080" stop-color="#0a0af7"/><stop offset="0.100" stop-color="#0a0af7"/><stop offset="0.120" stop-color="#0a56f7"/><stop offset="0.140" stop-color="#0a82f7"/><stop offset="0.160" stop-color="#0aaef7"/><stop offset="0.180" stop-color="#0af7e4"/><stop offset="0.200" stop-color="#0af74c"/><stop offset="0.220" stop-color="#3ff70a"/><stop offset="0.240" stop-color="#9df70a"/><stop offset="0.260" stop-color="#f7f30a"/><stop offset="0.280" stop-color="#f7b30a"/><stop offset="0.300" stop-color="#f7a00a"/><stop offset="0.320" stop-color="#f7b80a"/><stop offset="0.340" stop-color="#f7860a"/><stop offset="0.360" stop-color="#f76e0a"/><stop offset="0.380" stop-color="#f7940a"/><stop offset="0.400" stop-color="#f7ae0a"/><stop offset="0.420" stop-color="#f77f0a"/><stop offset="0.440" stop-color="#f7700a"/><stop offset="0.460" stop-color="#f79e0a"/><stop offset="0.480" stop-color="#f7bc0a"/><stop offset="0.500" stop-color="#f7930a"/><stop offset="0.520" stop-color="#f7760a"/><stop offset="0.540" stop-color="#f7a80a"/><stop offset="0.560" stop-color="#f6f70a"/><stop offset="0.580" stop-color="#f7b60a"/><stop offset="0.600" stop-color="#f7850a"/><stop offset="0.620" stop-color="#f7da0a"/><stop offset="0.640" stop-color="#b3f70a"/><stop offset="0.660" stop-color="#f7eb0a"/><stop offset="0.680" stop-color="#f7890a"/><stop offset="0.700" stop-color="#f7bd0a"/><stop offset="0.720" stop-color="#f7f30a"/><stop offset="0.740" stop-color="#f7b90a"/><stop offset="0.760" stop-color="#f7e80a"/><stop offset="0.780" stop-color="#aaf70a"/><stop offset="0.800" stop-color="#71f70a"/><stop offset="0.820" stop-color="#45f70a"/><stop offset="0.840" stop-color="#0af714"/><stop offset="0.860" stop-color="#0af759"/><stop offset="0.880" stop-color="#0af79c"/><stop offset="0.900" stop-color="#0af7c7"/><stop offset="0.920" stop-color="#0af7f2"/><stop offset="0.940" stop-color="#0ad0f7"/><stop offset="0.960" stop-color="#0aa0f7"/><stop offset="0.980" stop-color="#0a63f7"/><stop offset="1.000" stop-color="#0a26f7"/></linearGradient><linearGradient id="g57" gradientUnits="userSpaceOnUse" x1="0" y1="0" x2="1000" y2="0"><stop offset="0.000" stop-color="#0a0af7"/><stop offset="0.020" stop-color="#0a0af7"/><stop offset="0.040" stop-color="#0a0af7"/><stop offset="0.060" stop-color="#0a0af7"/><stop offset="0.080" stop-color="#0a0af7"/><stop offset="0.100" stop-color="#0a0af7"/><stop offset="0.120" stop-color="#0a60f7"/><stop offset="0.140" stop-color="#0a8bf7"/><stop offset="0.160" stop-color="#0ab5f7"/><stop offset="0.180" stop-color="#0af7d0"/><stop offset="0.200" stop-color="#0af73c"/><stop offset="0.220" stop-color="#48f70a"/><stop offset="0.240" stop-color="#a6f70a"/><stop offset="0.260" stop-color="#f7ed0a"/><stop offset="0.280" stop-color="#f7ad0a"/><stop offset="0.300" stop-color="#f79d0a"/><stop offset="0.320" stop-color="#f7b50a"/><stop offset="0.340" stop-color="#f7830a"/><stop offset="0.360" stop-color="#f76c0a"/><stop offset="0.380" stop-color="#f7910a"/><stop offset="0.400" stop-color="#f7aa0a"/><stop offset="0.420" stop-color="#f77c0a"/><stop offset="0.440" stop-color="#f76e0a"/><stop offset="0.460" stop-color="#f79b0a"/><stop offset="0.480" stop-color="#f7b90a"/><stop offset="0.500" stop-color="#f7900a"/><stop offset="0.520" stop-color="#f7740a"/><stop offset="0.540" stop-color="#f7a70a"/><stop offset="0.560" stop-color="#f7f60a"/><stop offset="0.580" stop-color="#f7b60a"/><stop offset="0.600" stop-color="#f7850a"/><stop offset="0.620" stop-color="#f7da0a"/><stop offset="0.640" stop-color="#b3f70a"/><stop offset="0.660" stop-color="#f7eb0a"/><stop offset="0.680" stop-color="#f7890a"/><stop offset="0.700" stop-color="#f7bc0a"/><stop offset="0.720" stop-color="#f7f10a"/><stop offset="0.740" stop-color="#f7b30a"/><stop offset="0.760" stop-color="#f7e30a"/><stop offset="0.780" stop-color="#aff70a"/><stop offset="0.800" stop-color="#77f70a"/><stop offset="0.820" stop-color="#45f70a"/><stop offset="0.840" stop-color="#0af713"/><stop offset="0.860" stop-color="#0af759"/><stop offset="0.880" stop-color="#0af79c"/><stop offset="0.900" stop-color="#0af7c8"/><stop offset="0.920" stop-color="#0af7f3"/><stop offset="0.940" stop-color="#0acef7"/><stop offset="0.960" stop-color="#0a9cf7"/><stop offset="0.980" stop-color="#0a61f7"/><stop offset="1.000" stop-color="#0a26f7"/></linearGradient><linearGradient id="g58" gradientUnits="userSpaceOnUse" x1="0" y1="0" x2="1000" y2="0"><stop offset="0.000" stop-color="#0a0af7"/><stop offset="0.020" stop-color="#0a0af7"/><stop offset="0.040" stop-color="#0a0af7"/><stop offset="0.060" stop-color="#0a0af7"/><stop offset="0.080" stop-color="#0a0af7"/><stop offset="0.100" stop-color="#0a0af7"/><stop offset="0.120" stop-color="#0a69f7"/><stop offset="0.140" stop-color="#0a93f7"/><stop offset="0.160" stop-color="#0abcf7"/><stop offset="0.180" stop-color="#0af7bd"/><stop offset="0.200" stop-color="#0af72d"/><stop offset="0.220" stop-color="#51f70a"/><stop offset="0.240" stop-color="#b0f70a"/><stop offset="0.260" stop-color="#f7e70a"/><stop offset="0.280" stop-color="#f7a70a"/><stop offset="0.300" stop-color="#f79a0a"/><stop offset="0.320" stop-color="#f7b10a"/><stop offset="0.340" stop-color="#f7810a"/><stop offset="0.360" stop-color="#f76a0a"/><stop offset="0.380" stop-color="#f78f0a"/><stop offset="0.400" stop-color="#f7a70a"/><stop offset="0.420" stop-color="#f77a0a"/><stop offset="0.440" stop-color="#f76c0a"/><stop offset="0.460" stop-color="#f7980a"/><stop offset="0.480" stop-color="#f7b50a"/><stop offset="0.500" stop-color="#f78e0a"/><stop offset="0.520" stop-color="#f7730a"/><stop offset="0.540" stop-color="#f7a50a"/><stop offset="0.560" stop-color="#f7f40a"/><stop offset="0.580" stop-color="#f7b50a"/><stop offset="0.600" stop-color="#f7850a"/><stop offset="0.620" stop-color="#f7da0a"/><stop offset="0.640" stop-color="#b3f70a"/><stop offset="0.660" stop-color="#f7eb0a"/><stop offset="0.680" stop-color="#f7890a"/><stop offset="0.700" stop-color="#f7bb0a"/><stop offset="0.720" stop-color="#f7ed0a"/><stop offset="0.740" stop-color="#f7ae0a"/><stop offset="0.760" stop-color="#f7de0a"/><stop offset="0.780" stop-color="#b8f70a"/><stop offset="0.800" stop-color="#82f70a"/><stop offset="0.820" stop-color="#46f70a"/><stop offset="0.840" stop-color="#0af713"/><stop offset="0.860" stop-color="#0af758"/><stop offset="0.880" stop-color="#0af79b"/><stop offset="0.900" stop-color="#0af7c8"/><stop offset="0.920" stop-color="#0af7f5"/><stop offset="0.940" stop-color="#0acbf7"/><stop offset="0.960" stop-color="#0a98f7"/><stop offset="0.980" stop-color="#0a5ff7"/><stop offset="1.000" stop-color="#0a26f7"/></linearGradient><linearGradient id="g59" gradientUnits="userSpaceOnUse" x1="0" y1="0" x2="1000" y2="0"><stop offset="0.000" stop-color="#0a0af7"/><stop offset="0.020" stop-color="#0a0af7"/><stop offset="0.040" stop-color="#0a0af7"/><stop offset="0.060" stop-color="#0a0af7"/><stop offset="0.080" stop-color="#0a0af7"/><stop offset="0.100" stop-color="#0a0af7"/><stop offset="0.120" stop-color="#0a72f7"/><stop offset="0.140" stop-color="#0a9af7"/><stop offset="0.160" stop-color="#0ac3f7"/><stop offset="0.180" stop-color="#0af7aa"/><stop offset="0.200" stop-color="#0af71f"/><stop offset="0.220" stop-color="#5af70a"/><stop offset="0.240" stop-color="#b9f70a"/><stop offset="0.260" stop-color="#f7e10a"/><stop offset="0.280" stop-color="#f7a10a"/><stop offset="0.300" stop-color="#f7970a"/><stop offset="0.320" stop-color="#f7ad0a"/><stop offset="0.340" stop-color="#f77e0a"/><stop offset="0.360" stop-color="#f7680a"/><stop offset="0.380" stop-color="#f78c0a"/><stop offset="0.400" stop-color="#f7a40a"/><stop offset="0.420" stop-color="#f7780a"/><stop offset="0.440" stop-color="#f76b0a"/><stop offset="0.460" stop-color="#f7950a"/><stop offset="0.480" stop-color="#f7b10a"/><stop offset="0.500" stop-color="#f78b0a"/><stop offset="0.520" stop-color="#f7720a"/><stop offset="0.540" stop-color="#f7a30a"/><stop offset="0.560" stop-color="#f7f20a"/><stop offset="0.580" stop-color="#f7b50a"/><stop offset="0.600" stop-color="#f7840a"/><stop offset="0.620" stop-color="#f7da0a"/><stop offset="0.640" stop-color="#b3f70a"/><stop offset="0.660" stop-color="#f7eb0a"/><stop offset="0.680" stop-color="#f7890a"/><stop offset="0.700" stop-color="#f7ba0a"/><stop offset="0.720" stop-color="#f7e80a"/><stop offset="0.740" stop-color="#f7a90a"/><stop offset="0.760" stop-color="#f7d90a"/><stop offset="0.780" stop-color="#c4f70a"/><stop offset="0.800" stop-color="#8ef70a"/><stop offset="0.820" stop-color="#46f70a"/><stop offset="0.840" stop-color="#0af712"/><stop offset="0.860" stop-color="#0af757"/><stop offset="0.880" stop-color="#0af79b"/><stop offset="0.900" stop-color="#0af7c9"/><stop offset="0.920" stop-color="#0af6f7"/><stop offset="0.940" stop-color="#0ac8f7"/><stop offset="0.960" stop-color="#0a95f7"/><stop offset="0.980" stop-color="#0a5df7"/><stop offset="1.000" stop-color="#0a26f7"/></linearGradient><linearGradient id="g60" gradientUnits="userSpaceOnUse" x1="0" y1="0" x2="1000" y2="0"><stop offset="0.000" stop-color="#0a0af7"/><stop offset="0.020" stop-color="#0a0af7"/><stop offset="0.040" stop-color="#0a0af7"/><stop offset="0.060" stop-color="#0a0af7"/><stop offset="0.080" stop-color="#0a0af7"/><stop offset="0.100" stop-color="#0a53f7"/><stop offset="0.120" stop-color="#0a7af7"/><stop offset="0.140" stop-color="#0aa1f7"/><stop offset="0.160" stop-color="#0accf7"/><stop offset="0.180" stop-color="#0af799"/><stop offset="0.200" stop-color="#0af711"/><stop offset="0.220" stop-color="#63f70a"/><stop offset="0.240" stop-color="#c2f70a"/><stop offset="0.260" stop-color="#f7db0a"/><stop offset="0.280" stop-color="#f79b0a"/><stop offset="0.300" stop-color="#f7950a"/><stop offset="0.320" stop-color="#f7aa0a"/><stop offset="0.340" stop-color="#f77c0a"/><stop offset="0.360" stop-color="#f7660a"/><stop offset="0.380" stop-color="#f7890a"/><stop offset="0.400" stop-color="#f7a00a"/><stop offset="0.420" stop-color="#f7760a"/><stop offset="0.440" stop-color="#f7690a"/><stop offset="0.460" stop-color="#f7930a"/><stop offset="0.480" stop-color="#f7ae0a"/><stop offset="0.500" stop-color="#f7890a"/><stop offset="0.520" stop-color="#f7710a"/><stop offset="0.540" stop-color="#f7a20a"/><stop offset="0.560" stop-color="#f7f00a"/><stop offset="0.580" stop-color="#f7b40a"/><stop offset="0.600" stop-color="#f7840a"/><stop offset="0.620" stop-color="#f7da0a"/><stop offset="0.640" stop-color="#b4f70a"/><stop offset="0.660" stop-color="#f7eb0a"/><stop offset="0.680" stop-color="#f7890a"/><stop offset="0.700" stop-color="#f7b80a"/><stop offset="0.720" stop-color="#f7e20a"/><stop offset="0.740" stop-color="#f7a40a"/><stop offset="0.760" stop-color="#f7d30a"/><stop offset="0.780" stop-color="#d3f70a"/><stop offset="0.800" stop-color="#91f70a"/><stop offset="0.820" stop-color="#46f70a"/><stop offset="0.840" stop-color="#0af712"/><stop offset="0.860" stop-color="#0af757"/><stop offset="0.880" stop-color="#0af79a"/><stop offset="0.900" stop-color="#0af7c9"/><stop offset="0.920" stop-color="#0af4f7"/><stop offset="0.940" stop-color="#0ac5f7"/><stop offset="0.960" stop-color="#0a92f7"/><stop offset="0.980" stop-color="#0a5cf7"/><stop offset="1.000" stop-color="#0a26f7"/></linearGradient><linearGradient id="g61" gradientUnits="userSpaceOnUse" x1="0" y1="0" x2="1000" y2="0"><stop offset="0.000" stop-color="#0a0af7"/><stop offset="0.020" stop-color="#0a0af7"/><stop offset="0.040" stop-color="#0a0af7"/><stop offset="0.060" stop-color="#0a0af7"/><stop offset="0.080" stop-color="#0a0af7"/><stop offset="0.100" stop-color="#0a5cf7"/><stop offset="0.120" stop-color="#0a82f7"/><stop offset="0.140" stop-color="#0aa8f7"/><stop offset="0.160" stop-color="#0ae0f7"/><stop offset="0.180" stop-color="#0af789"/><stop offset="0.200" stop-color="#0df70a"/><stop offset="0.220" stop-color="#6cf70a"/><stop offset="0.240" stop-color="#cbf70a"/><stop offset="0.260" stop-color="#f7d50a"/><stop offset="0.280" stop-color="#f7950a"/><stop offset="0.300" stop-color="#f7920a"/><stop offset="0.320" stop-color="#f7a70a"/><stop offset="0.340" stop-color="#f77a0a"/><stop offset="0.360" stop-color="#f7650a"/><stop offset="0.380" stop-color="#f7860a"/><stop offset="0.400" stop-color="#f79d0a"/><stop offset="0.420" stop-color="#f7740a"/><stop offset="0.440" stop-color="#f7670a"/><stop offset="0.460" stop-color="#f7900a"/><stop offset="0.480" stop-color="#f7aa0a"/><stop offset="0.500" stop-color="#f7870a"/><stop offset="0.520" stop-color="#f7700a"/><stop offset="0.540" stop-color="#f7a00a"/><stop offset="0.560" stop-color="#f7ef0a"/><stop offset="0.580" stop-color="#f7b40a"/><stop offset="0.600" stop-color="#f7840a"/><stop offset="0.620" stop-color="#f7da0a"/><stop offset="0.640" stop-color="#b4f70a"/><stop offset="0.660" stop-color="#f7eb0a"/><stop offset="0.680" stop-color="#f7880a"/><stop offset="0.700" stop-color="#f7b60a"/><stop offset="0.720" stop-color="#f7db0a"/><stop offset="0.740" stop-color="#f79f0a"/><stop offset="0.760" stop-color="#f7ce0a"/><stop offset="0.780" stop-color="#e5f70a"/><stop offset="0.800" stop-color="#93f70a"/><stop offset="0.820" stop-color="#46f70a"/><stop offset="0.840" stop-color="#0af712"/><stop offset="0.860" stop-color="#0af756"/><stop offset="0.880" stop-color="#0af79a"/><stop offset="0.900" stop-color="#0af7ca"/><stop offset="0.920" stop-color="#0af2f7"/><stop offset="0.940" stop-color="#0ac2f7"/><stop offset="0.960" stop-color="#0a8ff7"/><stop offset="0.980" stop-color="#0a5af7"/><stop offset="1.000" stop-color="#0a26f7"/></linearGradient><linearGradient id="g62" gradientUnits="userSpaceOnUse" x1="0" y1="0" x2="1000" y2="0"><stop offset="0.000" stop-color="#0a0af7"/><stop offset="0.020" stop-color="#0a0af7"/><stop offset="0.040" stop-color="#0a0af7"/><stop offset="0.060" stop-color="#0a0af7"/><stop offset="0.080" stop-color="#0a0af7"/><stop offset="0.100" stop-color="#0a64f7"/><stop offset="0.120" stop-color="#0a8af7"/><stop offset="0.140" stop-color="#0aaff7"/><stop offset="0.160" stop-color="#0af6f7"/><stop offset="0.180" stop-color="#0af776"/><stop offset="0.200" stop-color="#19f70a"/><stop offset="0.220" stop-color="#78f70a"/><stop offset="0.240" stop-color="#d7f70a"/><stop offset="0.260" stop-color="#f7cc0a"/><stop offset="0.280" stop-color="#f78d0a"/><stop offset="0.300" stop-color="#f78f0a"/><stop offset="0.320" stop-color="#f7a30a"/><stop offset="0.340" stop-color="#f7780a"/><stop offset="0.360" stop-color="#f7630a"/><stop offset="0.380" stop-color="#f7840a"/><stop offset="0.400" stop-color="#f79a0a"/><stop offset="0.420" stop-color="#f7720a"/><stop offset="0.440" stop-color="#f7660a"/><stop offset="0.460" stop-color="#f78d0a"/><stop offset="0.480" stop-color="#f7a70a"/><stop offset="0.500" stop-color="#f7850a"/><stop offset="0.520" stop-color="#f76f0a"/><stop offset="0.540" stop-color="#f79f0a"/><stop offset="0.560" stop-color="#f7ed0a"/><stop offset="0.580" stop-color="#f7b30a"/><stop offset="0.600" stop-color="#f7840a"/><stop offset="0.620" stop-color="#f7d90a"/><stop offset="0.640" stop-color="#b4f70a"/><stop offset="0.660" stop-color="#f7eb0a"/><stop offset="0.680" stop-color="#f7880a"/><stop offset="0.700" stop-color="#f7b40a"/><stop offset="0.720" stop-color="#f7d40a"/><stop offset="0.740" stop-color="#f79a0a"/><stop offset="0.760" stop-color="#f7c90a"/><stop offset="0.780" stop-color="#f3f70a"/><stop offset="0.800" stop-color="#97f70a"/><stop offset="0.820" stop-color="#47f70a"/><stop offset="0.840" stop-color="#0af711"/><stop offset="0.860" stop-color="#0af755"/><stop offset="0.880" stop-color="#0af799"/><stop offset="0.900" stop-color="#0af7cb"/><stop offset="0.920" stop-color="#0af0f7"/><stop offset="0.940" stop-color="#0abff7"/><stop offset="0.960" stop-color="#0a8cf7"/><stop offset="0.980" stop-color="#0a59f7"/><stop offset="1.000" stop-color="#0a26f7"/></linearGradient><linearGradient id="g63" gradientUnits="userSpaceOnUse" x1="0" y1="0" x2="1000" y2="0"><stop offset="0.000" stop-color="#0a0af7"/><stop offset="0.020" stop-color="#0a0af7"/><stop offset="0.040" stop-color="#0a0af7"/><stop offset="0.060" stop-color="#0a0af7"/><stop offset="0.080" stop-color="#0a0af7"/><stop offset="0.100" stop-color="#0a6df7"/><stop offset="0.120" stop-color="#0a92f7"/><stop offset="0.140" stop-color="#0ab7f7"/><stop offset="0.160" stop-color="#0af7dc"/><stop offset="0.180" stop-color="#0af75c"/><stop offset="0.200" stop-color="#2cf70a"/><stop offset="0.220" stop-color="#8bf70a"/><stop offset="0.240" stop-color="#e9f70a"/><stop offset="0.260" stop-color="#f7c00a"/><stop offset="0.280" stop-color="#f7810a"/><stop offset="0.300" stop-color="#f78d0a"/><stop offset="0.320" stop-color="#f7a00a"/><stop offset="0.340" stop-color="#f7760a"/><stop offset="0.360" stop-color="#f7620a"/><stop offset="0.380" stop-color="#f7820a"/><stop offset="0.400" stop-color="#f7970a"/><stop offset="0.420" stop-color="#f7700a"/><stop offset="0.440" stop-color="#f7640a"/><stop offset="0.460" stop-color="#f78b0a"/><stop offset="0.480" stop-color="#f7a40a"/><stop offset="0.500" stop-color="#f7830a"/><stop offset="0.520" stop-color="#f76e0a"/><stop offset="0.540" stop-color="#f79d0a"/><stop offset="0.560" stop-color="#f7eb0a"/><stop offset="0.580" stop-color="#f7b10a"/><stop offset="0.600" stop-color="#f7820a"/><stop offset="0.620" stop-color="#f7d80a"/><stop offset="0.640" stop-color="#b4f70a"/><stop offset="0.660" stop-color="#f7ea0a"/><stop offset="0.680" stop-color="#f7880a"/><stop offset="0.700" stop-color="#f7b20a"/><stop offset="0.720" stop-color="#f7cb0a"/><stop offset="0.740" stop-color="#f7940a"/><stop offset="0.760" stop-color="#f7c40a"/><stop offset="0.780" stop-color="#f7f30a"/><stop offset="0.800" stop-color="#a4f70a"/><stop offset="0.820" stop-color="#51f70a"/><stop offset="0.840" stop-color="#0af70a"/><stop offset="0.860" stop-color="#0af751"/><stop offset="0.880" stop-color="#0af799"/><stop offset="0.900" stop-color="#0af7cc"/><stop offset="0.920" stop-color="#0aeef7"/><stop offset="0.940" stop-color="#0abbf7"/><stop offset="0.960" stop-color="#0a89f7"/><stop offset="0.980" stop-color="#0a58f7"/><stop offset="1.000" stop-color="#0a26f7"/></linearGradient><linearGradient id="g64" gradientUnits="userSpaceOnUse" x1="0" y1="0" x2="1000" y2="0"><stop offset="0.000" stop-color="#0a0af7"/><stop offset="0.020" stop-color="#0a0af7"/><stop offset="0.040" stop-color="#0a0af7"/><stop offset="0.060" stop-color="#0a0af7"/><stop offset="0.080" stop-color="#0a4ef7"/><stop offset="0.100" stop-color="#0a74f7"/><stop offset="0.120" stop-color="#0a99f7"/><stop offset="0.140" stop-color="#0abef7"/><stop offset="0.160" stop-color="#0af7c4"/><stop offset="0.180" stop-color="#0af743"/><stop offset="0.200" stop-color="#3ef70a"/><stop offset="0.220" stop-color="#9df70a"/><stop offset="0.240" stop-color="#f7f30a"/><stop offset="0.260" stop-color="#f7b40a"/><stop offset="0.280" stop-color="#f7740a"/><stop offset="0.300" stop-color="#f78b0a"/><stop offset="0.320" stop-color="#f79e0a"/><stop offset="0.340" stop-color="#f7740a"/><stop offset="0.360" stop-color="#f7610a"/><stop offset="0.380" stop-color="#f7800a"/><stop offset="0.400" stop-color="#f7940a"/><stop offset="0.420" stop-color="#f76f0a"/><stop offset="0.440" stop-color="#f7630a"/><stop offset="0.460" stop-color="#f7880a"/><stop offset="0.480" stop-color="#f7a10a"/><stop offset="0.500" stop-color="#f7810a"/><stop offset="0.520" stop-color="#f76d0a"/><stop offset="0.540" stop-color="#f79b0a"/><stop offset="0.560" stop-color="#f7e80a"/><stop offset="0.580" stop-color="#f7af0a"/><stop offset="0.600" stop-color="#f7800a"/><stop offset="0.620" stop-color="#f7d70a"/><stop offset="0.640" stop-color="#b6f70a"/><stop offset="0.660" stop-color="#f7ea0a"/><stop offset="0.680" stop-color="#f7880a"/><stop offset="0.700" stop-color="#f7af0a"/><stop offset="0.720" stop-color="#f7c30a"/><stop offset="0.740" stop-color="#f78f0a"/><stop offset="0.760" stop-color="#f7bf0a"/><stop offset="0.780" stop-color="#f7ee0a"/><stop offset="0.800" stop-color="#b0f70a"/><stop offset="0.820" stop-color="#5bf70a"/><stop offset="0.840" stop-color="#11f70a"/><stop offset="0.860" stop-color="#0af74d"/><stop offset="0.880" stop-color="#0af798"/><stop offset="0.900" stop-color="#0af7cc"/><stop offset="0.920" stop-color="#0aecf7"/><stop offset="0.940" stop-color="#0ab7f7"/><stop offset="0.960" stop-color="#0a85f7"/><stop offset="0.980" stop-color="#0a53f7"/><stop offset="1.000" stop-color="#0a26f7"/></linearGradient><linearGradient id="g65" gradientUnits="userSpaceOnUse" x1="0" y1="0" x2="1000" y2="0"><stop offset="0.000" stop-color="#0a0af7"/><stop offset="0.020" stop-color="#0a0af7"/><stop offset="0.040" stop-color="#0a0af7"/><stop offset="0.060" stop-color="#0a0af7"/><stop offset="0.080" stop-color="#0a53f7"/><stop offset="0.100" stop-color="#0a79f7"/><stop offset="0.120" stop-color="#0a9ff7"/><stop offset="0.140" stop-color="#0ac4f7"/><stop offset="0.160" stop-color="#0af7ad"/><stop offset="0.180" stop-color="#0af72a"/><stop offset="0.200" stop-color="#51f70a"/><stop offset="0.220" stop-color="#b0f70a"/><stop offset="0.240" stop-color="#f7e60a"/><stop offset="0.260" stop-color="#f7a70a"/><stop offset="0.280" stop-color="#f7680a"/><stop offset="0.300" stop-color="#f7890a"/><stop offset="0.320" stop-color="#f79b0a"/><stop offset="0.340" stop-color="#f7730a"/><stop offset="0.360" stop-color="#f7600a"/><stop offset="0.380" stop-color="#f77e0a"/><stop offset="0.400" stop-color="#f7920a"/><stop offset="0.420" stop-color="#f76d0a"/><stop offset="0.440" stop-color="#f7620a"/><stop offset="0.460" stop-color="#f7860a"/><stop offset="0.480" stop-color="#f79e0a"/><stop offset="0.500" stop-color="#f77f0a"/><stop offset="0.520" stop-color="#f76c0a"/><stop offset="0.540" stop-color="#f7980a"/><stop offset="0.560" stop-color="#f7e40a"/><stop offset="0.580" stop-color="#f7ab0a"/><stop offset="0.600" stop-color="#f77d0a"/><stop offset="0.620" stop-color="#f7d40a"/><stop offset="0.640" stop-color="#b8f70a"/><stop offset="0.660" stop-color="#f7e90a"/><stop offset="0.680" stop-color="#f7870a"/><stop offset="0.700" stop-color="#f7ad0a"/><stop offset="0.720" stop-color="#f7bb0a"/><stop offset="0.740" stop-color="#f78a0a"/><stop offset="0.760" stop-color="#f7b90a"/><stop offset="0.780" stop-color="#f7e90a"/><stop offset="0.800" stop-color="#bbf70a"/><stop offset="0.820" stop-color="#67f70a"/><stop offset="0.840" stop-color="#1af70a"/><stop offset="0.860" stop-color="#0af747"/><stop offset="0.880" stop-color="#0af794"/><stop offset="0.900" stop-color="#0af7cc"/><stop offset="0.920" stop-color="#0aeaf7"/><stop offset="0.940" stop-color="#0ab3f7"/><stop offset="0.960" stop-color="#0a7ff7"/><stop offset="0.980" stop-color="#0a4bf7"/><stop offset="1.000" stop-color="#0a25f7"/></linearGradient><linearGradient id="g66" gradientUnits="userSpaceOnUse" x1="0" y1="0" x2="1000" y2="0"><stop offset="0.000" stop-color="#0a0af7"/><stop offset="0.020" stop-color="#0a0af7"/><stop offset="0.040" stop-color="#0a0af7"/><stop offset="0.060" stop-color="#0a0af7"/><stop offset="0.080" stop-color="#0a58f7"/><stop offset="0.100" stop-color="#0a7ef7"/><stop offset="0.120" stop-color="#0aa4f7"/><stop offset="0.140" stop-color="#0ad4f7"/><stop offset="0.160" stop-color="#0af795"/><stop offset="0.180" stop-color="#0af710"/><stop offset="0.200" stop-color="#64f70a"/><stop offset="0.220" stop-color="#c2f70a"/><stop offset="0.240" stop-color="#f7da0a"/><stop offset="0.260" stop-color="#f79b0a"/><stop offset="0.280" stop-color="#f7610a"/><stop offset="0.300" stop-color="#f7870a"/><stop offset="0.320" stop-color="#f7990a"/><stop offset="0.340" stop-color="#f7720a"/><stop offset="0.360" stop-color="#f7600a"/><stop offset="0.380" stop-color="#f77c0a"/><stop offset="0.400" stop-color="#f78f0a"/><stop offset="0.420" stop-color="#f76c0a"/><stop offset="0.440" stop-color="#f7610a"/><stop offset="0.460" stop-color="#f7840a"/><stop offset="0.480" stop-color="#f79b0a"/><stop offset="0.500" stop-color="#f77d0a"/><stop offset="0.520" stop-color="#f76a0a"/><stop offset="0.540" stop-color="#f7950a"/><stop offset="0.560" stop-color="#f7de0a"/><stop offset="0.580" stop-color="#f7a50a"/><stop offset="0.600" stop-color="#f7770a"/><stop offset="0.620" stop-color="#f7cf0a"/><stop offset="0.640" stop-color="#bbf70a"/><stop offset="0.660" stop-color="#f7e70a"/><stop offset="0.680" stop-color="#f7860a"/><stop offset="0.700" stop-color="#f7aa0a"/><stop offset="0.720" stop-color="#f7b30a"/><stop offset="0.740" stop-color="#f7860a"/><stop offset="0.760" stop-color="#f7b40a"/><stop offset="0.780" stop-color="#f7e40a"/><stop offset="0.800" stop-color="#c5f70a"/><stop offset="0.820" stop-color="#74f70a"/><stop offset="0.840" stop-color="#24f70a"/><stop offset="0.860" stop-color="#0af73f"/><stop offset="0.880" stop-color="#0af78e"/><stop offset="0.900" stop-color="#0af7cb"/><stop offset="0.920" stop-color="#0ae9f7"/><stop offset="0.940" stop-color="#0aaff7"/><stop offset="0.960" stop-color="#0a79f7"/><stop offset="0.980" stop-color="#0a43f7"/><stop offset="1.000" stop-color="#0a25f7"/></linearGradient><linearGradient id="g67" gradientUnits="userSpaceOnUse" x1="0" y1="0" x2="1000" y2="0"><stop offset="0.000" stop-color="#0a0af7"/><stop offset="0.020" stop-color="#0a0af7"/><stop offset="0.040" stop-color="#0a0af7"/><stop offset="0.060" stop-color="#0a0af7"/><stop offset="0.080" stop-color="#0a5df7"/><stop offset="0.100" stop-color="#0a84f7"/><stop offset="0.120" stop-color="#0aaaf7"/><stop offset="0.140" stop-color="#0aeaf7"/><stop offset="0.160" stop-color="#0af77c"/><stop offset="0.180" stop-color="#17f70a"/><stop offset="0.200" stop-color="#76f70a"/><stop offset="0.220" stop-color="#d5f70a"/><stop offset="0.240" stop-color="#f7ce0a"/><stop offset="0.260" stop-color="#f78f0a"/><stop offset="0.280" stop-color="#f7610a"/><stop offset="0.300" stop-color="#f7860a"/><stop offset="0.320" stop-color="#f7970a"/><stop offset="0.340" stop-color="#f7710a"/><stop offset="0.360" stop-color="#f75f0a"/><stop offset="0.380" stop-color="#f77b0a"/><stop offset="0.400" stop-color="#f78d0a"/><stop offset="0.420" stop-color="#f7690a"/><stop offset="0.440" stop-color="#f75f0a"/><stop offset="0.460" stop-color="#f7810a"/><stop offset="0.480" stop-color="#f7980a"/><stop offset="0.500" stop-color="#f77b0a"/><stop offset="0.520" stop-color="#f7680a"/><stop offset="0.540" stop-color="#f7900a"/><stop offset="0.560" stop-color="#f7d70a"/><stop offset="0.580" stop-color="#f79d0a"/><stop offset="0.600" stop-color="#f76e0a"/><stop offset="0.620" stop-color="#f7c70a"/><stop offset="0.640" stop-color="#c0f70a"/><stop offset="0.660" stop-color="#f7e40a"/><stop offset="0.680" stop-color="#f7850a"/><stop offset="0.700" stop-color="#f7a80a"/><stop offset="0.720" stop-color="#f7ac0a"/><stop offset="0.740" stop-color="#f7850a"/><stop offset="0.760" stop-color="#f7af0a"/><stop offset="0.780" stop-color="#f7de0a"/><stop offset="0.800" stop-color="#cff70a"/><stop offset="0.820" stop-color="#80f70a"/><stop offset="0.840" stop-color="#2ff70a"/><stop offset="0.860" stop-color="#0af736"/><stop offset="0.880" stop-color="#0af788"/><stop offset="0.900" stop-color="#0af7c9"/><stop offset="0.920" stop-color="#0ae7f7"/><stop offset="0.940" stop-color="#0aabf7"/><stop offset="0.960" stop-color="#0a72f7"/><stop offset="0.980" stop-color="#0a39f7"/><stop offset="1.000" stop-color="#0a24f7"/></linearGradient><linearGradient id="g68" gradientUnits="userSpaceOnUse" x1="0" y1="0" x2="1000" y2="0"><stop offset="0.000" stop-color="#0a0af7"/><stop offset="0.020" stop-color="#0a0af7"/><stop offset="0.040" stop-color="#0a0af7"/><stop offset="0.060" stop-color="#0a0af7"/><stop offset="0.080" stop-color="#0a62f7"/><stop offset="0.100" stop-color="#0a89f7"/><stop offset="0.120" stop-color="#0ab1f7"/><stop offset="0.140" stop-color="#0af7eb"/><stop offset="0.160" stop-color="#0af763"/><stop offset="0.180" stop-color="#2af70a"/><stop offset="0.200" stop-color="#89f70a"/><stop offset="0.220" stop-color="#e7f70a"/><stop offset="0.240" stop-color="#f7c10a"/><stop offset="0.260" stop-color="#f7820a"/><stop offset="0.280" stop-color="#f7610a"/><stop offset="0.300" stop-color="#f7850a"/><stop offset="0.320" stop-color="#f7950a"/><stop offset="0.340" stop-color="#f7700a"/><stop offset="0.360" stop-color="#f75f0a"/><stop offset="0.380" stop-color="#f7790a"/><stop offset="0.400" stop-color="#f78a0a"/><stop offset="0.420" stop-color="#f7670a"/><stop offset="0.440" stop-color="#f75c0a"/><stop offset="0.460" stop-color="#f77d0a"/><stop offset="0.480" stop-color="#f7940a"/><stop offset="0.500" stop-color="#f7790a"/><stop offset="0.520" stop-color="#f7650a"/><stop offset="0.540" stop-color="#f78b0a"/><stop offset="0.560" stop-color="#f7ce0a"/><stop offset="0.580" stop-color="#f7920a"/><stop offset="0.600" stop-color="#f7620a"/><stop offset="0.620" stop-color="#f7bd0a"/><stop offset="0.640" stop-color="#c7f70a"/><stop offset="0.660" stop-color="#f7e00a"/><stop offset="0.680" stop-color="#f7840a"/><stop offset="0.700" stop-color="#f7a60a"/><stop offset="0.720" stop-color="#f7a60a"/><stop offset="0.740" stop-color="#f7850a"/><stop offset="0.760" stop-color="#f7aa0a"/><stop offset="0.780" stop-color="#f7d90a"/><stop offset="0.800" stop-color="#d9f70a"/><stop offset="0.820" stop-color="#8bf70a"/><stop offset="0.840" stop-color="#3af70a"/><stop offset="0.860" stop-color="#0af72d"/><stop offset="0.880" stop-color="#0af782"/><stop offset="0.900" stop-color="#0af7c7"/><stop offset="0.920" stop-color="#0ae5f7"/><stop offset="0.940" stop-color="#0aa6f7"/><stop offset="0.960" stop-color="#0a6bf7"/><stop offset="0.980" stop-color="#0a2ff7"/><stop offset="1.000" stop-color="#0a24f7"/></linearGradient><linearGradient id="g69" gradientUnits="userSpaceOnUse" x1="0" y1="0" x2="1000" y2="0"><stop offset="0.000" stop-color="#0a0af7"/><stop offset="0.020" stop-color="#0a0af7"/><stop offset="0.040" stop-color="#0a0af7"/><stop offset="0.060" stop-color="#0a0af7"/><stop offset="0.080" stop-color="#0a67f7"/><stop offset="0.100" stop-color="#0a8ff7"/><stop offset="0.120" stop-color="#0ab7f7"/><stop offset="0.140" stop-color="#0af7d3"/><stop offset="0.160" stop-color="#0af749"/><stop offset="0.180" stop-color="#3cf70a"/><stop offset="0.200" stop-color="#9bf70a"/><stop offset="0.220" stop-color="#f7f40a"/><stop offset="0.240" stop-color="#f7b50a"/><stop offset="0.260" stop-color="#f7760a"/><stop offset="0.280" stop-color="#f7610a"/><stop offset="0.300" stop-color="#f7840a"/><stop offset="0.320" stop-color="#f7940a"/><stop offset="0.340" stop-color="#f7700a"/><stop offset="0.360" stop-color="#f75f0a"/><stop offset="0.380" stop-color="#f7770a"/><stop offset="0.400" stop-color="#f7860a"/><stop offset="0.420" stop-color="#f7630a"/><stop offset="0.440" stop-color="#f7570a"/><stop offset="0.460" stop-color="#f7790a"/><stop offset="0.480" stop-color="#f7900a"/><stop offset="0.500" stop-color="#f7760a"/><stop offset="0.520" stop-color="#f7620a"/><stop offset="0.540" stop-color="#f7840a"/><stop offset="0.560" stop-color="#f7c40a"/><stop offset="0.580" stop-color="#f7850a"/><stop offset="0.600" stop-color="#f7550a"/><stop offset="0.620" stop-color="#f7b20a"/><stop offset="0.640" stop-color="#cef70a"/><stop offset="0.660" stop-color="#f7dc0a"/><stop offset="0.680" stop-color="#f7820a"/><stop offset="0.700" stop-color="#f7a40a"/><stop offset="0.720" stop-color="#f7a10a"/><stop offset="0.740" stop-color="#f7850a"/><stop offset="0.760" stop-color="#f7a50a"/><stop offset="0.780" stop-color="#f7d40a"/><stop offset="0.800" stop-color="#e2f70a"/><stop offset="0.820" stop-color="#96f70a"/><stop offset="0.840" stop-color="#46f70a"/><stop offset="0.860" stop-color="#0af724"/><stop offset="0.880" stop-color="#0af77b"/><stop offset="0.900" stop-color="#0af7c6"/><stop offset="0.920" stop-color="#0ae3f7"/><stop offset="0.940" stop-color="#0aa1f7"/><stop offset="0.960" stop-color="#0a62f7"/><stop offset="0.980" stop-color="#0a26f7"/><stop offset="1.000" stop-color="#0a23f7"/></linearGradient><linearGradient id="g70" gradientUnits="userSpaceOnUse" x1="0" y1="0" x2="1000" y2="0"><stop offset="0.000" stop-color="#0a0af7"/><stop offset="0.020" stop-color="#0a0af7"/><stop offset="0.040" stop-color="#0a0af7"/><stop offset="0.060" stop-color="#0a0af7"/><stop offset="0.080" stop-color="#0a6df7"/><stop offset="0.100" stop-color="#0a95f7"/><stop offset="0.120" stop-color="#0abef7"/><stop offset="0.140" stop-color="#0af7bb"/><stop offset="0.160" stop-color="#0af72f"/><stop offset="0.180" stop-color="#4ff70a"/><stop offset="0.200" stop-color="#aef70a"/><stop offset="0.220" stop-color="#f7e80a"/><stop offset="0.240" stop-color="#f7a90a"/><stop offset="0.260" stop-color="#f7720a"/><stop offset="0.280" stop-color="#f7610a"/><stop offset="0.300" stop-color="#f7840a"/><stop offset="0.320" stop-color="#f7930a"/><stop offset="0.340" stop-color="#f76f0a"/><stop offset="0.360" stop-color="#f75e0a"/><stop offset="0.380" stop-color="#f7760a"/><stop offset="0.400" stop-color="#f7820a"/><stop offset="0.420" stop-color="#f75e0a"/><stop offset="0.440" stop-color="#f7520a"/><stop offset="0.460" stop-color="#f7730a"/><stop offset="0.480" stop-color="#f78c0a"/><stop offset="0.500" stop-color="#f7730a"/><stop offset="0.520" stop-color="#f75f0a"/><stop offset="0.540" stop-color="#f77e0a"/><stop offset="0.560" stop-color="#f7ba0a"/><stop offset="0.580" stop-color="#f7790a"/><stop offset="0.600" stop-color="#f7480a"/><stop offset="0.620" stop-color="#f7a70a"/><stop offset="0.640" stop-color="#d6f70a"/><stop offset="0.660" stop-color="#f7d80a"/><stop offset="0.680" stop-color="#f7800a"/><stop offset="0.700" stop-color="#f7a20a"/><stop offset="0.720" stop-color="#f79d0a"/><stop offset="0.740" stop-color="#f7840a"/><stop offset="0.760" stop-color="#f79f0a"/><stop offset="0.780" stop-color="#f7cf0a"/><stop offset="0.800" stop-color="#eaf70a"/><stop offset="0.820" stop-color="#a1f70a"/><stop offset="0.840" stop-color="#53f70a"/><stop offset="0.860" stop-color="#0af71a"/><stop offset="0.880" stop-color="#0af774"/><stop offset="0.900" stop-color="#0af7c4"/><stop offset="0.920" stop-color="#0ae1f7"/><stop offset="0.940" stop-color="#0a9bf7"/><stop offset="0.960" stop-color="#0a59f7"/><stop offset="0.980" stop-color="#0a25f7"/><stop offset="1.000" stop-color="#0a23f7"/></linearGradient><linearGradient id="g71" gradientUnits="userSpaceOnUse" x1="0" y1="0" x2="1000" y2="0"><stop offset="0.000" stop-color="#0a0af7"/><stop offset="0.020" stop-color="#0a0af7"/><stop offset="0.040" stop-color="#0a0af7"/><stop offset="0.060" stop-color="#0a0af7"/><stop offset="0.080" stop-color="#0a73f7"/><stop offset="0.100" stop-color="#0a9cf7"/><stop offset="0.120" stop-color="#0ac5f7"/><stop offset="0.140" stop-color="#0af7a1"/><stop offset="0.160" stop-color="#0af714"/><stop offset="0.180" stop-color="#61f70a"/><stop offset="0.200" stop-color="#c0f70a"/><stop offset="0.220" stop-color="#f7db0a"/><stop offset="0.240" stop-color="#f79c0a"/><stop offset="0.260" stop-color="#f7720a"/><stop offset="0.280" stop-color="#f7610a"/><stop offset="0.300" stop-color="#f7830a"/><stop offset="0.320" stop-color="#f7930a"/><stop offset="0.340" stop-color="#f76f0a"/><stop offset="0.360" stop-color="#f75e0a"/><stop offset="0.380" stop-color="#f7740a"/><stop offset="0.400" stop-color="#f77f0a"/><stop offset="0.420" stop-color="#f7580a"/><stop offset="0.440" stop-color="#f74c0a"/><stop offset="0.460" stop-color="#f76e0a"/><stop offset="0.480" stop-color="#f7880a"/><stop offset="0.500" stop-color="#f7710a"/><stop offset="0.520" stop-color="#f75c0a"/><stop offset="0.540" stop-color="#f77a0a"/><stop offset="0.560" stop-color="#f7b30a"/><stop offset="0.580" stop-color="#f76f0a"/><stop offset="0.600" stop-color="#f73e0a"/><stop offset="0.620" stop-color="#f79f0a"/><stop offset="0.640" stop-color="#dcf70a"/><stop offset="0.660" stop-color="#f7d50a"/><stop offset="0.680" stop-color="#f77f0a"/><stop offset="0.700" stop-color="#f7a10a"/><stop offset="0.720" stop-color="#f79b0a"/><stop offset="0.740" stop-color="#f7840a"/><stop offset="0.760" stop-color="#f79a0a"/><stop offset="0.780" stop-color="#f7ca0a"/><stop offset="0.800" stop-color="#f3f70a"/><stop offset="0.820" stop-color="#abf70a"/><stop offset="0.840" stop-color="#61f70a"/><stop offset="0.860" stop-color="#0af70f"/><stop offset="0.880" stop-color="#0af76c"/><stop offset="0.900" stop-color="#0af7c1"/><stop offset="0.920" stop-color="#0adef7"/><stop offset="0.940" stop-color="#0a94f7"/><stop offset="0.960" stop-color="#0a4ff7"/><stop offset="0.980" stop-color="#0a25f7"/><stop offset="1.000" stop-color="#0a22f7"/></linearGradient><linearGradient id="g72" gradientUnits="userSpaceOnUse" x1="0" y1="0" x2="1000" y2="0"><stop offset="0.000" stop-color="#0a0af7"/><stop offset="0.020" stop-color="#0a0af7"/><stop offset="0.040" stop-color="#0a0af7"/><stop offset="0.060" stop-color="#0a50f7"/><stop offset="0.080" stop-color="#0a7af7"/><stop offset="0.100" stop-color="#0aa3f7"/><stop offset="0.120" stop-color="#0ad8f7"/><stop offset="0.140" stop-color="#0af786"/><stop offset="0.160" stop-color="#15f70a"/><stop offset="0.180" stop-color="#74f70a"/><stop offset="0.200" stop-color="#d3f70a"/><stop offset="0.220" stop-color="#f7cf0a"/><stop offset="0.240" stop-color="#f7980a"/><stop offset="0.260" stop-color="#f7720a"/><stop offset="0.280" stop-color="#f7610a"/><stop offset="0.300" stop-color="#f7830a"/><stop offset="0.320" stop-color="#f7930a"/><stop offset="0.340" stop-color="#f76f0a"/><stop offset="0.360" stop-color="#f75d0a"/><stop offset="0.380" stop-color="#f7730a"/><stop offset="0.400" stop-color="#f77c0a"/><stop offset="0.420" stop-color="#f7540a"/><stop offset="0.440" stop-color="#f7470a"/><stop offset="0.460" stop-color="#f76a0a"/><stop offset="0.480" stop-color="#f7860a"/><stop offset="0.500" stop-color="#f76f0a"/><stop offset="0.520" stop-color="#f75b0a"/><stop offset="0.540" stop-color="#f7770a"/><stop offset="0.560" stop-color="#f7af0a"/><stop offset="0.580" stop-color="#f76b0a"/><stop offset="0.600" stop-color="#f7390a"/><stop offset="0.620" stop-color="#f79a0a"/><stop offset="0.640" stop-color="#def70a"/><stop offset="0.660" stop-color="#f7d40a"/><stop offset="0.680" stop-color="#f77e0a"/><stop offset="0.700" stop-color="#f7a10a"/><stop offset="0.720" stop-color="#f79b0a"/><stop offset="0.740" stop-color="#f7840a"/><stop offset="0.760" stop-color="#f7980a"/><stop offset="0.780" stop-color="#f7c70a"/><stop offset="0.800" stop-color="#f7f60a"/><stop offset="0.820" stop-color="#aff70a"/><stop offset="0.840" stop-color="#68f70a"/><stop offset="0.860" stop-color="#0af70a"/><stop offset="0.880" stop-color="#0af768"/><stop offset="0.900" stop-color="#0af7c1"/><stop offset="0.920" stop-color="#0adbf7"/><stop offset="0.940" stop-color="#0a8ef7"/><stop offset="0.960" stop-color="#0a46f7"/><stop offset="0.980" stop-color="#0a25f7"/><stop offset="1.000" stop-color="#0a22f7"/></linearGradient><linearGradient id="g73" gradientUnits="userSpaceOnUse" x1="0" y1="0" x2="1000" y2="0"><stop offset="0.000" stop-color="#0a0af7"/><stop offset="0.020" stop-color="#0a0af7"/><stop offset="0.040" stop-color="#0a0af7"/><stop offset="0.060" stop-color="#0a56f7"/><stop offset="0.080" stop-color="#0a80f7"/><stop offset="0.100" stop-color="#0aaaf7"/><stop offset="0.120" stop-color="#0af1f7"/><stop offset="0.140" stop-color="#0af76c"/><stop offset="0.160" stop-color="#28f70a"/><stop offset="0.180" stop-color="#87f70a"/><stop offset="0.200" stop-color="#e5f70a"/><stop offset="0.220" stop-color="#f7c30a"/><stop offset="0.240" stop-color="#f7980a"/><stop offset="0.260" stop-color="#f7720a"/><stop offset="0.280" stop-color="#f7610a"/><stop offset="0.300" stop-color="#f7830a"/><stop offset="0.320" stop-color="#f7930a"/><stop offset="0.340" stop-color="#f76f0a"/><stop offset="0.360" stop-color="#f75d0a"/><stop offset="0.380" stop-color="#f7720a"/><stop offset="0.400" stop-color="#f77b0a"/><stop offset="0.420" stop-color="#f7530a"/><stop offset="0.440" stop-color="#f7450a"/><stop offset="0.460" stop-color="#f7680a"/><stop offset="0.480" stop-color="#f7850a"/><stop offset="0.500" stop-color="#f76f0a"/><stop offset="0.520" stop-color="#f75b0a"/><stop offset="0.540" stop-color="#f7780a"/><stop offset="0.560" stop-color="#f7b00a"/><stop offset="0.580" stop-color="#f76c0a"/><stop offset="0.600" stop-color="#f73a0a"/><stop offset="0.620" stop-color="#f79c0a"/><stop offset="0.640" stop-color="#def70a"/><stop offset="0.660" stop-color="#f7d40a"/><stop offset="0.680" stop-color="#f77e0a"/><stop offset="0.700" stop-color="#f7a10a"/><stop offset="0.720" stop-color="#f79b0a"/><stop offset="0.740" stop-color="#f7840a"/><stop offset="0.760" stop-color="#f7980a"/><stop offset="0.780" stop-color="#f7c70a"/><stop offset="0.800" stop-color="#f7f60a"/><stop offset="0.820" stop-color="#aff70a"/><stop offset="0.840" stop-color="#68f70a"/><stop offset="0.860" stop-color="#0af70a"/><stop offset="0.880" stop-color="#0af768"/><stop offset="0.900" stop-color="#0af7c2"/><stop offset="0.920" stop-color="#0ad6f7"/><stop offset="0.940" stop-color="#0a88f7"/><stop offset="0.960" stop-color="#0a3df7"/><stop offset="0.980" stop-color="#0a24f7"/><stop offset="1.000" stop-color="#0a22f7"/></linearGradient><linearGradient id="g74" gradientUnits="userSpaceOnUse" x1="0" y1="0" x2="1000" y2="0"><stop offset="0.000" stop-color="#0a0af7"/><stop offset="0.020" stop-color="#0a0af7"/><stop offset="0.040" stop-color="#0a0af7"/><stop offset="0.060" stop-color="#0a5df7"/><stop offset="0.080" stop-color="#0a87f7"/><stop offset="0.100" stop-color="#0ab1f7"/><stop offset="0.120" stop-color="#0af7e2"/><stop offset="0.140" stop-color="#0af750"/><stop offset="0.160" stop-color="#3af70a"/><stop offset="0.180" stop-color="#99f70a"/><stop offset="0.200" stop-color="#f7f60a"/><stop offset="0.220" stop-color="#f7b70a"/><stop offset="0.240" stop-color="#f7980a"/><stop offset="0.260" stop-color="#f7720a"/><stop offset="0.280" stop-color="#f7610a"/><stop offset="0.300" stop-color="#f7830a"/><stop offset="0.320" stop-color="#f7930a"/><stop offset="0.340" stop-color="#f76f0a"/><stop offset="0.360" stop-color="#f75e0a"/><stop offset="0.380" stop-color="#f7730a"/><stop offset="0.400" stop-color="#f77c0a"/><stop offset="0.420" stop-color="#f7540a"/><stop offset="0.440" stop-color="#f7460a"/><stop offset="0.460" stop-color="#f7690a"/><stop offset="0.480" stop-color="#f7860a"/><stop offset="0.500" stop-color="#f7700a"/><stop offset="0.520" stop-color="#f75d0a"/><stop offset="0.540" stop-color="#f77b0a"/><stop offset="0.560" stop-color="#f7b50a"/><stop offset="0.580" stop-color="#f7730a"/><stop offset="0.600" stop-color="#f7420a"/><stop offset="0.620" stop-color="#f7a20a"/><stop offset="0.640" stop-color="#daf70a"/><stop offset="0.660" stop-color="#f7d60a"/><stop offset="0.680" stop-color="#f77f0a"/><stop offset="0.700" stop-color="#f7a10a"/><stop offset="0.720" stop-color="#f79b0a"/><stop offset="0.740" stop-color="#f7840a"/><stop offset="0.760" stop-color="#f7980a"/><stop offset="0.780" stop-color="#f7c70a"/><stop offset="0.800" stop-color="#f6f70a"/><stop offset="0.820" stop-color="#aff70a"/><stop offset="0.840" stop-color="#68f70a"/><stop offset="0.860" stop-color="#0af70a"/><stop offset="0.880" stop-color="#0af768"/><stop offset="0.900" stop-color="#0af7c3"/><stop offset="0.920" stop-color="#0ad2f7"/><stop offset="0.940" stop-color="#0a82f7"/><stop offset="0.960" stop-color="#0a34f7"/><stop offset="0.980" stop-color="#0a24f7"/><stop offset="1.000" stop-color="#0a22f7"/></linearGradient><linearGradient id="g75" gradientUnits="userSpaceOnUse" x1="0" y1="0" x2="1000" y2="0"><stop offset="0.000" stop-color="#0a0af7"/><stop offset="0.020" stop-color="#0a0af7"/><stop offset="0.040" stop-color="#0a0af7"/><stop offset="0.060" stop-color="#0a62f7"/><stop offset="0.080" stop-color="#0a8df7"/><stop offset="0.100" stop-color="#0ab8f7"/><stop offset="0.120" stop-color="#0af7c8"/><stop offset="0.140" stop-color="#0af734"/><stop offset="0.160" stop-color="#46f70a"/><stop offset="0.180" stop-color="#9bf70a"/><stop offset="0.200" stop-color="#ebf70a"/><stop offset="0.220" stop-color="#f7c80a"/><stop offset="0.240" stop-color="#f7b10a"/><stop offset="0.260" stop-color="#f7820a"/><stop offset="0.280" stop-color="#f76b0a"/><stop offset="0.300" stop-color="#f7920a"/><stop offset="0.320" stop-color="#f7ad0a"/><stop offset="0.340" stop-color="#f7930a"/><stop offset="0.360" stop-color="#f7840a"/><stop offset="0.380" stop-color="#f7950a"/><stop offset="0.400" stop-color="#f7960a"/><stop offset="0.420" stop-color="#f7660a"/><stop offset="0.440" stop-color="#f7530a"/><stop offset="0.460" stop-color="#f7790a"/><stop offset="0.480" stop-color="#f79e0a"/><stop offset="0.500" stop-color="#f7930a"/><stop offset="0.520" stop-color="#f7840a"/><stop offset="0.540" stop-color="#f79e0a"/><stop offset="0.560" stop-color="#f7cb0a"/><stop offset="0.580" stop-color="#f7820a"/><stop offset="0.600" stop-color="#f74f0a"/><stop offset="0.620" stop-color="#f7ac0a"/><stop offset="0.640" stop-color="#cef70a"/><stop offset="0.660" stop-color="#f7ef0a"/><stop offset="0.680" stop-color="#f7a00a"/><stop offset="0.700" stop-color="#f7b90a"/><stop offset="0.720" stop-color="#f7aa0a"/><stop offset="0.740" stop-color="#f78c0a"/><stop offset="0.760" stop-color="#f79e0a"/><stop offset="0.780" stop-color="#f7d10a"/><stop offset="0.800" stop-color="#e7f70a"/><stop offset="0.820" stop-color="#a1f70a"/><stop offset="0.840" stop-color="#5ff70a"/><stop offset="0.860" stop-color="#0af70a"/><stop offset="0.880" stop-color="#0af768"/><stop offset="0.900" stop-color="#0af7c5"/><stop offset="0.920" stop-color="#0acef7"/><stop offset="0.940" stop-color="#0a7bf7"/><stop offset="0.960" stop-color="#0a2bf7"/><stop offset="0.980" stop-color="#0a24f7"/><stop offset="1.000" stop-color="#0a21f7"/></linearGradient><linearGradient id="g76" gradientUnits="userSpaceOnUse" x1="0" y1="0" x2="1000" y2="0"><stop offset="0.000" stop-color="#0a0af7"/><stop offset="0.020" stop-color="#0a0af7"/><stop offset="0.040" stop-color="#0a0af7"/><stop offset="0.060" stop-color="#0a67f7"/><stop offset="0.080" stop-color="#0a93f7"/><stop offset="0.100" stop-color="#0abef7"/><stop offset="0.120" stop-color="#0af7ae"/><stop offset="0.140" stop-color="#0af717"/><stop offset="0.160" stop-color="#44f70a"/><stop offset="0.180" stop-color="#85f70a"/><stop offset="0.200" stop-color="#bef70a"/><stop offset="0.220" stop-color="#edf70a"/><stop offset="0.240" stop-color="#f7e80a"/><stop offset="0.260" stop-color="#f7a60a"/><stop offset="0.280" stop-color="#f7810a"/><stop offset="0.300" stop-color="#f7b20a"/><stop offset="0.320" stop-color="#f7e50a"/><stop offset="0.340" stop-color="#f7e00a"/><stop offset="0.360" stop-color="#f7d70a"/><stop offset="0.380" stop-color="#f7de0a"/><stop offset="0.400" stop-color="#f7cb0a"/><stop offset="0.420" stop-color="#f7890a"/><stop offset="0.440" stop-color="#f76b0a"/><stop offset="0.460" stop-color="#f7980a"/><stop offset="0.480" stop-color="#f7d20a"/><stop offset="0.500" stop-color="#f7dc0a"/><stop offset="0.520" stop-color="#f7d60a"/><stop offset="0.540" stop-color="#f7e40a"/><stop offset="0.560" stop-color="#f7f10a"/><stop offset="0.580" stop-color="#f7990a"/><stop offset="0.600" stop-color="#f7610a"/><stop offset="0.620" stop-color="#f7b90a"/><stop offset="0.640" stop-color="#bcf70a"/><stop offset="0.660" stop-color="#cdf70a"/><stop offset="0.680" stop-color="#f7e60a"/><stop offset="0.700" stop-color="#f7ed0a"/><stop offset="0.720" stop-color="#f7c90a"/><stop offset="0.740" stop-color="#f79e0a"/><stop offset="0.760" stop-color="#f7ab0a"/><stop offset="0.780" stop-color="#f7e70a"/><stop offset="0.800" stop-color="#c6f70a"/><stop offset="0.820" stop-color="#83f70a"/><stop offset="0.840" stop-color="#4cf70a"/><stop offset="0.860" stop-color="#0af70a"/><stop offset="0.880" stop-color="#0af768"/><stop offset="0.900" stop-color="#0af7c7"/><stop offset="0.920" stop-color="#0ac9f7"/><stop offset="0.940" stop-color="#0a74f7"/><stop offset="0.960" stop-color="#0a26f7"/><stop offset="0.980" stop-color="#0a23f7"/><stop offset="1.000" stop-color="#0a21f7"/></linearGradient><linearGradient id="g77" gradientUnits="userSpaceOnUse" x1="0" y1="0" x2="1000" y2="0"><stop offset="0.000" stop-color="#0a0af7"/><stop offset="0.020" stop-color="#0a0af7"/><stop offset="0.040" stop-color="#0a0af7"/><stop offset="0.060" stop-color="#0a6cf7"/><stop offset="0.080" stop-color="#0a99f7"/><stop offset="0.100" stop-color="#0ac5f7"/><stop offset="0.120" stop-color="#0af796"/><stop offset="0.140" stop-color="#0df70a"/><stop offset="0.160" stop-color="#35f70a"/><stop offset="0.180" stop-color="#5cf70a"/><stop offset="0.200" stop-color="#7df70a"/><stop offset="0.220" stop-color="#a0f70a"/><stop offset="0.240" stop-color="#c1f70a"/><stop offset="0.260" stop-color="#f7d10a"/><stop offset="0.280" stop-color="#f79c0a"/><stop offset="0.300" stop-color="#f7d90a"/><stop offset="0.320" stop-color="#c4f70a"/><stop offset="0.340" stop-color="#aff70a"/><stop offset="0.360" stop-color="#b1f70a"/><stop offset="0.380" stop-color="#b7f70a"/><stop offset="0.400" stop-color="#e1f70a"/><stop offset="0.420" stop-color="#f7b30a"/><stop offset="0.440" stop-color="#f7860a"/><stop offset="0.460" stop-color="#f7bc0a"/><stop offset="0.480" stop-color="#ddf70a"/><stop offset="0.500" stop-color="#b8f70a"/><stop offset="0.520" stop-color="#b5f70a"/><stop offset="0.540" stop-color="#b6f70a"/><stop offset="0.560" stop-color="#d0f70a"/><stop offset="0.580" stop-color="#f7b20a"/><stop offset="0.600" stop-color="#f7730a"/><stop offset="0.620" stop-color="#f7c60a"/><stop offset="0.640" stop-color="#a9f70a"/><stop offset="0.660" stop-color="#92f70a"/><stop offset="0.680" stop-color="#b1f70a"/><stop offset="0.700" stop-color="#c1f70a"/><stop offset="0.720" stop-color="#f7f00a"/><stop offset="0.740" stop-color="#f7b30a"/><stop offset="0.760" stop-color="#f7bb0a"/><stop offset="0.780" stop-color="#ebf70a"/><stop offset="0.800" stop-color="#9df70a"/><stop offset="0.820" stop-color="#5ef70a"/><stop offset="0.840" stop-color="#34f70a"/><stop offset="0.860" stop-color="#0af70a"/><stop offset="0.880" stop-color="#0af768"/><stop offset="0.900" stop-color="#0af7c8"/><stop offset="0.920" stop-color="#0ac3f7"/><stop offset="0.940" stop-color="#0a6cf7"/><stop offset="0.960" stop-color="#0a26f7"/><stop offset="0.980" stop-color="#0a23f7"/><stop offset="1.000" stop-color="#0a21f7"/></linearGradient><linearGradient id="g78" gradientUnits="userSpaceOnUse" x1="0" y1="0" x2="1000" y2="0"><stop offset="0.000" stop-color="#0a0af7"/><stop offset="0.020" stop-color="#0a0af7"/><stop offset="0.040" stop-color="#0a0af7"/><stop offset="0.060" stop-color="#0a72f7"/><stop offset="0.080" stop-color="#0a9ef7"/><stop offset="0.100" stop-color="#0ad4f7"/><stop offset="0.120" stop-color="#0af77e"/><stop offset="0.140" stop-color="#0ef70a"/><stop offset="0.160" stop-color="#1ef70a"/><stop offset="0.180" stop-color="#2ff70a"/><stop offset="0.200" stop-color="#3df70a"/><stop offset="0.220" stop-color="#53f70a"/><stop offset="0.240" stop-color="#84f70a"/><stop offset="0.260" stop-color="#f4f70a"/><stop offset="0.280" stop-color="#f7b50a"/><stop offset="0.300" stop-color="#f1f70a"/><stop offset="0.320" stop-color="#85f70a"/><stop offset="0.340" stop-color="#58f70a"/><stop offset="0.360" stop-color="#54f70a"/><stop offset="0.380" stop-color="#65f70a"/><stop offset="0.400" stop-color="#a6f70a"/><stop offset="0.420" stop-color="#f7d90a"/><stop offset="0.440" stop-color="#f79f0a"/><stop offset="0.460" stop-color="#f7dd0a"/><stop offset="0.480" stop-color="#a4f70a"/><stop offset="0.500" stop-color="#67f70a"/><stop offset="0.520" stop-color="#5af70a"/><stop offset="0.540" stop-color="#69f70a"/><stop offset="0.560" stop-color="#a8f70a"/><stop offset="0.580" stop-color="#f7c70a"/><stop offset="0.600" stop-color="#f7820a"/><stop offset="0.620" stop-color="#f7d00a"/><stop offset="0.640" stop-color="#97f70a"/><stop offset="0.660" stop-color="#5cf70a"/><stop offset="0.680" stop-color="#63f70a"/><stop offset="0.700" stop-color="#87f70a"/><stop offset="0.720" stop-color="#daf70a"/><stop offset="0.740" stop-color="#f7c70a"/><stop offset="0.760" stop-color="#f7ca0a"/><stop offset="0.780" stop-color="#d2f70a"/><stop offset="0.800" stop-color="#78f70a"/><stop offset="0.820" stop-color="#3cf70a"/><stop offset="0.840" stop-color="#1ff70a"/><stop offset="0.860" stop-color="#0af70a"/><stop offset="0.880" stop-color="#0af768"/><stop offset="0.900" stop-color="#0af7ca"/><stop offset="0.920" stop-color="#0abef7"/><stop offset="0.940" stop-color="#0a63f7"/><stop offset="0.960" stop-color="#0a25f7"/><stop offset="0.980" stop-color="#0a23f7"/><stop offset="1.000" stop-color="#0a21f7"/></linearGradient><linearGradient id="g79" gradientUnits="userSpaceOnUse" x1="0" y1="0" x2="1000" y2="0"><stop offset="0.000" stop-color="#0a0af7"/><stop offset="0.020" stop-color="#0a0af7"/><stop offset="0.040" stop-color="#0a0af7"/><stop offset="0.060" stop-color="#0a77f7"/><stop offset="0.080" stop-color="#0aa4f7"/><stop offset="0.100" stop-color="#0aebf7"/><stop offset="0.120" stop-color="#0af765"/><stop offset="0.140" stop-color="#0af70a"/><stop offset="0.160" stop-color="#0df70a"/><stop offset="0.180" stop-color="#0ff70a"/><stop offset="0.200" stop-color="#12f70a"/><stop offset="0.220" stop-color="#20f70a"/><stop offset="0.240" stop-color="#5cf70a"/><stop offset="0.260" stop-color="#daf70a"/><stop offset="0.280" stop-color="#f7c50a"/><stop offset="0.300" stop-color="#daf70a"/><stop offset="0.320" stop-color="#5cf70a"/><stop offset="0.340" stop-color="#21f70a"/><stop offset="0.360" stop-color="#19f70a"/><stop offset="0.380" stop-color="#32f70a"/><stop offset="0.400" stop-color="#80f70a"/><stop offset="0.420" stop-color="#f7f10a"/><stop offset="0.440" stop-color="#f7af0a"/><stop offset="0.460" stop-color="#f7f20a"/><stop offset="0.480" stop-color="#80f70a"/><stop offset="0.500" stop-color="#33f70a"/><stop offset="0.520" stop-color="#20f70a"/><stop offset="0.540" stop-color="#38f70a"/><stop offset="0.560" stop-color="#8ef70a"/><stop offset="0.580" stop-color="#f7d60a"/><stop offset="0.600" stop-color="#f78d0a"/><stop offset="0.620" stop-color="#f7d80a"/><stop offset="0.640" stop-color="#8cf70a"/><stop offset="0.660" stop-color="#3af70a"/><stop offset="0.680" stop-color="#31f70a"/><stop offset="0.700" stop-color="#63f70a"/><stop offset="0.720" stop-color="#c3f70a"/><stop offset="0.740" stop-color="#f7d30a"/><stop offset="0.760" stop-color="#f7d30a"/><stop offset="0.780" stop-color="#c2f70a"/><stop offset="0.800" stop-color="#60f70a"/><stop offset="0.820" stop-color="#26f70a"/><stop offset="0.840" stop-color="#11f70a"/><stop offset="0.860" stop-color="#0af70a"/><stop offset="0.880" stop-color="#0af768"/><stop offset="0.900" stop-color="#0af7cc"/><stop offset="0.920" stop-color="#0ab7f7"/><stop offset="0.940" stop-color="#0a5af7"/><stop offset="0.960" stop-color="#0a25f7"/><stop offset="0.980" stop-color="#0a23f7"/><stop offset="1.000" stop-color="#0a20f7"/></linearGradient><clipPath id="cv"><rect x="304" y="0" width="540" height="472"/></clipPath><clipPath id="pl"><polygon points="567.4,134.0 844.4,294.1 680.9,387.2 403.9,227.1"/></clipPath><filter id="bl" x="-5%" y="-5%" width="110%" height="110%"><feGaussianBlur stdDeviation="1.4"/></filter></defs>
<g clip-path="url(#cv)">
<polygon points="567.4,99.3 844.4,259.4 844.4,317.9 680.9,411.0 403.9,250.9 403.9,192.4" fill="#e3e3ec"/>
<polygon points="514.0,127.0 514.0,154.0 545.0,152.0" fill="#d4d4f0"/>
<polygon points="773.4,337.5 791.0,325.6 791.0,347.0" fill="#d2d2f0"/>
<polyline points="403.9,250.9 567.4,157.8 844.4,317.9" stroke="#2c2c64" stroke-width="1" fill="none"/>
<g clip-path="url(#pl)"><g filter="url(#bl)"><g transform="matrix(0.277,0.1601,-0.1635,0.0931,567.4,134)"><rect x="-30" y="-1.0" width="1060" height="14.5" fill="url(#g0)"/><rect x="-30" y="11.5" width="1060" height="14.5" fill="url(#g1)"/><rect x="-30" y="24.0" width="1060" height="14.5" fill="url(#g2)"/><rect x="-30" y="36.5" width="1060" height="14.5" fill="url(#g3)"/><rect x="-30" y="49.0" width="1060" height="14.5" fill="url(#g4)"/><rect x="-30" y="61.5" width="1060" height="14.5" fill="url(#g5)"/><rect x="-30" y="74.0" width="1060" height="14.5" fill="url(#g6)"/><rect x="-30" y="86.5" width="1060" height="14.5" fill="url(#g7)"/><rect x="-30" y="99.0" width="1060" height="14.5" fill="url(#g8)"/><rect x="-30" y="111.5" width="1060" height="14.5" fill="url(#g9)"/><rect x="-30" y="124.0" width="1060" height="14.5" fill="url(#g10)"/><rect x="-30" y="136.5" width="1060" height="14.5" fill="url(#g11)"/><rect x="-30" y="149.0" width="1060" height="14.5" fill="url(#g12)"/><rect x="-30" y="161.5" width="1060" height="14.5" fill="url(#g13)"/><rect x="-30" y="174.0" width="1060" height="14.5" fill="url(#g14)"/><rect x="-30" y="186.5" width="1060" height="14.5" fill="url(#g15)"/><rect x="-30" y="199.0" width="1060" height="14.5" fill="url(#g16)"/><rect x="-30" y="211.5" width="1060" height="14.5" fill="url(#g17)"/><rect x="-30" y="224.0" width="1060" height="14.5" fill="url(#g18)"/><rect x="-30" y="236.5" width="1060" height="14.5" fill="url(#g19)"/><rect x="-30" y="249.0" width="1060" height="14.5" fill="url(#g20)"/><rect x="-30" y="261.5" width="1060" height="14.5" fill="url(#g21)"/><rect x="-30" y="274.0" width="1060" height="14.5" fill="url(#g22)"/><rect x="-30" y="286.5" width="1060" height="14.5" fill="url(#g23)"/><rect x="-30" y="299.0" width="1060" height="14.5" fill="url(#g24)"/><rect x="-30" y="311.5" width="1060" height="14.5" fill="url(#g25)"/><rect x="-30" y="324.0" width="1060" height="14.5" fill="url(#g26)"/><rect x="-30" y="336.5" width="1060" height="14.5" fill="url(#g27)"/><rect x="-30" y="349.0" width="1060" height="14.5" fill="url(#g28)"/><rect x="-30" y="361.5" width="1060" height="14.5" fill="url(#g29)"/><rect x="-30" y="374.0" width="1060" height="14.5" fill="url(#g30)"/><rect x="-30" y="386.5" width="1060" height="14.5" fill="url(#g31)"/><rect x="-30" y="399.0" width="1060" height="14.5" fill="url(#g32)"/><rect x="-30" y="411.5" width="1060" height="14.5" fill="url(#g33)"/><rect x="-30" y="424.0" width="1060" height="14.5" fill="url(#g34)"/><rect x="-30" y="436.5" width="1060" height="14.5" fill="url(#g35)"/><rect x="-30" y="449.0" width="1060" height="14.5" fill="url(#g36)"/><rect x="-30" y="461.5" width="1060" height="14.5" fill="url(#g37)"/><rect x="-30" y="474.0" width="1060" height="14.5" fill="url(#g38)"/><rect x="-30" y="486.5" width="1060" height="14.5" fill="url(#g39)"/><rect x="-30" y="499.0" width="1060" height="14.5" fill="url(#g40)"/><rect x="-30" y="511.5" width="1060" height="14.5" fill="url(#g41)"/><rect x="-30" y="524.0" width="1060" height="14.5" fill="url(#g42)"/><rect x="-30" y="536.5" width="1060" height="14.5" fill="url(#g43)"/><rect x="-30" y="549.0" width="1060" height="14.5" fill="url(#g44)"/><rect x="-30" y="561.5" width="1060" height="14.5" fill="url(#g45)"/><rect x="-30" y="574.0" width="1060" height="14.5" fill="url(#g46)"/><rect x="-30" y="586.5" width="1060" height="14.5" fill="url(#g47)"/><rect x="-30" y="599.0" width="1060" height="14.5" fill="url(#g48)"/><rect x="-30" y="611.5" width="1060" height="14.5" fill="url(#g49)"/><rect x="-30" y="624.0" width="1060" height="14.5" fill="url(#g50)"/><rect x="-30" y="636.5" width="1060" height="14.5" fill="url(#g51)"/><rect x="-30" y="649.0" width="1060" height="14.5" fill="url(#g52)"/><rect x="-30" y="661.5" width="1060" height="14.5" fill="url(#g53)"/><rect x="-30" y="674.0" width="1060" height="14.5" fill="url(#g54)"/><rect x="-30" y="686.5" width="1060" height="14.5" fill="url(#g55)"/><rect x="-30" y="699.0" width="1060" height="14.5" fill="url(#g56)"/><rect x="-30" y="711.5" width="1060" height="14.5" fill="url(#g57)"/><rect x="-30" y="724.0" width="1060" height="14.5" fill="url(#g58)"/><rect x="-30" y="736.5" width="1060" height="14.5" fill="url(#g59)"/><rect x="-30" y="749.0" width="1060" height="14.5" fill="url(#g60)"/><rect x="-30" y="761.5" width="1060" height="14.5" fill="url(#g61)"/><rect x="-30" y="774.0" width="1060" height="14.5" fill="url(#g62)"/><rect x="-30" y="786.5" width="1060" height="14.5" fill="url(#g63)"/><rect x="-30" y="799.0" width="1060" height="14.5" fill="url(#g64)"/><rect x="-30" y="811.5" width="1060" height="14.5" fill="url(#g65)"/><rect x="-30" y="824.0" width="1060" height="14.5" fill="url(#g66)"/><rect x="-30" y="836.5" width="1060" height="14.5" fill="url(#g67)"/><rect x="-30" y="849.0" width="1060" height="14.5" fill="url(#g68)"/><rect x="-30" y="861.5" width="1060" height="14.5" fill="url(#g69)"/><rect x="-30" y="874.0" width="1060" height="14.5" fill="url(#g70)"/><rect x="-30" y="886.5" width="1060" height="14.5" fill="url(#g71)"/><rect x="-30" y="899.0" width="1060" height="14.5" fill="url(#g72)"/><rect x="-30" y="911.5" width="1060" height="14.5" fill="url(#g73)"/><rect x="-30" y="924.0" width="1060" height="14.5" fill="url(#g74)"/><rect x="-30" y="936.5" width="1060" height="14.5" fill="url(#g75)"/><rect x="-30" y="949.0" width="1060" height="14.5" fill="url(#g76)"/><rect x="-30" y="961.5" width="1060" height="14.5" fill="url(#g77)"/><rect x="-30" y="974.0" width="1060" height="14.5" fill="url(#g78)"/><rect x="-30" y="986.5" width="1060" height="14.5" fill="url(#g79)"/></g></g></g>
<polyline points="403.9,192.4 567.4,99.3 844.4,259.4" stroke="#2c2c64" stroke-width="1" fill="none"/>
<polyline points="403.9,192.4 680.9,352.5 844.4,259.4" stroke="#2c2c64" stroke-width="1" fill="none"/>
<polyline points="403.9,250.9 680.9,411.0 844.4,317.9" stroke="#2c2c64" stroke-width="1" fill="none"/>
<polyline points="567.4,99.3 567.4,134.0" stroke="#2c2c64" stroke-width="1" fill="none"/>
<polyline points="680.9,352.5 680.9,411.0" stroke="#2c2c64" stroke-width="1" fill="none"/>
<polygon points="477.5,273.6 355.9,342.9 339.8,314.7 461.5,245.4" fill="#d8d8e8" fill-opacity="0.6"/>
<defs><linearGradient id="cxl" gradientUnits="userSpaceOnUse" x1="450" y1="258" x2="458" y2="276"><stop offset="0" stop-color="#f08018"/><stop offset="0.45" stop-color="#e85010"/><stop offset="1" stop-color="#f59020"/></linearGradient></defs>
<polygon points="460.0,259.5 400.0,292.5 400.0,313.5 474.0,273.5" fill="url(#cxl)"/>
<path d="M481.0 266.1 L480.9 268.1 L480.5 269.9 L479.8 271.4 L478.8 272.6 L477.6 273.5 L476.3 274.1 L474.7 274.3 L473.1 274.1 L471.3 273.6 L469.5 272.7 L467.7 271.5 L465.9 270.0 L464.3 268.2 L462.7 266.3 L461.4 264.1 L460.2 261.9 L459.2 259.6 L458.5 257.3 L458.1 255.0 L458.0 252.8 L458.1 250.9 L458.5 249.1 L459.2 247.6 L460.2 246.4 L461.4 245.5 L462.7 244.9 L464.3 244.7 L465.9 244.9 L467.7 245.4 L469.5 246.3 L471.3 247.5 L473.1 249.0 L474.7 250.8 L476.3 252.7 L477.6 254.9 L478.8 257.1 L479.8 259.4 L480.5 261.7 L480.9 264.0Z" fill="#e8f060" fill-opacity="0.35" stroke="#303070" stroke-width="1"/>
<path d="M473.8 262.8 L473.7 263.8 L473.5 264.7 L473.2 265.5 L472.9 266.2 L472.4 266.8 L471.8 267.1 L471.2 267.3 L470.5 267.3 L469.7 267.1 L469.0 266.8 L468.3 266.3 L467.5 265.6 L466.8 264.8 L466.2 263.9 L465.6 262.9 L465.1 261.8 L464.8 260.6 L464.5 259.5 L464.3 258.3 L464.2 257.2 L464.3 256.2 L464.5 255.3 L464.8 254.5 L465.1 253.8 L465.6 253.2 L466.2 252.9 L466.8 252.7 L467.5 252.7 L468.3 252.9 L469.0 253.2 L469.7 253.7 L470.5 254.4 L471.2 255.2 L471.8 256.1 L472.4 257.1 L472.9 258.2 L473.2 259.4 L473.5 260.5 L473.7 261.7Z" fill="#d07020" fill-opacity="0.8" stroke="#801010" stroke-width="1"/>
<path d="M416.7 302.8 L416.6 304.8 L416.1 306.5 L415.5 308.0 L414.5 309.3 L413.3 310.2 L412.0 310.7 L410.4 310.9 L408.8 310.7 L407.0 310.2 L405.2 309.3 L403.4 308.1 L401.6 306.6 L400.0 304.9 L398.4 302.9 L397.0 300.8 L395.9 298.5 L394.9 296.2 L394.2 293.9 L393.8 291.6 L393.7 289.5 L393.8 287.5 L394.2 285.7 L394.9 284.2 L395.9 283.0 L397.0 282.1 L398.4 281.5 L400.0 281.3 L401.6 281.5 L403.4 282.1 L405.2 282.9 L407.0 284.1 L408.8 285.6 L410.4 287.4 L412.0 289.4 L413.3 291.5 L414.5 293.8 L415.5 296.1 L416.1 298.4 L416.6 300.6Z" fill="none" stroke="#303070" stroke-width="1"/>
<polygon points="786.6,262.9 908.3,193.6 892.2,165.4 770.6,234.7" fill="#e2dce6" fill-opacity="0.9"/>
<defs><linearGradient id="cxr" gradientUnits="userSpaceOnUse" x1="778.6" y1="253.8" x2="848.6" y2="213.8"><stop offset="0" stop-color="#c0e020"/><stop offset="0.5" stop-color="#f0c000"/><stop offset="1" stop-color="#f08000"/></linearGradient></defs>
<polygon points="780.0,239.0 850.0,203.0 850.0,226.0 786.0,259.0" fill="url(#cxr)"/>
<path d="M790.1 255.5 L790.0 257.3 L789.6 258.9 L788.9 260.3 L787.9 261.4 L786.7 262.2 L785.4 262.7 L783.8 262.8 L782.2 262.6 L780.4 262.0 L778.6 261.1 L776.8 259.9 L775.0 258.4 L773.4 256.7 L771.8 254.8 L770.5 252.8 L769.3 250.6 L768.3 248.5 L767.6 246.3 L767.2 244.2 L767.1 242.2 L767.2 240.3 L767.6 238.7 L768.3 237.3 L769.3 236.2 L770.5 235.4 L771.8 234.9 L773.4 234.8 L775.0 235.0 L776.8 235.6 L778.6 236.5 L780.4 237.7 L782.2 239.2 L783.8 240.9 L785.4 242.8 L786.7 244.8 L787.9 247.0 L788.9 249.1 L789.6 251.3 L790.0 253.4Z" fill="#f0f0f0" fill-opacity="0.25" stroke="#303070" stroke-width="1"/>
<path d="M783.1 252.4 L783.0 253.4 L782.8 254.3 L782.5 255.1 L782.2 255.8 L781.7 256.4 L781.1 256.7 L780.5 256.9 L779.8 256.9 L779.0 256.7 L778.3 256.4 L777.6 255.9 L776.8 255.2 L776.1 254.4 L775.5 253.5 L774.9 252.5 L774.4 251.4 L774.1 250.2 L773.8 249.1 L773.6 247.9 L773.5 246.9 L773.6 245.8 L773.8 244.9 L774.1 244.1 L774.4 243.4 L774.9 242.8 L775.5 242.5 L776.1 242.3 L776.8 242.3 L777.6 242.5 L778.3 242.8 L779.0 243.3 L779.8 244.0 L780.5 244.8 L781.1 245.7 L781.7 246.7 L782.2 247.8 L782.5 249.0 L782.8 250.1 L783.0 251.3Z" fill="#c09020" fill-opacity="0.6" stroke="#801010" stroke-width="1"/>
<path d="M852.4 219.6 L852.2 221.3 L851.8 222.9 L851.1 224.3 L850.2 225.3 L849.0 226.1 L847.6 226.5 L846.1 226.6 L844.4 226.4 L842.7 225.8 L840.9 224.9 L839.1 223.7 L837.3 222.3 L835.6 220.6 L834.1 218.7 L832.7 216.7 L831.5 214.6 L830.6 212.4 L829.9 210.3 L829.5 208.2 L829.3 206.3 L829.5 204.5 L829.9 202.9 L830.6 201.5 L831.5 200.5 L832.7 199.7 L834.1 199.3 L835.6 199.2 L837.3 199.4 L839.1 200.0 L840.9 200.9 L842.7 202.1 L844.4 203.5 L846.1 205.2 L847.6 207.1 L849.0 209.1 L850.2 211.2 L851.1 213.4 L851.8 215.5 L852.2 217.6Z" fill="none" stroke="#303070" stroke-width="1"/>
<path d="M844.3 217.5 L844.3 218.5 L844.1 219.4 L843.8 220.2 L843.4 220.9 L842.9 221.5 L842.4 221.8 L841.7 222.0 L841.0 222.0 L840.3 221.8 L839.6 221.5 L838.8 221.0 L838.1 220.3 L837.4 219.5 L836.8 218.6 L836.2 217.6 L835.7 216.5 L835.3 215.3 L835.0 214.2 L834.9 213.1 L834.8 212.0 L834.9 210.9 L835.0 210.0 L835.3 209.2 L835.7 208.5 L836.2 207.9 L836.8 207.6 L837.4 207.4 L838.1 207.4 L838.8 207.6 L839.6 207.9 L840.3 208.4 L841.0 209.1 L841.7 209.9 L842.4 210.8 L842.9 211.8 L843.4 212.9 L843.8 214.1 L844.1 215.2 L844.3 216.4Z" fill="#e0b0b8" fill-opacity="0.6" stroke="#801010" stroke-width="1"/>
<polygon points="625.0,172.7 485.2,252.3 485.2,258.3 625.0,178.7" fill="#c86030" fill-opacity="0.35"/>
<polygon points="473.9,245.7 485.2,252.3 485.2,258.3 473.9,251.7" fill="#e04000" fill-opacity="0.2"/>
<polygon points="613.7,166.1 625.0,172.7 485.2,252.3 473.9,245.7" fill="#c08060" fill-opacity="0.18"/>
<path d="M613.7,166.1 625.0,172.7 485.2,252.3 473.9,245.7Z M613.7,172.1 625.0,178.7 485.2,258.3 473.9,251.7Z M613.7,166.1 613.7,172.1 M625.0,172.7 625.0,178.7 M485.2,252.3 485.2,258.3 M473.9,245.7 473.9,251.7" fill="none" stroke="#6e0606" stroke-width="1" stroke-linejoin="round"/>
<polygon points="655.5,175.3 504.6,261.2 504.6,267.2 655.5,181.3" fill="#c86030" fill-opacity="0.35"/>
<polygon points="493.3,254.7 504.6,261.2 504.6,267.2 493.3,260.7" fill="#e04000" fill-opacity="0.2"/>
<polygon points="644.2,168.8 655.5,175.3 504.6,261.2 493.3,254.7" fill="#c08060" fill-opacity="0.18"/>
<polygon points="644.2,168.8 655.5,175.3 655.5,181.3 650.6,184.1 650.6,178.1 639.3,171.5" fill="#f0a8b8" fill-opacity="0.5"/>
<path d="M644.2,168.8 655.5,175.3 504.6,261.2 493.3,254.7Z M644.2,174.8 655.5,181.3 504.6,267.2 493.3,260.7Z M644.2,168.8 644.2,174.8 M655.5,175.3 655.5,181.3 M504.6,261.2 504.6,267.2 M493.3,254.7 493.3,260.7" fill="none" stroke="#6e0606" stroke-width="1" stroke-linejoin="round"/>
<polygon points="663.1,198.0 511.8,284.2 511.8,290.2 663.1,204.0" fill="#c86030" fill-opacity="0.35"/>
<polygon points="500.5,277.6 511.8,284.2 511.8,290.2 500.5,283.6" fill="#e04000" fill-opacity="0.2"/>
<polygon points="651.7,191.5 663.1,198.0 511.8,284.2 500.5,277.6" fill="#c08060" fill-opacity="0.18"/>
<path d="M651.7,191.5 663.1,198.0 511.8,284.2 500.5,277.6Z M651.7,197.5 663.1,204.0 511.8,290.2 500.5,283.6Z M651.7,191.5 651.7,197.5 M663.1,198.0 663.1,204.0 M511.8,284.2 511.8,290.2 M500.5,277.6 500.5,283.6" fill="none" stroke="#6e0606" stroke-width="1" stroke-linejoin="round"/>
<polygon points="700.1,201.1 549.9,286.7 549.9,292.7 700.1,207.1" fill="#c86030" fill-opacity="0.35"/>
<polygon points="538.5,280.1 549.9,286.7 549.9,292.7 538.5,286.1" fill="#e04000" fill-opacity="0.2"/>
<polygon points="688.8,194.5 700.1,201.1 549.9,286.7 538.5,280.1" fill="#c08060" fill-opacity="0.18"/>
<polygon points="688.8,194.5 700.1,201.1 700.1,207.1 695.2,209.9 695.2,203.9 683.9,197.3" fill="#f0a8b8" fill-opacity="0.5"/>
<path d="M688.8,194.5 700.1,201.1 549.9,286.7 538.5,280.1Z M688.8,200.5 700.1,207.1 549.9,292.7 538.5,286.1Z M688.8,194.5 688.8,200.5 M700.1,201.1 700.1,207.1 M549.9,286.7 549.9,292.7 M538.5,280.1 538.5,286.1" fill="none" stroke="#6e0606" stroke-width="1" stroke-linejoin="round"/>
<polygon points="707.7,223.5 556.1,309.8 556.1,315.8 707.7,229.5" fill="#c86030" fill-opacity="0.35"/>
<polygon points="544.8,303.2 556.1,309.8 556.1,315.8 544.8,309.2" fill="#e04000" fill-opacity="0.2"/>
<polygon points="696.4,216.9 707.7,223.5 556.1,309.8 544.8,303.2" fill="#c08060" fill-opacity="0.18"/>
<path d="M696.4,216.9 707.7,223.5 556.1,309.8 544.8,303.2Z M696.4,222.9 707.7,229.5 556.1,315.8 544.8,309.2Z M696.4,216.9 696.4,222.9 M707.7,223.5 707.7,229.5 M556.1,309.8 556.1,315.8 M544.8,303.2 544.8,309.2" fill="none" stroke="#6e0606" stroke-width="1" stroke-linejoin="round"/>
<polygon points="745.0,227.0 592.0,314.2 592.0,320.2 745.0,233.0" fill="#c86030" fill-opacity="0.35"/>
<polygon points="580.6,307.6 592.0,314.2 592.0,320.2 580.6,313.6" fill="#e04000" fill-opacity="0.2"/>
<polygon points="733.7,220.5 745.0,227.0 592.0,314.2 580.6,307.6" fill="#c08060" fill-opacity="0.18"/>
<polygon points="733.7,220.5 745.0,227.0 745.0,233.0 740.1,235.8 740.1,229.8 728.8,223.3" fill="#f0a8b8" fill-opacity="0.5"/>
<path d="M733.7,220.5 745.0,227.0 592.0,314.2 580.6,307.6Z M733.7,226.5 745.0,233.0 592.0,320.2 580.6,313.6Z M733.7,220.5 733.7,226.5 M745.0,227.0 745.0,233.0 M592.0,314.2 592.0,320.2 M580.6,307.6 580.6,313.6" fill="none" stroke="#6e0606" stroke-width="1" stroke-linejoin="round"/>
<polygon points="751.8,250.5 602.1,335.8 602.1,341.8 751.8,256.5" fill="#c86030" fill-opacity="0.35"/>
<polygon points="590.7,329.2 602.1,335.8 602.1,341.8 590.7,335.2" fill="#e04000" fill-opacity="0.2"/>
<polygon points="740.5,243.9 751.8,250.5 602.1,335.8 590.7,329.2" fill="#c08060" fill-opacity="0.18"/>
<path d="M740.5,243.9 751.8,250.5 602.1,335.8 590.7,329.2Z M740.5,249.9 751.8,256.5 602.1,341.8 590.7,335.2Z M740.5,243.9 740.5,249.9 M751.8,250.5 751.8,256.5 M602.1,335.8 602.1,341.8 M590.7,329.2 590.7,335.2" fill="none" stroke="#6e0606" stroke-width="1" stroke-linejoin="round"/>
<polygon points="784.4,251.7 633.6,337.5 633.6,343.5 784.4,257.7" fill="#c86030" fill-opacity="0.35"/>
<polygon points="622.3,330.9 633.6,337.5 633.6,343.5 622.3,336.9" fill="#e04000" fill-opacity="0.2"/>
<polygon points="773.0,245.1 784.4,251.7 633.6,337.5 622.3,330.9" fill="#c08060" fill-opacity="0.18"/>
<polygon points="773.0,245.1 784.4,251.7 784.4,257.7 781.1,259.5 781.1,253.5 769.7,247.0" fill="#f0a8b8" fill-opacity="0.5"/>
<path d="M773.0,245.1 784.4,251.7 633.6,337.5 622.3,330.9Z M773.0,251.1 784.4,257.7 633.6,343.5 622.3,336.9Z M773.0,245.1 773.0,251.1 M784.4,251.7 784.4,257.7 M633.6,337.5 633.6,343.5 M622.3,330.9 622.3,336.9" fill="none" stroke="#6e0606" stroke-width="1" stroke-linejoin="round"/>
<line x1="624" y1="255.2" x2="624" y2="40" stroke="#3c64e8" stroke-width="2"/>
<path d="M624 32.5 C626 36 627.5 38 627 40 C626.5 42 621.5 42 621 40 C620.5 38 622 36 624 32.5Z" fill="#2030a0"/>
<text x="623.5" y="30.7" font-family="Liberation Sans" font-size="17" fill="#3060e0" stroke="#3060e0" stroke-width="0.3">Z</text>
<line x1="624" y1="255.2" x2="828" y2="372.5" stroke="#108010" stroke-width="2"/>
<path d="M835.5 377 L826 375.5 L829.4 369.5 Z" fill="#0a600a" stroke="#0a600a" stroke-width="1"/>
<text x="829.5" y="374" font-family="Liberation Sans" font-size="16" fill="#20a020" stroke="#20a020" stroke-width="0.4">Y</text>
<line x1="624" y1="255.2" x2="326" y2="427.5" stroke="#ff1818" stroke-width="2"/>
<path d="M320 431 L329.5 429.5 L326 423.5 Z" fill="#c01010" stroke="#c01010" stroke-width="1"/>
<text x="306" y="437.5" font-family="Liberation Sans" font-size="16" fill="#ff2020" stroke="#ff2020" stroke-width="0.3">X</text>
</g></svg>
<!-- legend -->
<div class="a" style="left:308px;top:5px;width:103px;height:379px;background:#fff;border:1px solid #000"></div>
<div class="a" style="left:313px;top:15px;font-size:11.5px;font-weight:bold;color:#111">E Field [V/m]</div>
<div class="a" style="left:312px;top:36.00px;width:27px;height:22.6px;background:#f70a0a"></div>
<div class="a" style="left:312px;top:58.36px;width:27px;height:22.6px;background:#f74d0a"></div>
<div class="a" style="left:312px;top:80.72px;width:27px;height:22.6px;background:#f7910a"></div>
<div class="a" style="left:312px;top:103.08px;width:27px;height:22.6px;background:#f7d50a"></div>
<div class="a" style="left:312px;top:125.44px;width:27px;height:22.6px;background:#d5f70a"></div>
<div class="a" style="left:312px;top:147.80px;width:27px;height:22.6px;background:#91f70a"></div>
<div class="a" style="left:312px;top:170.16px;width:27px;height:22.6px;background:#4df70a"></div>
<div class="a" style="left:312px;top:192.52px;width:27px;height:22.6px;background:#0af70a"></div>
<div class="a" style="left:312px;top:214.88px;width:27px;height:22.6px;background:#0af74d"></div>
<div class="a" style="left:312px;top:237.24px;width:27px;height:22.6px;background:#0af791"></div>
<div class="a" style="left:312px;top:259.60px;width:27px;height:22.6px;background:#0af7d5"></div>
<div class="a" style="left:312px;top:281.96px;width:27px;height:22.6px;background:#0ad5f7"></div>
<div class="a" style="left:312px;top:304.32px;width:27px;height:22.6px;background:#0a91f7"></div>
<div class="a" style="left:312px;top:326.68px;width:27px;height:22.6px;background:#0a4df7"></div>
<div class="a" style="left:312px;top:349.04px;width:27px;height:22.6px;background:#0a0af7"></div>
<div class="a" style="left:349px;top:30.5px;font-size:10.5px;line-height:12px;color:#111">1.5000E+03</div>
<div class="a" style="left:349px;top:52.9px;font-size:10.5px;line-height:12px;color:#111">1.0255E+03</div>
<div class="a" style="left:349px;top:75.2px;font-size:10.5px;line-height:12px;color:#111">7.0115E+02</div>
<div class="a" style="left:349px;top:97.6px;font-size:10.5px;line-height:12px;color:#111">4.7937E+02</div>
<div class="a" style="left:349px;top:119.9px;font-size:10.5px;line-height:12px;color:#111">3.2774E+02</div>
<div class="a" style="left:349px;top:142.3px;font-size:10.5px;line-height:12px;color:#111">2.2407E+02</div>
<div class="a" style="left:349px;top:164.7px;font-size:10.5px;line-height:12px;color:#111">1.5319E+02</div>
<div class="a" style="left:349px;top:187.0px;font-size:10.5px;line-height:12px;color:#111">1.0474E+02</div>
<div class="a" style="left:349px;top:209.4px;font-size:10.5px;line-height:12px;color:#111">7.1608E+01</div>
<div class="a" style="left:349px;top:231.7px;font-size:10.5px;line-height:12px;color:#111">4.8957E+01</div>
<div class="a" style="left:349px;top:254.1px;font-size:10.5px;line-height:12px;color:#111">3.3472E+01</div>
<div class="a" style="left:349px;top:276.5px;font-size:10.5px;line-height:12px;color:#111">2.2884E+01</div>
<div class="a" style="left:349px;top:298.8px;font-size:10.5px;line-height:12px;color:#111">1.5646E+01</div>
<div class="a" style="left:349px;top:321.2px;font-size:10.5px;line-height:12px;color:#111">1.0697E+01</div>
<div class="a" style="left:349px;top:343.5px;font-size:10.5px;line-height:12px;color:#111">7.3133E+00</div>
<div class="a" style="left:349px;top:365.9px;font-size:10.5px;line-height:12px;color:#111">5.0000E+00</div>

<div class="a" style="left:411px;top:5px;width:4px;height:383px;background:#fff"></div>
<div class="a" style="left:382px;top:384px;width:33px;height:4px;background:#fff"></div>
<div class="a" style="left:381px;top:383px;width:4px;height:25px;background:#fff"></div>
<div class="a" style="left:308px;top:403px;width:77px;height:5px;background:#fff"></div>
<div class="a" style="left:308px;top:383px;width:74px;height:21px;background:#fff;border:1px solid #000;border-top:none"></div>
<div class="a" style="left:313px;top:387px;width:27px;height:5px;background:#0000ff"></div>
<div class="a" style="left:344px;top:385.5px;font-size:10.5px;line-height:12px;color:#111">0.0000</div>



<!-- text box -->
<div class="a" style="left:422px;top:54px;width:225px;height:38px;background:#808080"></div>
<div class="a" style="left:415px;top:47px;width:225px;height:38px;background:#e4e4e4"></div>
<div class="a" style="left:425px;top:60px;font-size:18px;line-height:22px;color:#0000f0;letter-spacing:-0.05px;-webkit-text-stroke:0.3px #0000f0">NormalizedDistance = 0.4</div>
<!-- ===== dialog ===== -->
<div class="a" style="left:8px;top:6px;width:305px;height:284px;background:#f0f0f0;border:1px solid #8a8a8a;border-right:none;box-shadow:-1px 1px 2px rgba(0,0,0,.2)">
</div>
<div class="a" style="left:9px;top:7px;width:304px;height:30px;background:#fff"></div>
<div class="a" style="left:17px;top:15px;font-size:12px;color:#999;letter-spacing:0.25px">Animation: Animation1</div>
<div class="a" style="left:193px;top:21px;width:10px;height:1px;background:#999"></div>
<div class="a" style="left:238px;top:16px;width:10px;height:10px;border:1px solid #ccc"></div>
<svg class="a" style="left:283px;top:15px" width="12" height="12"><path d="M1 1 L11 11 M11 1 L1 11" stroke="#777" stroke-width="1.1"/></svg>


<!-- slider -->
<div class="a" style="left:42px;top:50px;width:1px;height:3px;background:#000"></div><div class="a" style="left:63px;top:50px;width:1px;height:3px;background:#000"></div><div class="a" style="left:84px;top:50px;width:1px;height:3px;background:#000"></div><div class="a" style="left:105px;top:50px;width:1px;height:3px;background:#000"></div><div class="a" style="left:126px;top:50px;width:1px;height:3px;background:#000"></div><div class="a" style="left:147px;top:50px;width:1px;height:3px;background:#000"></div><div class="a" style="left:168px;top:50px;width:1px;height:3px;background:#000"></div><div class="a" style="left:189px;top:50px;width:1px;height:3px;background:#000"></div><div class="a" style="left:210px;top:50px;width:1px;height:3px;background:#000"></div><div class="a" style="left:231px;top:50px;width:1px;height:3px;background:#000"></div><div class="a" style="left:252px;top:50px;width:1px;height:3px;background:#000"></div>
<div class="a" style="left:37px;top:64px;width:219px;height:3px;background:#828282;border-bottom:1px solid #fff"></div>
<svg class="a" style="left:141px;top:53px" width="13" height="24"><path d="M1.5 22.5 L1.5 6 L6 1 L11.5 6 L11.5 22.5 Z" fill="#f0f0f0" stroke="#fff"/><path d="M6 1 L11.5 6 L11.5 22.5 L1.5 22.5" fill="none" stroke="#696969"/><path d="M10.5 6.5 L10.5 21.5 L2 21.5" fill="none" stroke="#a0a0a0"/></svg>
<!-- speed slider -->
<div class="a" style="left:277px;top:53px;width:4px;height:1px;background:#000"></div><div class="a" style="left:277px;top:57px;width:4px;height:1px;background:#000"></div><div class="a" style="left:277px;top:61px;width:4px;height:1px;background:#000"></div><div class="a" style="left:277px;top:65px;width:4px;height:1px;background:#000"></div><div class="a" style="left:277px;top:69px;width:4px;height:1px;background:#000"></div><div class="a" style="left:277px;top:73px;width:4px;height:1px;background:#000"></div><div class="a" style="left:277px;top:77px;width:4px;height:1px;background:#000"></div><div class="a" style="left:277px;top:81px;width:4px;height:1px;background:#000"></div><div class="a" style="left:277px;top:85px;width:4px;height:1px;background:#000"></div><div class="a" style="left:277px;top:89px;width:4px;height:1px;background:#000"></div><div class="a" style="left:277px;top:93px;width:4px;height:1px;background:#000"></div><div class="a" style="left:277px;top:97px;width:4px;height:1px;background:#000"></div><div class="a" style="left:277px;top:101px;width:4px;height:1px;background:#000"></div><div class="a" style="left:277px;top:105px;width:4px;height:1px;background:#000"></div>
<div class="a" style="left:292px;top:48px;width:3px;height:62px;background:#828282;border-right:1px solid #fff"></div>
<svg class="a" style="left:281px;top:95px" width="24" height="13"><path d="M22.5 1.5 L6 1.5 L1 6.5 L6 11.5 L22.5 11.5 Z" fill="#f0f0f0" stroke="#fff"/><path d="M1 6.5 L6 11.5 L22.5 11.5 L22.5 1.5" fill="none" stroke="#696969"/><path d="M21.5 2.5 L21.5 10.5 L6.5 10.5" fill="none" stroke="#a0a0a0"/></svg>
<div class="a" style="left:263px;top:117px;font-size:11px;letter-spacing:-0.2px">Speed</div>
<!-- transport buttons -->
<div class="btn" style="left:24px;top:91px;width:36px;height:29px"></div>
<div class="btn" style="left:71px;top:91px;width:36px;height:29px"></div>
<div class="btn" style="left:117px;top:91px;width:36px;height:29px"></div>
<div class="btn" style="left:164px;top:91px;width:36px;height:29px"></div>
<div class="btn" style="left:210px;top:91px;width:36px;height:29px"></div>
<svg class="a" style="left:0;top:0" width="260" height="130">
<path d="M35 105.5 L44 96.5 L44 114.5 Z" fill="#000"/>
<path d="M82 105.5 L91 96.5 L91 114.5 Z M92 96.5 H95 V114.5 H92 Z" fill="#000"/>
<rect x="129" y="101" width="10" height="9" fill="#000"/>
<path d="M176 96.5 H179 V114.5 H176 Z M180 96.5 L189 105.5 L180 114.5 Z" fill="#000"/>
<path d="M225 96.5 L234 105.5 L225 114.5 Z" fill="#000"/>
</svg>
<div class="a" style="left:21px;top:139px;font-size:11px;letter-spacing:-0.25px">Frame: 5, NormalizedDistance = 0.4</div>
<div class="btn" style="left:248px;top:139px;width:54px;height:26px"><span style="top:6px">Export...</span></div>
<div class="btn" style="left:248px;top:177px;width:54px;height:26px"><span style="top:6px">Close</span></div>
<!-- group box -->
<div class="a" style="left:17px;top:223px;width:290px;height:58px;border:1px solid #a0a0a0;box-shadow:1px 1px 0 #fff, inset 1px 1px 0 #fff"></div>
<div class="a" style="left:24px;top:218px;padding:0 2px;background:#f0f0f0;font-size:11px">Label:</div>
<div class="a" style="left:24px;top:245px;font-size:11px">Background:</div>
<div class="a" style="left:87px;top:241px;width:75px;height:22px;background:#f0f0f0;border-top:1px solid #fff;border-left:1px solid #fff;border-right:1px solid #000;border-bottom:1px solid #000;box-shadow:inset -1px -1px 0 #696969"></div>
<div class="a" style="left:92px;top:244px;width:65px;height:15px;background:#e3e3e3;border:1px solid #fff"></div>
<div class="btn" style="left:171px;top:241px;width:75px;height:22px"><span style="top:3px">Font</span></div>
<div class="a" style="left:257px;top:246px;width:12px;height:12px;background:#fff;border:1px solid #444;box-shadow:inset 1px 1px 0 #a0a0a0"><svg width="10" height="10" style="position:absolute;left:0;top:0"><path d="M2.5 4.5 L4.3 7 L8 2" stroke="#000" stroke-width="1.8" fill="none"/></svg></div>
<div class="a" style="left:275px;top:246px;font-size:11px">Show</div>

</body></html>
